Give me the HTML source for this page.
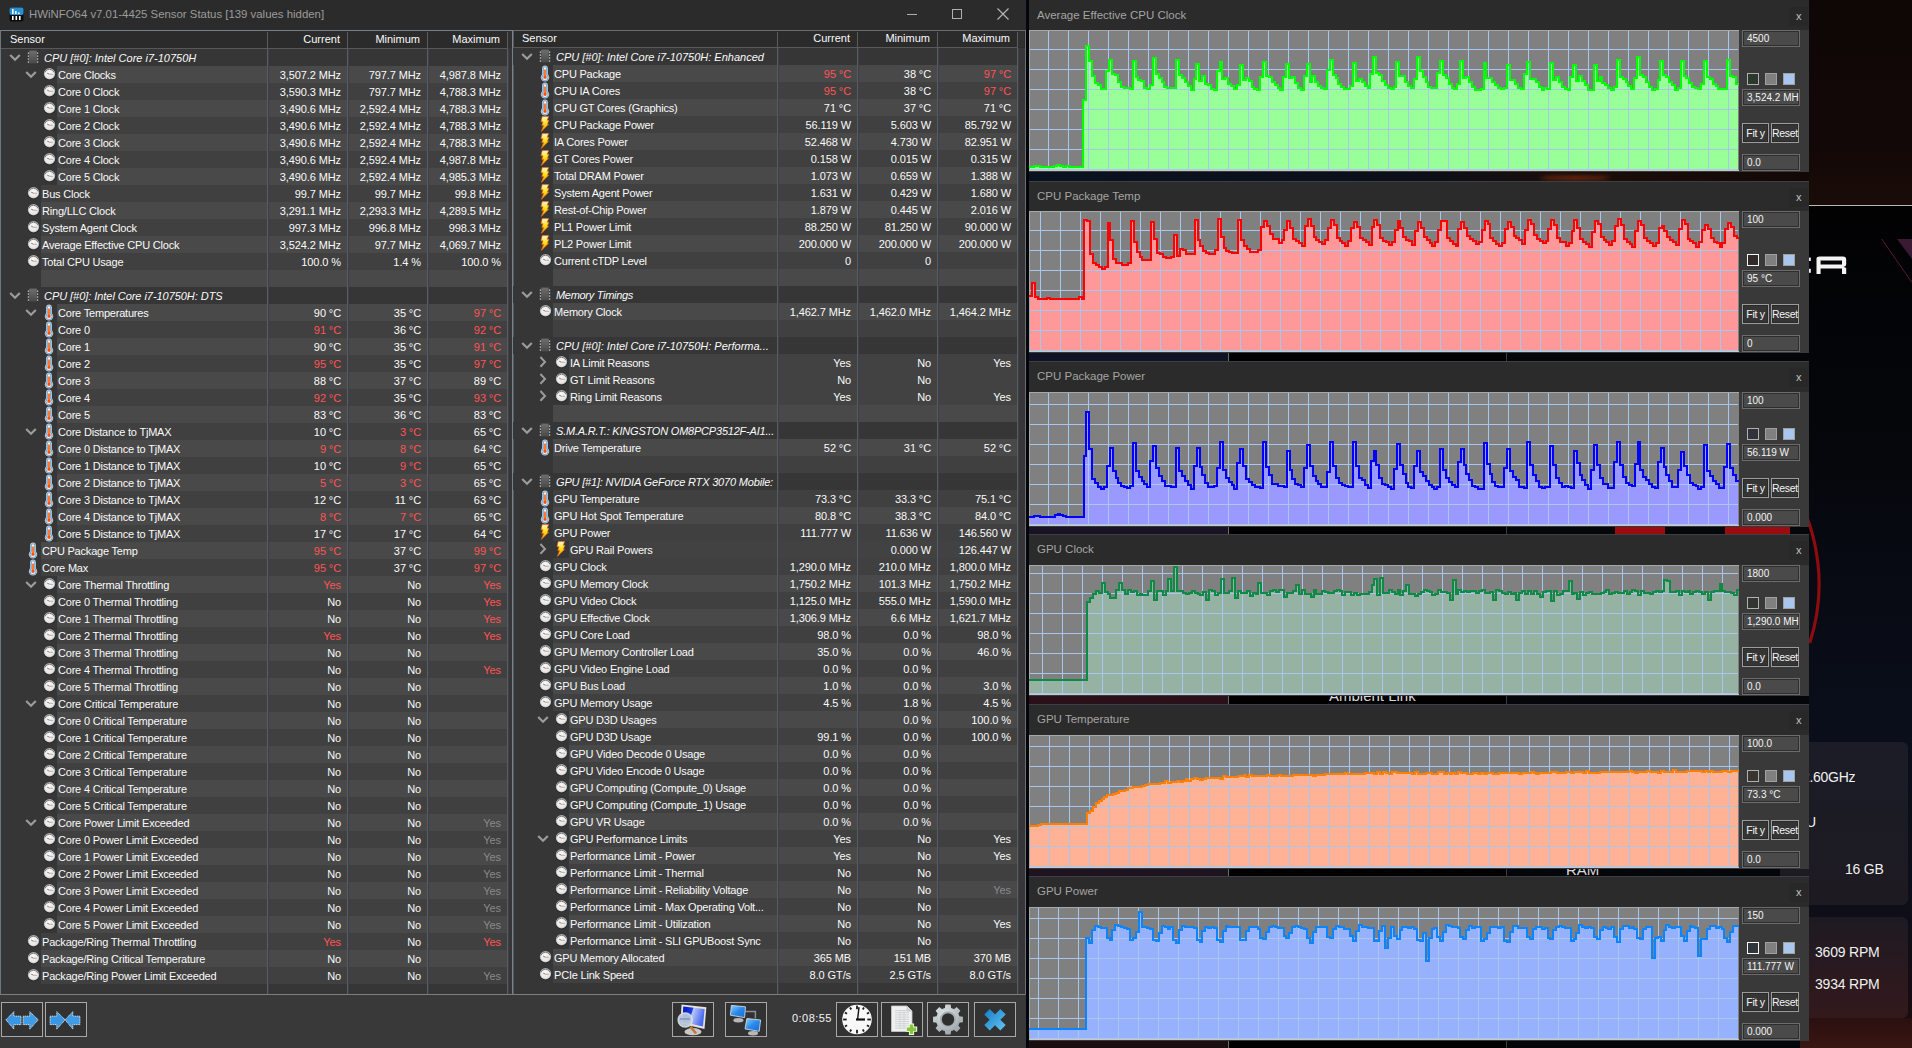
<!DOCTYPE html><html><head><meta charset="utf-8"><style>
*{margin:0;padding:0;box-sizing:border-box}
html,body{width:1912px;height:1048px;overflow:hidden}
body{position:relative;background:#07090f;font-family:"Liberation Sans", sans-serif;}
.ic{position:absolute;display:block}
.bg{position:absolute;height:17px}
.t{position:absolute;height:17px;line-height:17px;font-size:11px;color:#fafafa;white-space:nowrap;padding-top:1px;letter-spacing:-0.2px}
.gi{font-style:italic;color:#fafafa;letter-spacing:0px}
.v{position:absolute;width:113px;text-align:right;height:17px;line-height:17px;font-size:11px;color:#fafafa;white-space:nowrap;padding-top:1px;letter-spacing:-0.1px}
.red{color:#ff5454}
.gry{color:#8a8a8a}
.hd{position:absolute;top:31px;height:17px;line-height:17px;font-size:11px;color:#fafafa;white-space:nowrap}
.gt{position:absolute;font-size:11.5px;line-height:16px;color:#a4a4a4;white-space:nowrap}
.gx{position:absolute;font-size:11px;line-height:16px;color:#c0c0c0}
.box{position:absolute;left:1742px;width:58px;height:17px;border:1px solid #6c6c6c;background:#4a4a4a;box-shadow:inset 0 0 0 1px #2e2e2e}
.bt{position:absolute;left:1747px;height:17px;line-height:17px;font-size:10px;color:#f4f4f4;white-space:nowrap;width:52px;overflow:hidden}
.sq{position:absolute;width:12px;height:12px;border:1px solid #a0a0a0}
.btn{position:absolute;height:20px;border:1px solid #9c9c9c;box-shadow:inset 0 0 0 1px #2a2a2a;background:#353535;color:#f4f4f4;font-size:10.5px;line-height:18px;text-align:center;white-space:nowrap;letter-spacing:-0.3px}
.tbb{position:absolute;top:1002px;width:42px;height:35px;border:1px solid #a8a8a8;background:#323232}
</style></head><body>
<svg width="0" height="0" style="position:absolute"><defs><radialGradient id="gclk" cx="0.45" cy="0.35" r="0.75"><stop offset="0" stop-color="#fafafa"/><stop offset="0.75" stop-color="#e4e4e4"/><stop offset="1" stop-color="#c4c4c4"/></radialGradient><linearGradient id="gbolt" x1="0" y1="0" x2="0" y2="1"><stop offset="0" stop-color="#fff6d8"/><stop offset="0.45" stop-color="#ffe21a"/><stop offset="1" stop-color="#ff8a00"/></linearGradient><linearGradient id="gchip" x1="0" y1="0" x2="0" y2="1"><stop offset="0" stop-color="#6e6e6e"/><stop offset="1" stop-color="#4a4a4a"/></linearGradient></defs></svg>
<div style="position:absolute;left:1026px;top:0;width:886px;height:205px;background:linear-gradient(180deg,#0e0706 0%,#120807 70%,#1a0c08 100%)"></div>
<div style="position:absolute;left:1809px;top:205px;width:103px;height:1px;background:#b8b8b8"></div>
<div style="position:absolute;left:1026px;top:206px;width:886px;height:842px;background:linear-gradient(180deg,#020203 0%,#05070c 30%,#0a0e1a 60%,#0c0f1a 80%,#1a0c10 100%)"></div>
<div style="position:absolute;left:1029px;top:168px;width:780px;height:16px;background:linear-gradient(90deg,#0a1220 0%,#0c0f18 50%,#1a0e0a 70%,#120806 100%)"></div>
<div style="position:absolute;left:1540px;top:176px;width:70px;height:4px;background:#7a2a0e;filter:blur(2px);border-radius:50%"></div>
<div style="position:absolute;left:1029px;top:206px;width:199px;height:842px;background:linear-gradient(180deg,#0c1220 0%,#141428 30%,#2a1018 60%,#1e1420 80%,#1a0e10 100%)"></div>
<div style="position:absolute;left:1228px;top:206px;width:1px;height:842px;background:#6a6a6a"></div>
<div style="position:absolute;left:1229px;top:206px;width:277px;height:842px;background:#000"></div>
<div style="position:absolute;left:1506px;top:206px;width:1px;height:842px;background:#3a3a3a"></div>
<div style="position:absolute;left:1507px;top:206px;width:302px;height:842px;background:#04060a"></div>
<div style="position:absolute;left:1329px;top:687px;font-size:15px;color:#d8d8d8;white-space:nowrap">Ambient Link</div>
<div style="position:absolute;left:1566px;top:861px;font-size:15px;color:#d8d8d8;white-space:nowrap">RAM</div>
<div style="position:absolute;left:1615px;top:524px;width:50px;height:10px;background:#9a0c10"></div>
<div style="position:absolute;left:1725px;top:524px;width:65px;height:10px;background:#9a0c10"></div>
<svg style="position:absolute;left:1026px;top:0" width="886" height="1048" viewBox="1026 0 886 1048"><path d="M1769.9 456.2 A191 191 0 0 1 1809.7 643.0" fill="none" stroke="#8c0c10" stroke-width="3.2"/><path d="M1881.7 239 L1912 282.5" stroke="#5a1a2c" stroke-width="1"/><path d="M1897 239 L1912 239 L1912 259 Z" fill="#3a1a32"/><path d="M1816.5 274 V258.5 Q1816.5 256.5 1820 256.5 H1843 Q1846.2 256.5 1846.2 259.5 V264 Q1846.2 266.5 1843.5 266.8 L1846.2 268 V274 H1842 V268.5 H1820.6 V274 Z M1820.6 260.4 V264.6 H1842 V260.4 Z" fill="#f4f4f4" fill-rule="evenodd"/><rect x="1809" y="257.6" width="1.8" height="3.4" fill="#f4f4f4"/><rect x="1809" y="268.8" width="1.8" height="4" fill="#f4f4f4"/></svg>
<div style="position:absolute;left:1780px;top:742px;width:128px;height:163px;background:linear-gradient(180deg,#1a1c26,#1e1a22);border-radius:6px"></div>
<div style="position:absolute;left:1780px;top:917px;width:128px;height:101px;background:linear-gradient(180deg,#1e1a22,#33191c);border-radius:6px"></div>
<div style="position:absolute;left:1800px;top:1018px;width:112px;height:30px;background:linear-gradient(180deg,#2a1010,#3a1612)"></div>
<div style="position:absolute;left:1802px;top:769px;font-size:14px;color:#f0f0f0;letter-spacing:-0.3px">2.60GHz</div>
<div style="position:absolute;left:1806px;top:814px;font-size:14px;color:#f0f0f0">U</div>
<div style="position:absolute;left:1845px;top:861px;font-size:14px;color:#f0f0f0;letter-spacing:-0.2px">16 GB</div>
<div style="position:absolute;left:1815px;top:944px;font-size:14px;color:#f0f0f0;letter-spacing:-0.2px">3609 RPM</div>
<div style="position:absolute;left:1815px;top:976px;font-size:14px;color:#f0f0f0;letter-spacing:-0.2px">3934 RPM</div>
<div style="position:absolute;left:0;top:0;width:1026px;height:1048px;background:#393939"></div>
<div style="position:absolute;left:0;top:0;width:1026px;height:30px;background:#2b2b2b"></div>
<div style="position:absolute;left:1026px;top:0;width:3px;height:1048px;background:#03070d"></div>
<svg style="position:absolute;left:9px;top:7px" width="15" height="15" viewBox="0 0 15 15"><rect x="0.5" y="0.5" width="14" height="14" rx="2" fill="#0c0c0c"/><rect x="0.5" y="0.5" width="14" height="7.5" rx="2" fill="#2a8fd0"/><rect x="3" y="2" width="1.6" height="5" fill="#fff"/><rect x="6" y="4" width="1.6" height="3" fill="#fff"/><rect x="9" y="5.5" width="1.6" height="1.5" fill="#fff"/><rect x="3" y="9" width="1.6" height="4" fill="#fff"/><rect x="6.5" y="9" width="1.6" height="4" fill="#fff"/><rect x="10" y="9" width="1.6" height="4" fill="#fff"/></svg>
<div style="position:absolute;left:29px;top:6px;font-size:11.4px;line-height:16px;color:#9c9c9c;white-space:nowrap">HWiNFO64 v7.01-4425 Sensor Status [139 values hidden]</div>
<div style="position:absolute;left:907px;top:14px;width:10px;height:1px;background:#b0b0b0"></div>
<div style="position:absolute;left:952px;top:9px;width:10px;height:10px;border:1px solid #b0b0b0"></div>
<svg style="position:absolute;left:997px;top:8px" width="12" height="12" viewBox="0 0 12 12"><path d="M0.5 0.5 L11.5 11.5 M11.5 0.5 L0.5 11.5" stroke="#b8b8b8" stroke-width="1.1"/></svg>
<div style="position:absolute;left:0;top:30px;width:1026px;height:965px;background:#363636"></div>
<div style="position:absolute;left:1px;top:31px;width:1024px;height:17px;background:#2b2b2b"></div>
<div style="position:absolute;left:0;top:30px;width:1026px;height:1px;background:#7a7e86"></div>
<div style="position:absolute;left:0;top:30px;width:1px;height:965px;background:#70747c"></div>
<div style="position:absolute;left:0;top:994px;width:1026px;height:1px;background:#7e7e7e"></div>
<div style="position:absolute;left:512px;top:30px;width:1px;height:965px;background:#7c8088"></div><div style="position:absolute;left:513px;top:31px;width:1px;height:963px;background:#55585e"></div>
<div style="position:absolute;left:1025px;top:30px;width:1px;height:965px;background:#6e6e6e"></div>
<div style="position:absolute;left:1px;top:48px;width:507px;height:1px;background:#585858"></div>
<div style="position:absolute;left:508px;top:31px;width:4px;height:17px;background:#303030"></div>
<div class="hd" style="left:10px;top:31px">Sensor</div>
<div class="hd" style="left:227px;top:31px;width:113px;text-align:right">Current</div>
<div class="hd" style="left:307px;top:31px;width:113px;text-align:right">Minimum</div>
<div class="hd" style="left:387px;top:31px;width:113px;text-align:right">Maximum</div>
<div style="position:absolute;left:513px;top:47px;width:505px;height:1px;background:#585858"></div>
<div style="position:absolute;left:1018px;top:31px;width:6px;height:16px;background:#303030"></div>
<div class="hd" style="left:522px;top:30px">Sensor</div>
<div class="hd" style="left:737px;top:30px;width:113px;text-align:right">Current</div>
<div class="hd" style="left:817px;top:30px;width:113px;text-align:right">Minimum</div>
<div class="hd" style="left:897px;top:30px;width:113px;text-align:right">Maximum</div>
<div class="bg" style="left:1px;top:49px;width:506px;background:#363636"></div>
<svg class="ic" style="left:9px;top:53px" width="12" height="9" viewBox="0 0 12 9"><path d="M1.2 1.9 L6 6.8 L10.8 1.9" fill="none" stroke="#9c9c9c" stroke-width="2.2"/></svg>
<svg class="ic" style="left:27px;top:50px" width="12" height="15" viewBox="0 0 12 15"><rect x="2.3" y="0.6" width="7.4" height="12.8" fill="url(#gchip)"/><rect x="0.8" y="2.50" width="1.3" height="1.3" fill="#d0d0d0"/><rect x="9.9" y="2.50" width="1.3" height="1.3" fill="#d0d0d0"/><rect x="0.8" y="5.45" width="1.3" height="1.3" fill="#d0d0d0"/><rect x="9.9" y="5.45" width="1.3" height="1.3" fill="#d0d0d0"/><rect x="0.8" y="8.40" width="1.3" height="1.3" fill="#d0d0d0"/><rect x="9.9" y="8.40" width="1.3" height="1.3" fill="#d0d0d0"/><rect x="0.8" y="11.35" width="1.3" height="1.3" fill="#d0d0d0"/><rect x="9.9" y="11.35" width="1.3" height="1.3" fill="#d0d0d0"/></svg>
<div class="t gi" style="left:44px;top:49px;letter-spacing:0px">CPU [#0]: Intel Core i7-10750H</div>
<div class="bg" style="left:57px;top:66px;width:210px;background:#494949"></div>
<div class="bg" style="left:269px;top:66px;width:78px;background:#494949"></div>
<div class="bg" style="left:349px;top:66px;width:78px;background:#494949"></div>
<div class="bg" style="left:429px;top:66px;width:78px;background:#494949"></div>
<svg class="ic" style="left:25px;top:70px" width="12" height="9" viewBox="0 0 12 9"><path d="M1.2 1.9 L6 6.8 L10.8 1.9" fill="none" stroke="#9c9c9c" stroke-width="2.2"/></svg>
<svg class="ic" style="left:42.5px;top:67px" width="13" height="14" viewBox="0 0 13 14"><circle cx="6.5" cy="7.3" r="5.9" fill="#181818" opacity="0.9"/><circle cx="6.5" cy="6.8" r="5.7" fill="#b4b4b4"/><circle cx="6.5" cy="7.1" r="4.9" fill="url(#gclk)"/><path d="M1.9 5.4 A4.9 4.9 0 0 1 11.1 5.4" fill="none" stroke="#808080" stroke-width="1"/><path d="M6.5 7.2 L4.2 6.2" stroke="#8c6a4a" stroke-width="0.9"/><path d="M6.5 7.2 L9.8 7.4" stroke="#909090" stroke-width="0.7"/></svg>
<div class="t" style="left:58px;top:66px">Core Clocks</div>
<div class="v" style="left:228px;top:66px">3,507.2 MHz</div>
<div class="v" style="left:308px;top:66px">797.7 MHz</div>
<div class="v" style="left:388px;top:66px">4,987.8 MHz</div>
<div class="bg" style="left:57px;top:83px;width:210px;background:#404040"></div>
<div class="bg" style="left:269px;top:83px;width:78px;background:#404040"></div>
<div class="bg" style="left:349px;top:83px;width:78px;background:#404040"></div>
<div class="bg" style="left:429px;top:83px;width:78px;background:#404040"></div>
<svg class="ic" style="left:42.5px;top:84px" width="13" height="14" viewBox="0 0 13 14"><circle cx="6.5" cy="7.3" r="5.9" fill="#181818" opacity="0.9"/><circle cx="6.5" cy="6.8" r="5.7" fill="#b4b4b4"/><circle cx="6.5" cy="7.1" r="4.9" fill="url(#gclk)"/><path d="M1.9 5.4 A4.9 4.9 0 0 1 11.1 5.4" fill="none" stroke="#808080" stroke-width="1"/><path d="M6.5 7.2 L4.2 6.2" stroke="#8c6a4a" stroke-width="0.9"/><path d="M6.5 7.2 L9.8 7.4" stroke="#909090" stroke-width="0.7"/></svg>
<div class="t" style="left:58px;top:83px">Core 0 Clock</div>
<div class="v" style="left:228px;top:83px">3,590.3 MHz</div>
<div class="v" style="left:308px;top:83px">797.7 MHz</div>
<div class="v" style="left:388px;top:83px">4,788.3 MHz</div>
<div class="bg" style="left:57px;top:100px;width:210px;background:#494949"></div>
<div class="bg" style="left:269px;top:100px;width:78px;background:#494949"></div>
<div class="bg" style="left:349px;top:100px;width:78px;background:#494949"></div>
<div class="bg" style="left:429px;top:100px;width:78px;background:#494949"></div>
<svg class="ic" style="left:42.5px;top:101px" width="13" height="14" viewBox="0 0 13 14"><circle cx="6.5" cy="7.3" r="5.9" fill="#181818" opacity="0.9"/><circle cx="6.5" cy="6.8" r="5.7" fill="#b4b4b4"/><circle cx="6.5" cy="7.1" r="4.9" fill="url(#gclk)"/><path d="M1.9 5.4 A4.9 4.9 0 0 1 11.1 5.4" fill="none" stroke="#808080" stroke-width="1"/><path d="M6.5 7.2 L4.2 6.2" stroke="#8c6a4a" stroke-width="0.9"/><path d="M6.5 7.2 L9.8 7.4" stroke="#909090" stroke-width="0.7"/></svg>
<div class="t" style="left:58px;top:100px">Core 1 Clock</div>
<div class="v" style="left:228px;top:100px">3,490.6 MHz</div>
<div class="v" style="left:308px;top:100px">2,592.4 MHz</div>
<div class="v" style="left:388px;top:100px">4,788.3 MHz</div>
<div class="bg" style="left:57px;top:117px;width:210px;background:#404040"></div>
<div class="bg" style="left:269px;top:117px;width:78px;background:#404040"></div>
<div class="bg" style="left:349px;top:117px;width:78px;background:#404040"></div>
<div class="bg" style="left:429px;top:117px;width:78px;background:#404040"></div>
<svg class="ic" style="left:42.5px;top:118px" width="13" height="14" viewBox="0 0 13 14"><circle cx="6.5" cy="7.3" r="5.9" fill="#181818" opacity="0.9"/><circle cx="6.5" cy="6.8" r="5.7" fill="#b4b4b4"/><circle cx="6.5" cy="7.1" r="4.9" fill="url(#gclk)"/><path d="M1.9 5.4 A4.9 4.9 0 0 1 11.1 5.4" fill="none" stroke="#808080" stroke-width="1"/><path d="M6.5 7.2 L4.2 6.2" stroke="#8c6a4a" stroke-width="0.9"/><path d="M6.5 7.2 L9.8 7.4" stroke="#909090" stroke-width="0.7"/></svg>
<div class="t" style="left:58px;top:117px">Core 2 Clock</div>
<div class="v" style="left:228px;top:117px">3,490.6 MHz</div>
<div class="v" style="left:308px;top:117px">2,592.4 MHz</div>
<div class="v" style="left:388px;top:117px">4,788.3 MHz</div>
<div class="bg" style="left:57px;top:134px;width:210px;background:#494949"></div>
<div class="bg" style="left:269px;top:134px;width:78px;background:#494949"></div>
<div class="bg" style="left:349px;top:134px;width:78px;background:#494949"></div>
<div class="bg" style="left:429px;top:134px;width:78px;background:#494949"></div>
<svg class="ic" style="left:42.5px;top:135px" width="13" height="14" viewBox="0 0 13 14"><circle cx="6.5" cy="7.3" r="5.9" fill="#181818" opacity="0.9"/><circle cx="6.5" cy="6.8" r="5.7" fill="#b4b4b4"/><circle cx="6.5" cy="7.1" r="4.9" fill="url(#gclk)"/><path d="M1.9 5.4 A4.9 4.9 0 0 1 11.1 5.4" fill="none" stroke="#808080" stroke-width="1"/><path d="M6.5 7.2 L4.2 6.2" stroke="#8c6a4a" stroke-width="0.9"/><path d="M6.5 7.2 L9.8 7.4" stroke="#909090" stroke-width="0.7"/></svg>
<div class="t" style="left:58px;top:134px">Core 3 Clock</div>
<div class="v" style="left:228px;top:134px">3,490.6 MHz</div>
<div class="v" style="left:308px;top:134px">2,592.4 MHz</div>
<div class="v" style="left:388px;top:134px">4,788.3 MHz</div>
<div class="bg" style="left:57px;top:151px;width:210px;background:#404040"></div>
<div class="bg" style="left:269px;top:151px;width:78px;background:#404040"></div>
<div class="bg" style="left:349px;top:151px;width:78px;background:#404040"></div>
<div class="bg" style="left:429px;top:151px;width:78px;background:#404040"></div>
<svg class="ic" style="left:42.5px;top:152px" width="13" height="14" viewBox="0 0 13 14"><circle cx="6.5" cy="7.3" r="5.9" fill="#181818" opacity="0.9"/><circle cx="6.5" cy="6.8" r="5.7" fill="#b4b4b4"/><circle cx="6.5" cy="7.1" r="4.9" fill="url(#gclk)"/><path d="M1.9 5.4 A4.9 4.9 0 0 1 11.1 5.4" fill="none" stroke="#808080" stroke-width="1"/><path d="M6.5 7.2 L4.2 6.2" stroke="#8c6a4a" stroke-width="0.9"/><path d="M6.5 7.2 L9.8 7.4" stroke="#909090" stroke-width="0.7"/></svg>
<div class="t" style="left:58px;top:151px">Core 4 Clock</div>
<div class="v" style="left:228px;top:151px">3,490.6 MHz</div>
<div class="v" style="left:308px;top:151px">2,592.4 MHz</div>
<div class="v" style="left:388px;top:151px">4,987.8 MHz</div>
<div class="bg" style="left:57px;top:168px;width:210px;background:#494949"></div>
<div class="bg" style="left:269px;top:168px;width:78px;background:#494949"></div>
<div class="bg" style="left:349px;top:168px;width:78px;background:#494949"></div>
<div class="bg" style="left:429px;top:168px;width:78px;background:#494949"></div>
<svg class="ic" style="left:42.5px;top:169px" width="13" height="14" viewBox="0 0 13 14"><circle cx="6.5" cy="7.3" r="5.9" fill="#181818" opacity="0.9"/><circle cx="6.5" cy="6.8" r="5.7" fill="#b4b4b4"/><circle cx="6.5" cy="7.1" r="4.9" fill="url(#gclk)"/><path d="M1.9 5.4 A4.9 4.9 0 0 1 11.1 5.4" fill="none" stroke="#808080" stroke-width="1"/><path d="M6.5 7.2 L4.2 6.2" stroke="#8c6a4a" stroke-width="0.9"/><path d="M6.5 7.2 L9.8 7.4" stroke="#909090" stroke-width="0.7"/></svg>
<div class="t" style="left:58px;top:168px">Core 5 Clock</div>
<div class="v" style="left:228px;top:168px">3,490.6 MHz</div>
<div class="v" style="left:308px;top:168px">2,592.4 MHz</div>
<div class="v" style="left:388px;top:168px">4,985.3 MHz</div>
<div class="bg" style="left:41px;top:185px;width:226px;background:#404040"></div>
<div class="bg" style="left:269px;top:185px;width:78px;background:#404040"></div>
<div class="bg" style="left:349px;top:185px;width:78px;background:#404040"></div>
<div class="bg" style="left:429px;top:185px;width:78px;background:#404040"></div>
<svg class="ic" style="left:26.5px;top:186px" width="13" height="14" viewBox="0 0 13 14"><circle cx="6.5" cy="7.3" r="5.9" fill="#181818" opacity="0.9"/><circle cx="6.5" cy="6.8" r="5.7" fill="#b4b4b4"/><circle cx="6.5" cy="7.1" r="4.9" fill="url(#gclk)"/><path d="M1.9 5.4 A4.9 4.9 0 0 1 11.1 5.4" fill="none" stroke="#808080" stroke-width="1"/><path d="M6.5 7.2 L4.2 6.2" stroke="#8c6a4a" stroke-width="0.9"/><path d="M6.5 7.2 L9.8 7.4" stroke="#909090" stroke-width="0.7"/></svg>
<div class="t" style="left:42px;top:185px">Bus Clock</div>
<div class="v" style="left:228px;top:185px">99.7 MHz</div>
<div class="v" style="left:308px;top:185px">99.7 MHz</div>
<div class="v" style="left:388px;top:185px">99.8 MHz</div>
<div class="bg" style="left:41px;top:202px;width:226px;background:#494949"></div>
<div class="bg" style="left:269px;top:202px;width:78px;background:#494949"></div>
<div class="bg" style="left:349px;top:202px;width:78px;background:#494949"></div>
<div class="bg" style="left:429px;top:202px;width:78px;background:#494949"></div>
<svg class="ic" style="left:26.5px;top:203px" width="13" height="14" viewBox="0 0 13 14"><circle cx="6.5" cy="7.3" r="5.9" fill="#181818" opacity="0.9"/><circle cx="6.5" cy="6.8" r="5.7" fill="#b4b4b4"/><circle cx="6.5" cy="7.1" r="4.9" fill="url(#gclk)"/><path d="M1.9 5.4 A4.9 4.9 0 0 1 11.1 5.4" fill="none" stroke="#808080" stroke-width="1"/><path d="M6.5 7.2 L4.2 6.2" stroke="#8c6a4a" stroke-width="0.9"/><path d="M6.5 7.2 L9.8 7.4" stroke="#909090" stroke-width="0.7"/></svg>
<div class="t" style="left:42px;top:202px">Ring/LLC Clock</div>
<div class="v" style="left:228px;top:202px">3,291.1 MHz</div>
<div class="v" style="left:308px;top:202px">2,293.3 MHz</div>
<div class="v" style="left:388px;top:202px">4,289.5 MHz</div>
<div class="bg" style="left:41px;top:219px;width:226px;background:#404040"></div>
<div class="bg" style="left:269px;top:219px;width:78px;background:#404040"></div>
<div class="bg" style="left:349px;top:219px;width:78px;background:#404040"></div>
<div class="bg" style="left:429px;top:219px;width:78px;background:#404040"></div>
<svg class="ic" style="left:26.5px;top:220px" width="13" height="14" viewBox="0 0 13 14"><circle cx="6.5" cy="7.3" r="5.9" fill="#181818" opacity="0.9"/><circle cx="6.5" cy="6.8" r="5.7" fill="#b4b4b4"/><circle cx="6.5" cy="7.1" r="4.9" fill="url(#gclk)"/><path d="M1.9 5.4 A4.9 4.9 0 0 1 11.1 5.4" fill="none" stroke="#808080" stroke-width="1"/><path d="M6.5 7.2 L4.2 6.2" stroke="#8c6a4a" stroke-width="0.9"/><path d="M6.5 7.2 L9.8 7.4" stroke="#909090" stroke-width="0.7"/></svg>
<div class="t" style="left:42px;top:219px">System Agent Clock</div>
<div class="v" style="left:228px;top:219px">997.3 MHz</div>
<div class="v" style="left:308px;top:219px">996.8 MHz</div>
<div class="v" style="left:388px;top:219px">998.3 MHz</div>
<div class="bg" style="left:41px;top:236px;width:226px;background:#494949"></div>
<div class="bg" style="left:269px;top:236px;width:78px;background:#494949"></div>
<div class="bg" style="left:349px;top:236px;width:78px;background:#494949"></div>
<div class="bg" style="left:429px;top:236px;width:78px;background:#494949"></div>
<svg class="ic" style="left:26.5px;top:237px" width="13" height="14" viewBox="0 0 13 14"><circle cx="6.5" cy="7.3" r="5.9" fill="#181818" opacity="0.9"/><circle cx="6.5" cy="6.8" r="5.7" fill="#b4b4b4"/><circle cx="6.5" cy="7.1" r="4.9" fill="url(#gclk)"/><path d="M1.9 5.4 A4.9 4.9 0 0 1 11.1 5.4" fill="none" stroke="#808080" stroke-width="1"/><path d="M6.5 7.2 L4.2 6.2" stroke="#8c6a4a" stroke-width="0.9"/><path d="M6.5 7.2 L9.8 7.4" stroke="#909090" stroke-width="0.7"/></svg>
<div class="t" style="left:42px;top:236px">Average Effective CPU Clock</div>
<div class="v" style="left:228px;top:236px">3,524.2 MHz</div>
<div class="v" style="left:308px;top:236px">97.7 MHz</div>
<div class="v" style="left:388px;top:236px">4,069.7 MHz</div>
<div class="bg" style="left:41px;top:253px;width:226px;background:#404040"></div>
<div class="bg" style="left:269px;top:253px;width:78px;background:#404040"></div>
<div class="bg" style="left:349px;top:253px;width:78px;background:#404040"></div>
<div class="bg" style="left:429px;top:253px;width:78px;background:#404040"></div>
<svg class="ic" style="left:26.5px;top:254px" width="13" height="14" viewBox="0 0 13 14"><circle cx="6.5" cy="7.3" r="5.9" fill="#181818" opacity="0.9"/><circle cx="6.5" cy="6.8" r="5.7" fill="#b4b4b4"/><circle cx="6.5" cy="7.1" r="4.9" fill="url(#gclk)"/><path d="M1.9 5.4 A4.9 4.9 0 0 1 11.1 5.4" fill="none" stroke="#808080" stroke-width="1"/><path d="M6.5 7.2 L4.2 6.2" stroke="#8c6a4a" stroke-width="0.9"/><path d="M6.5 7.2 L9.8 7.4" stroke="#909090" stroke-width="0.7"/></svg>
<div class="t" style="left:42px;top:253px">Total CPU Usage</div>
<div class="v" style="left:228px;top:253px">100.0 %</div>
<div class="v" style="left:308px;top:253px">1.4 %</div>
<div class="v" style="left:388px;top:253px">100.0 %</div>
<div class="bg" style="left:41px;top:270px;width:226px;background:#494949"></div>
<div class="bg" style="left:269px;top:270px;width:78px;background:#494949"></div>
<div class="bg" style="left:349px;top:270px;width:78px;background:#494949"></div>
<div class="bg" style="left:429px;top:270px;width:78px;background:#494949"></div>
<div class="bg" style="left:1px;top:287px;width:506px;background:#363636"></div>
<svg class="ic" style="left:9px;top:291px" width="12" height="9" viewBox="0 0 12 9"><path d="M1.2 1.9 L6 6.8 L10.8 1.9" fill="none" stroke="#9c9c9c" stroke-width="2.2"/></svg>
<svg class="ic" style="left:27px;top:288px" width="12" height="15" viewBox="0 0 12 15"><rect x="2.3" y="0.6" width="7.4" height="12.8" fill="url(#gchip)"/><rect x="0.8" y="2.50" width="1.3" height="1.3" fill="#d0d0d0"/><rect x="9.9" y="2.50" width="1.3" height="1.3" fill="#d0d0d0"/><rect x="0.8" y="5.45" width="1.3" height="1.3" fill="#d0d0d0"/><rect x="9.9" y="5.45" width="1.3" height="1.3" fill="#d0d0d0"/><rect x="0.8" y="8.40" width="1.3" height="1.3" fill="#d0d0d0"/><rect x="9.9" y="8.40" width="1.3" height="1.3" fill="#d0d0d0"/><rect x="0.8" y="11.35" width="1.3" height="1.3" fill="#d0d0d0"/><rect x="9.9" y="11.35" width="1.3" height="1.3" fill="#d0d0d0"/></svg>
<div class="t gi" style="left:44px;top:287px;letter-spacing:-0.05px">CPU [#0]: Intel Core i7-10750H: DTS</div>
<div class="bg" style="left:57px;top:304px;width:210px;background:#494949"></div>
<div class="bg" style="left:269px;top:304px;width:78px;background:#494949"></div>
<div class="bg" style="left:349px;top:304px;width:78px;background:#494949"></div>
<div class="bg" style="left:429px;top:304px;width:78px;background:#494949"></div>
<svg class="ic" style="left:25px;top:308px" width="12" height="9" viewBox="0 0 12 9"><path d="M1.2 1.9 L6 6.8 L10.8 1.9" fill="none" stroke="#9c9c9c" stroke-width="2.2"/></svg>
<svg class="ic" style="left:44px;top:304px" width="10" height="17" viewBox="0 0 10 17"><rect x="2.1" y="0.6" width="5.8" height="11.5" rx="2.9" fill="#c4c8cc"/><circle cx="5" cy="12.4" r="4.2" fill="#c4c8cc"/><rect x="3" y="1.5" width="4" height="10.5" rx="2" fill="#5aa0e0"/><circle cx="5" cy="12.4" r="3.3" fill="#5aa0e0"/><rect x="3.8" y="2.2" width="2.4" height="10" rx="1.2" fill="#eef6fc"/><circle cx="5" cy="12.4" r="2.5" fill="#eef6fc"/><rect x="4.2" y="4.5" width="1.6" height="8" fill="#ff5a00"/><rect x="3.4" y="10.8" width="3.2" height="3" rx="0.8" fill="#ff4e00"/></svg>
<div class="t" style="left:58px;top:304px">Core Temperatures</div>
<div class="v" style="left:228px;top:304px">90 °C</div>
<div class="v" style="left:308px;top:304px">35 °C</div>
<div class="v red" style="left:388px;top:304px">97 °C</div>
<div class="bg" style="left:57px;top:321px;width:210px;background:#404040"></div>
<div class="bg" style="left:269px;top:321px;width:78px;background:#404040"></div>
<div class="bg" style="left:349px;top:321px;width:78px;background:#404040"></div>
<div class="bg" style="left:429px;top:321px;width:78px;background:#404040"></div>
<svg class="ic" style="left:44px;top:321px" width="10" height="17" viewBox="0 0 10 17"><rect x="2.1" y="0.6" width="5.8" height="11.5" rx="2.9" fill="#c4c8cc"/><circle cx="5" cy="12.4" r="4.2" fill="#c4c8cc"/><rect x="3" y="1.5" width="4" height="10.5" rx="2" fill="#5aa0e0"/><circle cx="5" cy="12.4" r="3.3" fill="#5aa0e0"/><rect x="3.8" y="2.2" width="2.4" height="10" rx="1.2" fill="#eef6fc"/><circle cx="5" cy="12.4" r="2.5" fill="#eef6fc"/><rect x="4.2" y="4.5" width="1.6" height="8" fill="#ff5a00"/><rect x="3.4" y="10.8" width="3.2" height="3" rx="0.8" fill="#ff4e00"/></svg>
<div class="t" style="left:58px;top:321px">Core 0</div>
<div class="v red" style="left:228px;top:321px">91 °C</div>
<div class="v" style="left:308px;top:321px">36 °C</div>
<div class="v red" style="left:388px;top:321px">92 °C</div>
<div class="bg" style="left:57px;top:338px;width:210px;background:#494949"></div>
<div class="bg" style="left:269px;top:338px;width:78px;background:#494949"></div>
<div class="bg" style="left:349px;top:338px;width:78px;background:#494949"></div>
<div class="bg" style="left:429px;top:338px;width:78px;background:#494949"></div>
<svg class="ic" style="left:44px;top:338px" width="10" height="17" viewBox="0 0 10 17"><rect x="2.1" y="0.6" width="5.8" height="11.5" rx="2.9" fill="#c4c8cc"/><circle cx="5" cy="12.4" r="4.2" fill="#c4c8cc"/><rect x="3" y="1.5" width="4" height="10.5" rx="2" fill="#5aa0e0"/><circle cx="5" cy="12.4" r="3.3" fill="#5aa0e0"/><rect x="3.8" y="2.2" width="2.4" height="10" rx="1.2" fill="#eef6fc"/><circle cx="5" cy="12.4" r="2.5" fill="#eef6fc"/><rect x="4.2" y="4.5" width="1.6" height="8" fill="#ff5a00"/><rect x="3.4" y="10.8" width="3.2" height="3" rx="0.8" fill="#ff4e00"/></svg>
<div class="t" style="left:58px;top:338px">Core 1</div>
<div class="v" style="left:228px;top:338px">90 °C</div>
<div class="v" style="left:308px;top:338px">35 °C</div>
<div class="v red" style="left:388px;top:338px">91 °C</div>
<div class="bg" style="left:57px;top:355px;width:210px;background:#404040"></div>
<div class="bg" style="left:269px;top:355px;width:78px;background:#404040"></div>
<div class="bg" style="left:349px;top:355px;width:78px;background:#404040"></div>
<div class="bg" style="left:429px;top:355px;width:78px;background:#404040"></div>
<svg class="ic" style="left:44px;top:355px" width="10" height="17" viewBox="0 0 10 17"><rect x="2.1" y="0.6" width="5.8" height="11.5" rx="2.9" fill="#c4c8cc"/><circle cx="5" cy="12.4" r="4.2" fill="#c4c8cc"/><rect x="3" y="1.5" width="4" height="10.5" rx="2" fill="#5aa0e0"/><circle cx="5" cy="12.4" r="3.3" fill="#5aa0e0"/><rect x="3.8" y="2.2" width="2.4" height="10" rx="1.2" fill="#eef6fc"/><circle cx="5" cy="12.4" r="2.5" fill="#eef6fc"/><rect x="4.2" y="4.5" width="1.6" height="8" fill="#ff5a00"/><rect x="3.4" y="10.8" width="3.2" height="3" rx="0.8" fill="#ff4e00"/></svg>
<div class="t" style="left:58px;top:355px">Core 2</div>
<div class="v red" style="left:228px;top:355px">95 °C</div>
<div class="v" style="left:308px;top:355px">35 °C</div>
<div class="v red" style="left:388px;top:355px">97 °C</div>
<div class="bg" style="left:57px;top:372px;width:210px;background:#494949"></div>
<div class="bg" style="left:269px;top:372px;width:78px;background:#494949"></div>
<div class="bg" style="left:349px;top:372px;width:78px;background:#494949"></div>
<div class="bg" style="left:429px;top:372px;width:78px;background:#494949"></div>
<svg class="ic" style="left:44px;top:372px" width="10" height="17" viewBox="0 0 10 17"><rect x="2.1" y="0.6" width="5.8" height="11.5" rx="2.9" fill="#c4c8cc"/><circle cx="5" cy="12.4" r="4.2" fill="#c4c8cc"/><rect x="3" y="1.5" width="4" height="10.5" rx="2" fill="#5aa0e0"/><circle cx="5" cy="12.4" r="3.3" fill="#5aa0e0"/><rect x="3.8" y="2.2" width="2.4" height="10" rx="1.2" fill="#eef6fc"/><circle cx="5" cy="12.4" r="2.5" fill="#eef6fc"/><rect x="4.2" y="4.5" width="1.6" height="8" fill="#ff5a00"/><rect x="3.4" y="10.8" width="3.2" height="3" rx="0.8" fill="#ff4e00"/></svg>
<div class="t" style="left:58px;top:372px">Core 3</div>
<div class="v" style="left:228px;top:372px">88 °C</div>
<div class="v" style="left:308px;top:372px">37 °C</div>
<div class="v" style="left:388px;top:372px">89 °C</div>
<div class="bg" style="left:57px;top:389px;width:210px;background:#404040"></div>
<div class="bg" style="left:269px;top:389px;width:78px;background:#404040"></div>
<div class="bg" style="left:349px;top:389px;width:78px;background:#404040"></div>
<div class="bg" style="left:429px;top:389px;width:78px;background:#404040"></div>
<svg class="ic" style="left:44px;top:389px" width="10" height="17" viewBox="0 0 10 17"><rect x="2.1" y="0.6" width="5.8" height="11.5" rx="2.9" fill="#c4c8cc"/><circle cx="5" cy="12.4" r="4.2" fill="#c4c8cc"/><rect x="3" y="1.5" width="4" height="10.5" rx="2" fill="#5aa0e0"/><circle cx="5" cy="12.4" r="3.3" fill="#5aa0e0"/><rect x="3.8" y="2.2" width="2.4" height="10" rx="1.2" fill="#eef6fc"/><circle cx="5" cy="12.4" r="2.5" fill="#eef6fc"/><rect x="4.2" y="4.5" width="1.6" height="8" fill="#ff5a00"/><rect x="3.4" y="10.8" width="3.2" height="3" rx="0.8" fill="#ff4e00"/></svg>
<div class="t" style="left:58px;top:389px">Core 4</div>
<div class="v red" style="left:228px;top:389px">92 °C</div>
<div class="v" style="left:308px;top:389px">35 °C</div>
<div class="v red" style="left:388px;top:389px">93 °C</div>
<div class="bg" style="left:57px;top:406px;width:210px;background:#494949"></div>
<div class="bg" style="left:269px;top:406px;width:78px;background:#494949"></div>
<div class="bg" style="left:349px;top:406px;width:78px;background:#494949"></div>
<div class="bg" style="left:429px;top:406px;width:78px;background:#494949"></div>
<svg class="ic" style="left:44px;top:406px" width="10" height="17" viewBox="0 0 10 17"><rect x="2.1" y="0.6" width="5.8" height="11.5" rx="2.9" fill="#c4c8cc"/><circle cx="5" cy="12.4" r="4.2" fill="#c4c8cc"/><rect x="3" y="1.5" width="4" height="10.5" rx="2" fill="#5aa0e0"/><circle cx="5" cy="12.4" r="3.3" fill="#5aa0e0"/><rect x="3.8" y="2.2" width="2.4" height="10" rx="1.2" fill="#eef6fc"/><circle cx="5" cy="12.4" r="2.5" fill="#eef6fc"/><rect x="4.2" y="4.5" width="1.6" height="8" fill="#ff5a00"/><rect x="3.4" y="10.8" width="3.2" height="3" rx="0.8" fill="#ff4e00"/></svg>
<div class="t" style="left:58px;top:406px">Core 5</div>
<div class="v" style="left:228px;top:406px">83 °C</div>
<div class="v" style="left:308px;top:406px">36 °C</div>
<div class="v" style="left:388px;top:406px">83 °C</div>
<div class="bg" style="left:57px;top:423px;width:210px;background:#404040"></div>
<div class="bg" style="left:269px;top:423px;width:78px;background:#404040"></div>
<div class="bg" style="left:349px;top:423px;width:78px;background:#404040"></div>
<div class="bg" style="left:429px;top:423px;width:78px;background:#404040"></div>
<svg class="ic" style="left:25px;top:427px" width="12" height="9" viewBox="0 0 12 9"><path d="M1.2 1.9 L6 6.8 L10.8 1.9" fill="none" stroke="#9c9c9c" stroke-width="2.2"/></svg>
<svg class="ic" style="left:44px;top:423px" width="10" height="17" viewBox="0 0 10 17"><rect x="2.1" y="0.6" width="5.8" height="11.5" rx="2.9" fill="#c4c8cc"/><circle cx="5" cy="12.4" r="4.2" fill="#c4c8cc"/><rect x="3" y="1.5" width="4" height="10.5" rx="2" fill="#5aa0e0"/><circle cx="5" cy="12.4" r="3.3" fill="#5aa0e0"/><rect x="3.8" y="2.2" width="2.4" height="10" rx="1.2" fill="#eef6fc"/><circle cx="5" cy="12.4" r="2.5" fill="#eef6fc"/><rect x="4.2" y="4.5" width="1.6" height="8" fill="#ff5a00"/><rect x="3.4" y="10.8" width="3.2" height="3" rx="0.8" fill="#ff4e00"/></svg>
<div class="t" style="left:58px;top:423px">Core Distance to TjMAX</div>
<div class="v" style="left:228px;top:423px">10 °C</div>
<div class="v red" style="left:308px;top:423px">3 °C</div>
<div class="v" style="left:388px;top:423px">65 °C</div>
<div class="bg" style="left:57px;top:440px;width:210px;background:#494949"></div>
<div class="bg" style="left:269px;top:440px;width:78px;background:#494949"></div>
<div class="bg" style="left:349px;top:440px;width:78px;background:#494949"></div>
<div class="bg" style="left:429px;top:440px;width:78px;background:#494949"></div>
<svg class="ic" style="left:44px;top:440px" width="10" height="17" viewBox="0 0 10 17"><rect x="2.1" y="0.6" width="5.8" height="11.5" rx="2.9" fill="#c4c8cc"/><circle cx="5" cy="12.4" r="4.2" fill="#c4c8cc"/><rect x="3" y="1.5" width="4" height="10.5" rx="2" fill="#5aa0e0"/><circle cx="5" cy="12.4" r="3.3" fill="#5aa0e0"/><rect x="3.8" y="2.2" width="2.4" height="10" rx="1.2" fill="#eef6fc"/><circle cx="5" cy="12.4" r="2.5" fill="#eef6fc"/><rect x="4.2" y="4.5" width="1.6" height="8" fill="#ff5a00"/><rect x="3.4" y="10.8" width="3.2" height="3" rx="0.8" fill="#ff4e00"/></svg>
<div class="t" style="left:58px;top:440px">Core 0 Distance to TjMAX</div>
<div class="v red" style="left:228px;top:440px">9 °C</div>
<div class="v red" style="left:308px;top:440px">8 °C</div>
<div class="v" style="left:388px;top:440px">64 °C</div>
<div class="bg" style="left:57px;top:457px;width:210px;background:#404040"></div>
<div class="bg" style="left:269px;top:457px;width:78px;background:#404040"></div>
<div class="bg" style="left:349px;top:457px;width:78px;background:#404040"></div>
<div class="bg" style="left:429px;top:457px;width:78px;background:#404040"></div>
<svg class="ic" style="left:44px;top:457px" width="10" height="17" viewBox="0 0 10 17"><rect x="2.1" y="0.6" width="5.8" height="11.5" rx="2.9" fill="#c4c8cc"/><circle cx="5" cy="12.4" r="4.2" fill="#c4c8cc"/><rect x="3" y="1.5" width="4" height="10.5" rx="2" fill="#5aa0e0"/><circle cx="5" cy="12.4" r="3.3" fill="#5aa0e0"/><rect x="3.8" y="2.2" width="2.4" height="10" rx="1.2" fill="#eef6fc"/><circle cx="5" cy="12.4" r="2.5" fill="#eef6fc"/><rect x="4.2" y="4.5" width="1.6" height="8" fill="#ff5a00"/><rect x="3.4" y="10.8" width="3.2" height="3" rx="0.8" fill="#ff4e00"/></svg>
<div class="t" style="left:58px;top:457px">Core 1 Distance to TjMAX</div>
<div class="v" style="left:228px;top:457px">10 °C</div>
<div class="v red" style="left:308px;top:457px">9 °C</div>
<div class="v" style="left:388px;top:457px">65 °C</div>
<div class="bg" style="left:57px;top:474px;width:210px;background:#494949"></div>
<div class="bg" style="left:269px;top:474px;width:78px;background:#494949"></div>
<div class="bg" style="left:349px;top:474px;width:78px;background:#494949"></div>
<div class="bg" style="left:429px;top:474px;width:78px;background:#494949"></div>
<svg class="ic" style="left:44px;top:474px" width="10" height="17" viewBox="0 0 10 17"><rect x="2.1" y="0.6" width="5.8" height="11.5" rx="2.9" fill="#c4c8cc"/><circle cx="5" cy="12.4" r="4.2" fill="#c4c8cc"/><rect x="3" y="1.5" width="4" height="10.5" rx="2" fill="#5aa0e0"/><circle cx="5" cy="12.4" r="3.3" fill="#5aa0e0"/><rect x="3.8" y="2.2" width="2.4" height="10" rx="1.2" fill="#eef6fc"/><circle cx="5" cy="12.4" r="2.5" fill="#eef6fc"/><rect x="4.2" y="4.5" width="1.6" height="8" fill="#ff5a00"/><rect x="3.4" y="10.8" width="3.2" height="3" rx="0.8" fill="#ff4e00"/></svg>
<div class="t" style="left:58px;top:474px">Core 2 Distance to TjMAX</div>
<div class="v red" style="left:228px;top:474px">5 °C</div>
<div class="v red" style="left:308px;top:474px">3 °C</div>
<div class="v" style="left:388px;top:474px">65 °C</div>
<div class="bg" style="left:57px;top:491px;width:210px;background:#404040"></div>
<div class="bg" style="left:269px;top:491px;width:78px;background:#404040"></div>
<div class="bg" style="left:349px;top:491px;width:78px;background:#404040"></div>
<div class="bg" style="left:429px;top:491px;width:78px;background:#404040"></div>
<svg class="ic" style="left:44px;top:491px" width="10" height="17" viewBox="0 0 10 17"><rect x="2.1" y="0.6" width="5.8" height="11.5" rx="2.9" fill="#c4c8cc"/><circle cx="5" cy="12.4" r="4.2" fill="#c4c8cc"/><rect x="3" y="1.5" width="4" height="10.5" rx="2" fill="#5aa0e0"/><circle cx="5" cy="12.4" r="3.3" fill="#5aa0e0"/><rect x="3.8" y="2.2" width="2.4" height="10" rx="1.2" fill="#eef6fc"/><circle cx="5" cy="12.4" r="2.5" fill="#eef6fc"/><rect x="4.2" y="4.5" width="1.6" height="8" fill="#ff5a00"/><rect x="3.4" y="10.8" width="3.2" height="3" rx="0.8" fill="#ff4e00"/></svg>
<div class="t" style="left:58px;top:491px">Core 3 Distance to TjMAX</div>
<div class="v" style="left:228px;top:491px">12 °C</div>
<div class="v" style="left:308px;top:491px">11 °C</div>
<div class="v" style="left:388px;top:491px">63 °C</div>
<div class="bg" style="left:57px;top:508px;width:210px;background:#494949"></div>
<div class="bg" style="left:269px;top:508px;width:78px;background:#494949"></div>
<div class="bg" style="left:349px;top:508px;width:78px;background:#494949"></div>
<div class="bg" style="left:429px;top:508px;width:78px;background:#494949"></div>
<svg class="ic" style="left:44px;top:508px" width="10" height="17" viewBox="0 0 10 17"><rect x="2.1" y="0.6" width="5.8" height="11.5" rx="2.9" fill="#c4c8cc"/><circle cx="5" cy="12.4" r="4.2" fill="#c4c8cc"/><rect x="3" y="1.5" width="4" height="10.5" rx="2" fill="#5aa0e0"/><circle cx="5" cy="12.4" r="3.3" fill="#5aa0e0"/><rect x="3.8" y="2.2" width="2.4" height="10" rx="1.2" fill="#eef6fc"/><circle cx="5" cy="12.4" r="2.5" fill="#eef6fc"/><rect x="4.2" y="4.5" width="1.6" height="8" fill="#ff5a00"/><rect x="3.4" y="10.8" width="3.2" height="3" rx="0.8" fill="#ff4e00"/></svg>
<div class="t" style="left:58px;top:508px">Core 4 Distance to TjMAX</div>
<div class="v red" style="left:228px;top:508px">8 °C</div>
<div class="v red" style="left:308px;top:508px">7 °C</div>
<div class="v" style="left:388px;top:508px">65 °C</div>
<div class="bg" style="left:57px;top:525px;width:210px;background:#404040"></div>
<div class="bg" style="left:269px;top:525px;width:78px;background:#404040"></div>
<div class="bg" style="left:349px;top:525px;width:78px;background:#404040"></div>
<div class="bg" style="left:429px;top:525px;width:78px;background:#404040"></div>
<svg class="ic" style="left:44px;top:525px" width="10" height="17" viewBox="0 0 10 17"><rect x="2.1" y="0.6" width="5.8" height="11.5" rx="2.9" fill="#c4c8cc"/><circle cx="5" cy="12.4" r="4.2" fill="#c4c8cc"/><rect x="3" y="1.5" width="4" height="10.5" rx="2" fill="#5aa0e0"/><circle cx="5" cy="12.4" r="3.3" fill="#5aa0e0"/><rect x="3.8" y="2.2" width="2.4" height="10" rx="1.2" fill="#eef6fc"/><circle cx="5" cy="12.4" r="2.5" fill="#eef6fc"/><rect x="4.2" y="4.5" width="1.6" height="8" fill="#ff5a00"/><rect x="3.4" y="10.8" width="3.2" height="3" rx="0.8" fill="#ff4e00"/></svg>
<div class="t" style="left:58px;top:525px">Core 5 Distance to TjMAX</div>
<div class="v" style="left:228px;top:525px">17 °C</div>
<div class="v" style="left:308px;top:525px">17 °C</div>
<div class="v" style="left:388px;top:525px">64 °C</div>
<div class="bg" style="left:41px;top:542px;width:226px;background:#494949"></div>
<div class="bg" style="left:269px;top:542px;width:78px;background:#494949"></div>
<div class="bg" style="left:349px;top:542px;width:78px;background:#494949"></div>
<div class="bg" style="left:429px;top:542px;width:78px;background:#494949"></div>
<svg class="ic" style="left:28px;top:542px" width="10" height="17" viewBox="0 0 10 17"><rect x="2.1" y="0.6" width="5.8" height="11.5" rx="2.9" fill="#c4c8cc"/><circle cx="5" cy="12.4" r="4.2" fill="#c4c8cc"/><rect x="3" y="1.5" width="4" height="10.5" rx="2" fill="#5aa0e0"/><circle cx="5" cy="12.4" r="3.3" fill="#5aa0e0"/><rect x="3.8" y="2.2" width="2.4" height="10" rx="1.2" fill="#eef6fc"/><circle cx="5" cy="12.4" r="2.5" fill="#eef6fc"/><rect x="4.2" y="4.5" width="1.6" height="8" fill="#ff5a00"/><rect x="3.4" y="10.8" width="3.2" height="3" rx="0.8" fill="#ff4e00"/></svg>
<div class="t" style="left:42px;top:542px">CPU Package Temp</div>
<div class="v red" style="left:228px;top:542px">95 °C</div>
<div class="v" style="left:308px;top:542px">37 °C</div>
<div class="v red" style="left:388px;top:542px">99 °C</div>
<div class="bg" style="left:41px;top:559px;width:226px;background:#404040"></div>
<div class="bg" style="left:269px;top:559px;width:78px;background:#404040"></div>
<div class="bg" style="left:349px;top:559px;width:78px;background:#404040"></div>
<div class="bg" style="left:429px;top:559px;width:78px;background:#404040"></div>
<svg class="ic" style="left:28px;top:559px" width="10" height="17" viewBox="0 0 10 17"><rect x="2.1" y="0.6" width="5.8" height="11.5" rx="2.9" fill="#c4c8cc"/><circle cx="5" cy="12.4" r="4.2" fill="#c4c8cc"/><rect x="3" y="1.5" width="4" height="10.5" rx="2" fill="#5aa0e0"/><circle cx="5" cy="12.4" r="3.3" fill="#5aa0e0"/><rect x="3.8" y="2.2" width="2.4" height="10" rx="1.2" fill="#eef6fc"/><circle cx="5" cy="12.4" r="2.5" fill="#eef6fc"/><rect x="4.2" y="4.5" width="1.6" height="8" fill="#ff5a00"/><rect x="3.4" y="10.8" width="3.2" height="3" rx="0.8" fill="#ff4e00"/></svg>
<div class="t" style="left:42px;top:559px">Core Max</div>
<div class="v red" style="left:228px;top:559px">95 °C</div>
<div class="v" style="left:308px;top:559px">37 °C</div>
<div class="v red" style="left:388px;top:559px">97 °C</div>
<div class="bg" style="left:57px;top:576px;width:210px;background:#494949"></div>
<div class="bg" style="left:269px;top:576px;width:78px;background:#494949"></div>
<div class="bg" style="left:349px;top:576px;width:78px;background:#494949"></div>
<div class="bg" style="left:429px;top:576px;width:78px;background:#494949"></div>
<svg class="ic" style="left:25px;top:580px" width="12" height="9" viewBox="0 0 12 9"><path d="M1.2 1.9 L6 6.8 L10.8 1.9" fill="none" stroke="#9c9c9c" stroke-width="2.2"/></svg>
<svg class="ic" style="left:42.5px;top:577px" width="13" height="14" viewBox="0 0 13 14"><circle cx="6.5" cy="7.3" r="5.9" fill="#181818" opacity="0.9"/><circle cx="6.5" cy="6.8" r="5.7" fill="#b4b4b4"/><circle cx="6.5" cy="7.1" r="4.9" fill="url(#gclk)"/><path d="M1.9 5.4 A4.9 4.9 0 0 1 11.1 5.4" fill="none" stroke="#808080" stroke-width="1"/><path d="M6.5 7.2 L4.2 6.2" stroke="#8c6a4a" stroke-width="0.9"/><path d="M6.5 7.2 L9.8 7.4" stroke="#909090" stroke-width="0.7"/></svg>
<div class="t" style="left:58px;top:576px">Core Thermal Throttling</div>
<div class="v red" style="left:228px;top:576px">Yes</div>
<div class="v" style="left:308px;top:576px">No</div>
<div class="v red" style="left:388px;top:576px">Yes</div>
<div class="bg" style="left:57px;top:593px;width:210px;background:#404040"></div>
<div class="bg" style="left:269px;top:593px;width:78px;background:#404040"></div>
<div class="bg" style="left:349px;top:593px;width:78px;background:#404040"></div>
<div class="bg" style="left:429px;top:593px;width:78px;background:#404040"></div>
<svg class="ic" style="left:42.5px;top:594px" width="13" height="14" viewBox="0 0 13 14"><circle cx="6.5" cy="7.3" r="5.9" fill="#181818" opacity="0.9"/><circle cx="6.5" cy="6.8" r="5.7" fill="#b4b4b4"/><circle cx="6.5" cy="7.1" r="4.9" fill="url(#gclk)"/><path d="M1.9 5.4 A4.9 4.9 0 0 1 11.1 5.4" fill="none" stroke="#808080" stroke-width="1"/><path d="M6.5 7.2 L4.2 6.2" stroke="#8c6a4a" stroke-width="0.9"/><path d="M6.5 7.2 L9.8 7.4" stroke="#909090" stroke-width="0.7"/></svg>
<div class="t" style="left:58px;top:593px">Core 0 Thermal Throttling</div>
<div class="v" style="left:228px;top:593px">No</div>
<div class="v" style="left:308px;top:593px">No</div>
<div class="v red" style="left:388px;top:593px">Yes</div>
<div class="bg" style="left:57px;top:610px;width:210px;background:#494949"></div>
<div class="bg" style="left:269px;top:610px;width:78px;background:#494949"></div>
<div class="bg" style="left:349px;top:610px;width:78px;background:#494949"></div>
<div class="bg" style="left:429px;top:610px;width:78px;background:#494949"></div>
<svg class="ic" style="left:42.5px;top:611px" width="13" height="14" viewBox="0 0 13 14"><circle cx="6.5" cy="7.3" r="5.9" fill="#181818" opacity="0.9"/><circle cx="6.5" cy="6.8" r="5.7" fill="#b4b4b4"/><circle cx="6.5" cy="7.1" r="4.9" fill="url(#gclk)"/><path d="M1.9 5.4 A4.9 4.9 0 0 1 11.1 5.4" fill="none" stroke="#808080" stroke-width="1"/><path d="M6.5 7.2 L4.2 6.2" stroke="#8c6a4a" stroke-width="0.9"/><path d="M6.5 7.2 L9.8 7.4" stroke="#909090" stroke-width="0.7"/></svg>
<div class="t" style="left:58px;top:610px">Core 1 Thermal Throttling</div>
<div class="v" style="left:228px;top:610px">No</div>
<div class="v" style="left:308px;top:610px">No</div>
<div class="v red" style="left:388px;top:610px">Yes</div>
<div class="bg" style="left:57px;top:627px;width:210px;background:#404040"></div>
<div class="bg" style="left:269px;top:627px;width:78px;background:#404040"></div>
<div class="bg" style="left:349px;top:627px;width:78px;background:#404040"></div>
<div class="bg" style="left:429px;top:627px;width:78px;background:#404040"></div>
<svg class="ic" style="left:42.5px;top:628px" width="13" height="14" viewBox="0 0 13 14"><circle cx="6.5" cy="7.3" r="5.9" fill="#181818" opacity="0.9"/><circle cx="6.5" cy="6.8" r="5.7" fill="#b4b4b4"/><circle cx="6.5" cy="7.1" r="4.9" fill="url(#gclk)"/><path d="M1.9 5.4 A4.9 4.9 0 0 1 11.1 5.4" fill="none" stroke="#808080" stroke-width="1"/><path d="M6.5 7.2 L4.2 6.2" stroke="#8c6a4a" stroke-width="0.9"/><path d="M6.5 7.2 L9.8 7.4" stroke="#909090" stroke-width="0.7"/></svg>
<div class="t" style="left:58px;top:627px">Core 2 Thermal Throttling</div>
<div class="v red" style="left:228px;top:627px">Yes</div>
<div class="v" style="left:308px;top:627px">No</div>
<div class="v red" style="left:388px;top:627px">Yes</div>
<div class="bg" style="left:57px;top:644px;width:210px;background:#494949"></div>
<div class="bg" style="left:269px;top:644px;width:78px;background:#494949"></div>
<div class="bg" style="left:349px;top:644px;width:78px;background:#494949"></div>
<div class="bg" style="left:429px;top:644px;width:78px;background:#494949"></div>
<svg class="ic" style="left:42.5px;top:645px" width="13" height="14" viewBox="0 0 13 14"><circle cx="6.5" cy="7.3" r="5.9" fill="#181818" opacity="0.9"/><circle cx="6.5" cy="6.8" r="5.7" fill="#b4b4b4"/><circle cx="6.5" cy="7.1" r="4.9" fill="url(#gclk)"/><path d="M1.9 5.4 A4.9 4.9 0 0 1 11.1 5.4" fill="none" stroke="#808080" stroke-width="1"/><path d="M6.5 7.2 L4.2 6.2" stroke="#8c6a4a" stroke-width="0.9"/><path d="M6.5 7.2 L9.8 7.4" stroke="#909090" stroke-width="0.7"/></svg>
<div class="t" style="left:58px;top:644px">Core 3 Thermal Throttling</div>
<div class="v" style="left:228px;top:644px">No</div>
<div class="v" style="left:308px;top:644px">No</div>
<div class="bg" style="left:57px;top:661px;width:210px;background:#404040"></div>
<div class="bg" style="left:269px;top:661px;width:78px;background:#404040"></div>
<div class="bg" style="left:349px;top:661px;width:78px;background:#404040"></div>
<div class="bg" style="left:429px;top:661px;width:78px;background:#404040"></div>
<svg class="ic" style="left:42.5px;top:662px" width="13" height="14" viewBox="0 0 13 14"><circle cx="6.5" cy="7.3" r="5.9" fill="#181818" opacity="0.9"/><circle cx="6.5" cy="6.8" r="5.7" fill="#b4b4b4"/><circle cx="6.5" cy="7.1" r="4.9" fill="url(#gclk)"/><path d="M1.9 5.4 A4.9 4.9 0 0 1 11.1 5.4" fill="none" stroke="#808080" stroke-width="1"/><path d="M6.5 7.2 L4.2 6.2" stroke="#8c6a4a" stroke-width="0.9"/><path d="M6.5 7.2 L9.8 7.4" stroke="#909090" stroke-width="0.7"/></svg>
<div class="t" style="left:58px;top:661px">Core 4 Thermal Throttling</div>
<div class="v" style="left:228px;top:661px">No</div>
<div class="v" style="left:308px;top:661px">No</div>
<div class="v red" style="left:388px;top:661px">Yes</div>
<div class="bg" style="left:57px;top:678px;width:210px;background:#494949"></div>
<div class="bg" style="left:269px;top:678px;width:78px;background:#494949"></div>
<div class="bg" style="left:349px;top:678px;width:78px;background:#494949"></div>
<div class="bg" style="left:429px;top:678px;width:78px;background:#494949"></div>
<svg class="ic" style="left:42.5px;top:679px" width="13" height="14" viewBox="0 0 13 14"><circle cx="6.5" cy="7.3" r="5.9" fill="#181818" opacity="0.9"/><circle cx="6.5" cy="6.8" r="5.7" fill="#b4b4b4"/><circle cx="6.5" cy="7.1" r="4.9" fill="url(#gclk)"/><path d="M1.9 5.4 A4.9 4.9 0 0 1 11.1 5.4" fill="none" stroke="#808080" stroke-width="1"/><path d="M6.5 7.2 L4.2 6.2" stroke="#8c6a4a" stroke-width="0.9"/><path d="M6.5 7.2 L9.8 7.4" stroke="#909090" stroke-width="0.7"/></svg>
<div class="t" style="left:58px;top:678px">Core 5 Thermal Throttling</div>
<div class="v" style="left:228px;top:678px">No</div>
<div class="v" style="left:308px;top:678px">No</div>
<div class="bg" style="left:57px;top:695px;width:210px;background:#404040"></div>
<div class="bg" style="left:269px;top:695px;width:78px;background:#404040"></div>
<div class="bg" style="left:349px;top:695px;width:78px;background:#404040"></div>
<div class="bg" style="left:429px;top:695px;width:78px;background:#404040"></div>
<svg class="ic" style="left:25px;top:699px" width="12" height="9" viewBox="0 0 12 9"><path d="M1.2 1.9 L6 6.8 L10.8 1.9" fill="none" stroke="#9c9c9c" stroke-width="2.2"/></svg>
<svg class="ic" style="left:42.5px;top:696px" width="13" height="14" viewBox="0 0 13 14"><circle cx="6.5" cy="7.3" r="5.9" fill="#181818" opacity="0.9"/><circle cx="6.5" cy="6.8" r="5.7" fill="#b4b4b4"/><circle cx="6.5" cy="7.1" r="4.9" fill="url(#gclk)"/><path d="M1.9 5.4 A4.9 4.9 0 0 1 11.1 5.4" fill="none" stroke="#808080" stroke-width="1"/><path d="M6.5 7.2 L4.2 6.2" stroke="#8c6a4a" stroke-width="0.9"/><path d="M6.5 7.2 L9.8 7.4" stroke="#909090" stroke-width="0.7"/></svg>
<div class="t" style="left:58px;top:695px">Core Critical Temperature</div>
<div class="v" style="left:228px;top:695px">No</div>
<div class="v" style="left:308px;top:695px">No</div>
<div class="bg" style="left:57px;top:712px;width:210px;background:#494949"></div>
<div class="bg" style="left:269px;top:712px;width:78px;background:#494949"></div>
<div class="bg" style="left:349px;top:712px;width:78px;background:#494949"></div>
<div class="bg" style="left:429px;top:712px;width:78px;background:#494949"></div>
<svg class="ic" style="left:42.5px;top:713px" width="13" height="14" viewBox="0 0 13 14"><circle cx="6.5" cy="7.3" r="5.9" fill="#181818" opacity="0.9"/><circle cx="6.5" cy="6.8" r="5.7" fill="#b4b4b4"/><circle cx="6.5" cy="7.1" r="4.9" fill="url(#gclk)"/><path d="M1.9 5.4 A4.9 4.9 0 0 1 11.1 5.4" fill="none" stroke="#808080" stroke-width="1"/><path d="M6.5 7.2 L4.2 6.2" stroke="#8c6a4a" stroke-width="0.9"/><path d="M6.5 7.2 L9.8 7.4" stroke="#909090" stroke-width="0.7"/></svg>
<div class="t" style="left:58px;top:712px">Core 0 Critical Temperature</div>
<div class="v" style="left:228px;top:712px">No</div>
<div class="v" style="left:308px;top:712px">No</div>
<div class="bg" style="left:57px;top:729px;width:210px;background:#404040"></div>
<div class="bg" style="left:269px;top:729px;width:78px;background:#404040"></div>
<div class="bg" style="left:349px;top:729px;width:78px;background:#404040"></div>
<div class="bg" style="left:429px;top:729px;width:78px;background:#404040"></div>
<svg class="ic" style="left:42.5px;top:730px" width="13" height="14" viewBox="0 0 13 14"><circle cx="6.5" cy="7.3" r="5.9" fill="#181818" opacity="0.9"/><circle cx="6.5" cy="6.8" r="5.7" fill="#b4b4b4"/><circle cx="6.5" cy="7.1" r="4.9" fill="url(#gclk)"/><path d="M1.9 5.4 A4.9 4.9 0 0 1 11.1 5.4" fill="none" stroke="#808080" stroke-width="1"/><path d="M6.5 7.2 L4.2 6.2" stroke="#8c6a4a" stroke-width="0.9"/><path d="M6.5 7.2 L9.8 7.4" stroke="#909090" stroke-width="0.7"/></svg>
<div class="t" style="left:58px;top:729px">Core 1 Critical Temperature</div>
<div class="v" style="left:228px;top:729px">No</div>
<div class="v" style="left:308px;top:729px">No</div>
<div class="bg" style="left:57px;top:746px;width:210px;background:#494949"></div>
<div class="bg" style="left:269px;top:746px;width:78px;background:#494949"></div>
<div class="bg" style="left:349px;top:746px;width:78px;background:#494949"></div>
<div class="bg" style="left:429px;top:746px;width:78px;background:#494949"></div>
<svg class="ic" style="left:42.5px;top:747px" width="13" height="14" viewBox="0 0 13 14"><circle cx="6.5" cy="7.3" r="5.9" fill="#181818" opacity="0.9"/><circle cx="6.5" cy="6.8" r="5.7" fill="#b4b4b4"/><circle cx="6.5" cy="7.1" r="4.9" fill="url(#gclk)"/><path d="M1.9 5.4 A4.9 4.9 0 0 1 11.1 5.4" fill="none" stroke="#808080" stroke-width="1"/><path d="M6.5 7.2 L4.2 6.2" stroke="#8c6a4a" stroke-width="0.9"/><path d="M6.5 7.2 L9.8 7.4" stroke="#909090" stroke-width="0.7"/></svg>
<div class="t" style="left:58px;top:746px">Core 2 Critical Temperature</div>
<div class="v" style="left:228px;top:746px">No</div>
<div class="v" style="left:308px;top:746px">No</div>
<div class="bg" style="left:57px;top:763px;width:210px;background:#404040"></div>
<div class="bg" style="left:269px;top:763px;width:78px;background:#404040"></div>
<div class="bg" style="left:349px;top:763px;width:78px;background:#404040"></div>
<div class="bg" style="left:429px;top:763px;width:78px;background:#404040"></div>
<svg class="ic" style="left:42.5px;top:764px" width="13" height="14" viewBox="0 0 13 14"><circle cx="6.5" cy="7.3" r="5.9" fill="#181818" opacity="0.9"/><circle cx="6.5" cy="6.8" r="5.7" fill="#b4b4b4"/><circle cx="6.5" cy="7.1" r="4.9" fill="url(#gclk)"/><path d="M1.9 5.4 A4.9 4.9 0 0 1 11.1 5.4" fill="none" stroke="#808080" stroke-width="1"/><path d="M6.5 7.2 L4.2 6.2" stroke="#8c6a4a" stroke-width="0.9"/><path d="M6.5 7.2 L9.8 7.4" stroke="#909090" stroke-width="0.7"/></svg>
<div class="t" style="left:58px;top:763px">Core 3 Critical Temperature</div>
<div class="v" style="left:228px;top:763px">No</div>
<div class="v" style="left:308px;top:763px">No</div>
<div class="bg" style="left:57px;top:780px;width:210px;background:#494949"></div>
<div class="bg" style="left:269px;top:780px;width:78px;background:#494949"></div>
<div class="bg" style="left:349px;top:780px;width:78px;background:#494949"></div>
<div class="bg" style="left:429px;top:780px;width:78px;background:#494949"></div>
<svg class="ic" style="left:42.5px;top:781px" width="13" height="14" viewBox="0 0 13 14"><circle cx="6.5" cy="7.3" r="5.9" fill="#181818" opacity="0.9"/><circle cx="6.5" cy="6.8" r="5.7" fill="#b4b4b4"/><circle cx="6.5" cy="7.1" r="4.9" fill="url(#gclk)"/><path d="M1.9 5.4 A4.9 4.9 0 0 1 11.1 5.4" fill="none" stroke="#808080" stroke-width="1"/><path d="M6.5 7.2 L4.2 6.2" stroke="#8c6a4a" stroke-width="0.9"/><path d="M6.5 7.2 L9.8 7.4" stroke="#909090" stroke-width="0.7"/></svg>
<div class="t" style="left:58px;top:780px">Core 4 Critical Temperature</div>
<div class="v" style="left:228px;top:780px">No</div>
<div class="v" style="left:308px;top:780px">No</div>
<div class="bg" style="left:57px;top:797px;width:210px;background:#404040"></div>
<div class="bg" style="left:269px;top:797px;width:78px;background:#404040"></div>
<div class="bg" style="left:349px;top:797px;width:78px;background:#404040"></div>
<div class="bg" style="left:429px;top:797px;width:78px;background:#404040"></div>
<svg class="ic" style="left:42.5px;top:798px" width="13" height="14" viewBox="0 0 13 14"><circle cx="6.5" cy="7.3" r="5.9" fill="#181818" opacity="0.9"/><circle cx="6.5" cy="6.8" r="5.7" fill="#b4b4b4"/><circle cx="6.5" cy="7.1" r="4.9" fill="url(#gclk)"/><path d="M1.9 5.4 A4.9 4.9 0 0 1 11.1 5.4" fill="none" stroke="#808080" stroke-width="1"/><path d="M6.5 7.2 L4.2 6.2" stroke="#8c6a4a" stroke-width="0.9"/><path d="M6.5 7.2 L9.8 7.4" stroke="#909090" stroke-width="0.7"/></svg>
<div class="t" style="left:58px;top:797px">Core 5 Critical Temperature</div>
<div class="v" style="left:228px;top:797px">No</div>
<div class="v" style="left:308px;top:797px">No</div>
<div class="bg" style="left:57px;top:814px;width:210px;background:#494949"></div>
<div class="bg" style="left:269px;top:814px;width:78px;background:#494949"></div>
<div class="bg" style="left:349px;top:814px;width:78px;background:#494949"></div>
<div class="bg" style="left:429px;top:814px;width:78px;background:#494949"></div>
<svg class="ic" style="left:25px;top:818px" width="12" height="9" viewBox="0 0 12 9"><path d="M1.2 1.9 L6 6.8 L10.8 1.9" fill="none" stroke="#9c9c9c" stroke-width="2.2"/></svg>
<svg class="ic" style="left:42.5px;top:815px" width="13" height="14" viewBox="0 0 13 14"><circle cx="6.5" cy="7.3" r="5.9" fill="#181818" opacity="0.9"/><circle cx="6.5" cy="6.8" r="5.7" fill="#b4b4b4"/><circle cx="6.5" cy="7.1" r="4.9" fill="url(#gclk)"/><path d="M1.9 5.4 A4.9 4.9 0 0 1 11.1 5.4" fill="none" stroke="#808080" stroke-width="1"/><path d="M6.5 7.2 L4.2 6.2" stroke="#8c6a4a" stroke-width="0.9"/><path d="M6.5 7.2 L9.8 7.4" stroke="#909090" stroke-width="0.7"/></svg>
<div class="t" style="left:58px;top:814px">Core Power Limit Exceeded</div>
<div class="v" style="left:228px;top:814px">No</div>
<div class="v" style="left:308px;top:814px">No</div>
<div class="v gry" style="left:388px;top:814px">Yes</div>
<div class="bg" style="left:57px;top:831px;width:210px;background:#404040"></div>
<div class="bg" style="left:269px;top:831px;width:78px;background:#404040"></div>
<div class="bg" style="left:349px;top:831px;width:78px;background:#404040"></div>
<div class="bg" style="left:429px;top:831px;width:78px;background:#404040"></div>
<svg class="ic" style="left:42.5px;top:832px" width="13" height="14" viewBox="0 0 13 14"><circle cx="6.5" cy="7.3" r="5.9" fill="#181818" opacity="0.9"/><circle cx="6.5" cy="6.8" r="5.7" fill="#b4b4b4"/><circle cx="6.5" cy="7.1" r="4.9" fill="url(#gclk)"/><path d="M1.9 5.4 A4.9 4.9 0 0 1 11.1 5.4" fill="none" stroke="#808080" stroke-width="1"/><path d="M6.5 7.2 L4.2 6.2" stroke="#8c6a4a" stroke-width="0.9"/><path d="M6.5 7.2 L9.8 7.4" stroke="#909090" stroke-width="0.7"/></svg>
<div class="t" style="left:58px;top:831px">Core 0 Power Limit Exceeded</div>
<div class="v" style="left:228px;top:831px">No</div>
<div class="v" style="left:308px;top:831px">No</div>
<div class="v gry" style="left:388px;top:831px">Yes</div>
<div class="bg" style="left:57px;top:848px;width:210px;background:#494949"></div>
<div class="bg" style="left:269px;top:848px;width:78px;background:#494949"></div>
<div class="bg" style="left:349px;top:848px;width:78px;background:#494949"></div>
<div class="bg" style="left:429px;top:848px;width:78px;background:#494949"></div>
<svg class="ic" style="left:42.5px;top:849px" width="13" height="14" viewBox="0 0 13 14"><circle cx="6.5" cy="7.3" r="5.9" fill="#181818" opacity="0.9"/><circle cx="6.5" cy="6.8" r="5.7" fill="#b4b4b4"/><circle cx="6.5" cy="7.1" r="4.9" fill="url(#gclk)"/><path d="M1.9 5.4 A4.9 4.9 0 0 1 11.1 5.4" fill="none" stroke="#808080" stroke-width="1"/><path d="M6.5 7.2 L4.2 6.2" stroke="#8c6a4a" stroke-width="0.9"/><path d="M6.5 7.2 L9.8 7.4" stroke="#909090" stroke-width="0.7"/></svg>
<div class="t" style="left:58px;top:848px">Core 1 Power Limit Exceeded</div>
<div class="v" style="left:228px;top:848px">No</div>
<div class="v" style="left:308px;top:848px">No</div>
<div class="v gry" style="left:388px;top:848px">Yes</div>
<div class="bg" style="left:57px;top:865px;width:210px;background:#404040"></div>
<div class="bg" style="left:269px;top:865px;width:78px;background:#404040"></div>
<div class="bg" style="left:349px;top:865px;width:78px;background:#404040"></div>
<div class="bg" style="left:429px;top:865px;width:78px;background:#404040"></div>
<svg class="ic" style="left:42.5px;top:866px" width="13" height="14" viewBox="0 0 13 14"><circle cx="6.5" cy="7.3" r="5.9" fill="#181818" opacity="0.9"/><circle cx="6.5" cy="6.8" r="5.7" fill="#b4b4b4"/><circle cx="6.5" cy="7.1" r="4.9" fill="url(#gclk)"/><path d="M1.9 5.4 A4.9 4.9 0 0 1 11.1 5.4" fill="none" stroke="#808080" stroke-width="1"/><path d="M6.5 7.2 L4.2 6.2" stroke="#8c6a4a" stroke-width="0.9"/><path d="M6.5 7.2 L9.8 7.4" stroke="#909090" stroke-width="0.7"/></svg>
<div class="t" style="left:58px;top:865px">Core 2 Power Limit Exceeded</div>
<div class="v" style="left:228px;top:865px">No</div>
<div class="v" style="left:308px;top:865px">No</div>
<div class="v gry" style="left:388px;top:865px">Yes</div>
<div class="bg" style="left:57px;top:882px;width:210px;background:#494949"></div>
<div class="bg" style="left:269px;top:882px;width:78px;background:#494949"></div>
<div class="bg" style="left:349px;top:882px;width:78px;background:#494949"></div>
<div class="bg" style="left:429px;top:882px;width:78px;background:#494949"></div>
<svg class="ic" style="left:42.5px;top:883px" width="13" height="14" viewBox="0 0 13 14"><circle cx="6.5" cy="7.3" r="5.9" fill="#181818" opacity="0.9"/><circle cx="6.5" cy="6.8" r="5.7" fill="#b4b4b4"/><circle cx="6.5" cy="7.1" r="4.9" fill="url(#gclk)"/><path d="M1.9 5.4 A4.9 4.9 0 0 1 11.1 5.4" fill="none" stroke="#808080" stroke-width="1"/><path d="M6.5 7.2 L4.2 6.2" stroke="#8c6a4a" stroke-width="0.9"/><path d="M6.5 7.2 L9.8 7.4" stroke="#909090" stroke-width="0.7"/></svg>
<div class="t" style="left:58px;top:882px">Core 3 Power Limit Exceeded</div>
<div class="v" style="left:228px;top:882px">No</div>
<div class="v" style="left:308px;top:882px">No</div>
<div class="v gry" style="left:388px;top:882px">Yes</div>
<div class="bg" style="left:57px;top:899px;width:210px;background:#404040"></div>
<div class="bg" style="left:269px;top:899px;width:78px;background:#404040"></div>
<div class="bg" style="left:349px;top:899px;width:78px;background:#404040"></div>
<div class="bg" style="left:429px;top:899px;width:78px;background:#404040"></div>
<svg class="ic" style="left:42.5px;top:900px" width="13" height="14" viewBox="0 0 13 14"><circle cx="6.5" cy="7.3" r="5.9" fill="#181818" opacity="0.9"/><circle cx="6.5" cy="6.8" r="5.7" fill="#b4b4b4"/><circle cx="6.5" cy="7.1" r="4.9" fill="url(#gclk)"/><path d="M1.9 5.4 A4.9 4.9 0 0 1 11.1 5.4" fill="none" stroke="#808080" stroke-width="1"/><path d="M6.5 7.2 L4.2 6.2" stroke="#8c6a4a" stroke-width="0.9"/><path d="M6.5 7.2 L9.8 7.4" stroke="#909090" stroke-width="0.7"/></svg>
<div class="t" style="left:58px;top:899px">Core 4 Power Limit Exceeded</div>
<div class="v" style="left:228px;top:899px">No</div>
<div class="v" style="left:308px;top:899px">No</div>
<div class="v gry" style="left:388px;top:899px">Yes</div>
<div class="bg" style="left:57px;top:916px;width:210px;background:#494949"></div>
<div class="bg" style="left:269px;top:916px;width:78px;background:#494949"></div>
<div class="bg" style="left:349px;top:916px;width:78px;background:#494949"></div>
<div class="bg" style="left:429px;top:916px;width:78px;background:#494949"></div>
<svg class="ic" style="left:42.5px;top:917px" width="13" height="14" viewBox="0 0 13 14"><circle cx="6.5" cy="7.3" r="5.9" fill="#181818" opacity="0.9"/><circle cx="6.5" cy="6.8" r="5.7" fill="#b4b4b4"/><circle cx="6.5" cy="7.1" r="4.9" fill="url(#gclk)"/><path d="M1.9 5.4 A4.9 4.9 0 0 1 11.1 5.4" fill="none" stroke="#808080" stroke-width="1"/><path d="M6.5 7.2 L4.2 6.2" stroke="#8c6a4a" stroke-width="0.9"/><path d="M6.5 7.2 L9.8 7.4" stroke="#909090" stroke-width="0.7"/></svg>
<div class="t" style="left:58px;top:916px">Core 5 Power Limit Exceeded</div>
<div class="v" style="left:228px;top:916px">No</div>
<div class="v" style="left:308px;top:916px">No</div>
<div class="v gry" style="left:388px;top:916px">Yes</div>
<div class="bg" style="left:41px;top:933px;width:226px;background:#404040"></div>
<div class="bg" style="left:269px;top:933px;width:78px;background:#404040"></div>
<div class="bg" style="left:349px;top:933px;width:78px;background:#404040"></div>
<div class="bg" style="left:429px;top:933px;width:78px;background:#404040"></div>
<svg class="ic" style="left:26.5px;top:934px" width="13" height="14" viewBox="0 0 13 14"><circle cx="6.5" cy="7.3" r="5.9" fill="#181818" opacity="0.9"/><circle cx="6.5" cy="6.8" r="5.7" fill="#b4b4b4"/><circle cx="6.5" cy="7.1" r="4.9" fill="url(#gclk)"/><path d="M1.9 5.4 A4.9 4.9 0 0 1 11.1 5.4" fill="none" stroke="#808080" stroke-width="1"/><path d="M6.5 7.2 L4.2 6.2" stroke="#8c6a4a" stroke-width="0.9"/><path d="M6.5 7.2 L9.8 7.4" stroke="#909090" stroke-width="0.7"/></svg>
<div class="t" style="left:42px;top:933px">Package/Ring Thermal Throttling</div>
<div class="v red" style="left:228px;top:933px">Yes</div>
<div class="v" style="left:308px;top:933px">No</div>
<div class="v red" style="left:388px;top:933px">Yes</div>
<div class="bg" style="left:41px;top:950px;width:226px;background:#494949"></div>
<div class="bg" style="left:269px;top:950px;width:78px;background:#494949"></div>
<div class="bg" style="left:349px;top:950px;width:78px;background:#494949"></div>
<div class="bg" style="left:429px;top:950px;width:78px;background:#494949"></div>
<svg class="ic" style="left:26.5px;top:951px" width="13" height="14" viewBox="0 0 13 14"><circle cx="6.5" cy="7.3" r="5.9" fill="#181818" opacity="0.9"/><circle cx="6.5" cy="6.8" r="5.7" fill="#b4b4b4"/><circle cx="6.5" cy="7.1" r="4.9" fill="url(#gclk)"/><path d="M1.9 5.4 A4.9 4.9 0 0 1 11.1 5.4" fill="none" stroke="#808080" stroke-width="1"/><path d="M6.5 7.2 L4.2 6.2" stroke="#8c6a4a" stroke-width="0.9"/><path d="M6.5 7.2 L9.8 7.4" stroke="#909090" stroke-width="0.7"/></svg>
<div class="t" style="left:42px;top:950px">Package/Ring Critical Temperature</div>
<div class="v" style="left:228px;top:950px">No</div>
<div class="v" style="left:308px;top:950px">No</div>
<div class="bg" style="left:41px;top:967px;width:226px;background:#404040"></div>
<div class="bg" style="left:269px;top:967px;width:78px;background:#404040"></div>
<div class="bg" style="left:349px;top:967px;width:78px;background:#404040"></div>
<div class="bg" style="left:429px;top:967px;width:78px;background:#404040"></div>
<svg class="ic" style="left:26.5px;top:968px" width="13" height="14" viewBox="0 0 13 14"><circle cx="6.5" cy="7.3" r="5.9" fill="#181818" opacity="0.9"/><circle cx="6.5" cy="6.8" r="5.7" fill="#b4b4b4"/><circle cx="6.5" cy="7.1" r="4.9" fill="url(#gclk)"/><path d="M1.9 5.4 A4.9 4.9 0 0 1 11.1 5.4" fill="none" stroke="#808080" stroke-width="1"/><path d="M6.5 7.2 L4.2 6.2" stroke="#8c6a4a" stroke-width="0.9"/><path d="M6.5 7.2 L9.8 7.4" stroke="#909090" stroke-width="0.7"/></svg>
<div class="t" style="left:42px;top:967px">Package/Ring Power Limit Exceeded</div>
<div class="v" style="left:228px;top:967px">No</div>
<div class="v" style="left:308px;top:967px">No</div>
<div class="v gry" style="left:388px;top:967px">Yes</div>
<div class="bg" style="left:513px;top:48px;width:504px;background:#363636"></div>
<svg class="ic" style="left:521px;top:52px" width="12" height="9" viewBox="0 0 12 9"><path d="M1.2 1.9 L6 6.8 L10.8 1.9" fill="none" stroke="#9c9c9c" stroke-width="2.2"/></svg>
<svg class="ic" style="left:539px;top:49px" width="12" height="15" viewBox="0 0 12 15"><rect x="2.3" y="0.6" width="7.4" height="12.8" fill="url(#gchip)"/><rect x="0.8" y="2.50" width="1.3" height="1.3" fill="#d0d0d0"/><rect x="9.9" y="2.50" width="1.3" height="1.3" fill="#d0d0d0"/><rect x="0.8" y="5.45" width="1.3" height="1.3" fill="#d0d0d0"/><rect x="9.9" y="5.45" width="1.3" height="1.3" fill="#d0d0d0"/><rect x="0.8" y="8.40" width="1.3" height="1.3" fill="#d0d0d0"/><rect x="9.9" y="8.40" width="1.3" height="1.3" fill="#d0d0d0"/><rect x="0.8" y="11.35" width="1.3" height="1.3" fill="#d0d0d0"/><rect x="9.9" y="11.35" width="1.3" height="1.3" fill="#d0d0d0"/></svg>
<div class="t gi" style="left:556px;top:48px;letter-spacing:0px">CPU [#0]: Intel Core i7-10750H: Enhanced</div>
<div class="bg" style="left:553px;top:65px;width:224px;background:#494949"></div>
<div class="bg" style="left:779px;top:65px;width:78px;background:#494949"></div>
<div class="bg" style="left:859px;top:65px;width:78px;background:#494949"></div>
<div class="bg" style="left:939px;top:65px;width:78px;background:#494949"></div>
<svg class="ic" style="left:540px;top:65px" width="10" height="17" viewBox="0 0 10 17"><rect x="2.1" y="0.6" width="5.8" height="11.5" rx="2.9" fill="#c4c8cc"/><circle cx="5" cy="12.4" r="4.2" fill="#c4c8cc"/><rect x="3" y="1.5" width="4" height="10.5" rx="2" fill="#5aa0e0"/><circle cx="5" cy="12.4" r="3.3" fill="#5aa0e0"/><rect x="3.8" y="2.2" width="2.4" height="10" rx="1.2" fill="#eef6fc"/><circle cx="5" cy="12.4" r="2.5" fill="#eef6fc"/><rect x="4.2" y="4.5" width="1.6" height="8" fill="#ff5a00"/><rect x="3.4" y="10.8" width="3.2" height="3" rx="0.8" fill="#ff4e00"/></svg>
<div class="t" style="left:554px;top:65px">CPU Package</div>
<div class="v red" style="left:738px;top:65px">95 °C</div>
<div class="v" style="left:818px;top:65px">38 °C</div>
<div class="v red" style="left:898px;top:65px">97 °C</div>
<div class="bg" style="left:553px;top:82px;width:224px;background:#404040"></div>
<div class="bg" style="left:779px;top:82px;width:78px;background:#404040"></div>
<div class="bg" style="left:859px;top:82px;width:78px;background:#404040"></div>
<div class="bg" style="left:939px;top:82px;width:78px;background:#404040"></div>
<svg class="ic" style="left:540px;top:82px" width="10" height="17" viewBox="0 0 10 17"><rect x="2.1" y="0.6" width="5.8" height="11.5" rx="2.9" fill="#c4c8cc"/><circle cx="5" cy="12.4" r="4.2" fill="#c4c8cc"/><rect x="3" y="1.5" width="4" height="10.5" rx="2" fill="#5aa0e0"/><circle cx="5" cy="12.4" r="3.3" fill="#5aa0e0"/><rect x="3.8" y="2.2" width="2.4" height="10" rx="1.2" fill="#eef6fc"/><circle cx="5" cy="12.4" r="2.5" fill="#eef6fc"/><rect x="4.2" y="4.5" width="1.6" height="8" fill="#ff5a00"/><rect x="3.4" y="10.8" width="3.2" height="3" rx="0.8" fill="#ff4e00"/></svg>
<div class="t" style="left:554px;top:82px">CPU IA Cores</div>
<div class="v red" style="left:738px;top:82px">95 °C</div>
<div class="v" style="left:818px;top:82px">38 °C</div>
<div class="v red" style="left:898px;top:82px">97 °C</div>
<div class="bg" style="left:553px;top:99px;width:224px;background:#494949"></div>
<div class="bg" style="left:779px;top:99px;width:78px;background:#494949"></div>
<div class="bg" style="left:859px;top:99px;width:78px;background:#494949"></div>
<div class="bg" style="left:939px;top:99px;width:78px;background:#494949"></div>
<svg class="ic" style="left:540px;top:99px" width="10" height="17" viewBox="0 0 10 17"><rect x="2.1" y="0.6" width="5.8" height="11.5" rx="2.9" fill="#c4c8cc"/><circle cx="5" cy="12.4" r="4.2" fill="#c4c8cc"/><rect x="3" y="1.5" width="4" height="10.5" rx="2" fill="#5aa0e0"/><circle cx="5" cy="12.4" r="3.3" fill="#5aa0e0"/><rect x="3.8" y="2.2" width="2.4" height="10" rx="1.2" fill="#eef6fc"/><circle cx="5" cy="12.4" r="2.5" fill="#eef6fc"/><rect x="4.2" y="4.5" width="1.6" height="8" fill="#ff5a00"/><rect x="3.4" y="10.8" width="3.2" height="3" rx="0.8" fill="#ff4e00"/></svg>
<div class="t" style="left:554px;top:99px">CPU GT Cores (Graphics)</div>
<div class="v" style="left:738px;top:99px">71 °C</div>
<div class="v" style="left:818px;top:99px">37 °C</div>
<div class="v" style="left:898px;top:99px">71 °C</div>
<div class="bg" style="left:553px;top:116px;width:224px;background:#404040"></div>
<div class="bg" style="left:779px;top:116px;width:78px;background:#404040"></div>
<div class="bg" style="left:859px;top:116px;width:78px;background:#404040"></div>
<div class="bg" style="left:939px;top:116px;width:78px;background:#404040"></div>
<svg class="ic" style="left:540px;top:116px" width="10" height="16" viewBox="0 0 10 16"><path d="M2.2 0.6 L8.6 0.6 L7.2 4.2 L8.8 4.2 L7.4 8.2 L8.6 8.2 L1.4 15.4 L3.6 9.4 L1.8 9.4 L3.0 5.8 L1.0 5.8 Z" fill="url(#gbolt)" stroke="#e86a10" stroke-width="0.7" stroke-linejoin="round"/></svg>
<div class="t" style="left:554px;top:116px">CPU Package Power</div>
<div class="v" style="left:738px;top:116px">56.119 W</div>
<div class="v" style="left:818px;top:116px">5.603 W</div>
<div class="v" style="left:898px;top:116px">85.792 W</div>
<div class="bg" style="left:553px;top:133px;width:224px;background:#494949"></div>
<div class="bg" style="left:779px;top:133px;width:78px;background:#494949"></div>
<div class="bg" style="left:859px;top:133px;width:78px;background:#494949"></div>
<div class="bg" style="left:939px;top:133px;width:78px;background:#494949"></div>
<svg class="ic" style="left:540px;top:133px" width="10" height="16" viewBox="0 0 10 16"><path d="M2.2 0.6 L8.6 0.6 L7.2 4.2 L8.8 4.2 L7.4 8.2 L8.6 8.2 L1.4 15.4 L3.6 9.4 L1.8 9.4 L3.0 5.8 L1.0 5.8 Z" fill="url(#gbolt)" stroke="#e86a10" stroke-width="0.7" stroke-linejoin="round"/></svg>
<div class="t" style="left:554px;top:133px">IA Cores Power</div>
<div class="v" style="left:738px;top:133px">52.468 W</div>
<div class="v" style="left:818px;top:133px">4.730 W</div>
<div class="v" style="left:898px;top:133px">82.951 W</div>
<div class="bg" style="left:553px;top:150px;width:224px;background:#404040"></div>
<div class="bg" style="left:779px;top:150px;width:78px;background:#404040"></div>
<div class="bg" style="left:859px;top:150px;width:78px;background:#404040"></div>
<div class="bg" style="left:939px;top:150px;width:78px;background:#404040"></div>
<svg class="ic" style="left:540px;top:150px" width="10" height="16" viewBox="0 0 10 16"><path d="M2.2 0.6 L8.6 0.6 L7.2 4.2 L8.8 4.2 L7.4 8.2 L8.6 8.2 L1.4 15.4 L3.6 9.4 L1.8 9.4 L3.0 5.8 L1.0 5.8 Z" fill="url(#gbolt)" stroke="#e86a10" stroke-width="0.7" stroke-linejoin="round"/></svg>
<div class="t" style="left:554px;top:150px">GT Cores Power</div>
<div class="v" style="left:738px;top:150px">0.158 W</div>
<div class="v" style="left:818px;top:150px">0.015 W</div>
<div class="v" style="left:898px;top:150px">0.315 W</div>
<div class="bg" style="left:553px;top:167px;width:224px;background:#494949"></div>
<div class="bg" style="left:779px;top:167px;width:78px;background:#494949"></div>
<div class="bg" style="left:859px;top:167px;width:78px;background:#494949"></div>
<div class="bg" style="left:939px;top:167px;width:78px;background:#494949"></div>
<svg class="ic" style="left:540px;top:167px" width="10" height="16" viewBox="0 0 10 16"><path d="M2.2 0.6 L8.6 0.6 L7.2 4.2 L8.8 4.2 L7.4 8.2 L8.6 8.2 L1.4 15.4 L3.6 9.4 L1.8 9.4 L3.0 5.8 L1.0 5.8 Z" fill="url(#gbolt)" stroke="#e86a10" stroke-width="0.7" stroke-linejoin="round"/></svg>
<div class="t" style="left:554px;top:167px">Total DRAM Power</div>
<div class="v" style="left:738px;top:167px">1.073 W</div>
<div class="v" style="left:818px;top:167px">0.659 W</div>
<div class="v" style="left:898px;top:167px">1.388 W</div>
<div class="bg" style="left:553px;top:184px;width:224px;background:#404040"></div>
<div class="bg" style="left:779px;top:184px;width:78px;background:#404040"></div>
<div class="bg" style="left:859px;top:184px;width:78px;background:#404040"></div>
<div class="bg" style="left:939px;top:184px;width:78px;background:#404040"></div>
<svg class="ic" style="left:540px;top:184px" width="10" height="16" viewBox="0 0 10 16"><path d="M2.2 0.6 L8.6 0.6 L7.2 4.2 L8.8 4.2 L7.4 8.2 L8.6 8.2 L1.4 15.4 L3.6 9.4 L1.8 9.4 L3.0 5.8 L1.0 5.8 Z" fill="url(#gbolt)" stroke="#e86a10" stroke-width="0.7" stroke-linejoin="round"/></svg>
<div class="t" style="left:554px;top:184px">System Agent Power</div>
<div class="v" style="left:738px;top:184px">1.631 W</div>
<div class="v" style="left:818px;top:184px">0.429 W</div>
<div class="v" style="left:898px;top:184px">1.680 W</div>
<div class="bg" style="left:553px;top:201px;width:224px;background:#494949"></div>
<div class="bg" style="left:779px;top:201px;width:78px;background:#494949"></div>
<div class="bg" style="left:859px;top:201px;width:78px;background:#494949"></div>
<div class="bg" style="left:939px;top:201px;width:78px;background:#494949"></div>
<svg class="ic" style="left:540px;top:201px" width="10" height="16" viewBox="0 0 10 16"><path d="M2.2 0.6 L8.6 0.6 L7.2 4.2 L8.8 4.2 L7.4 8.2 L8.6 8.2 L1.4 15.4 L3.6 9.4 L1.8 9.4 L3.0 5.8 L1.0 5.8 Z" fill="url(#gbolt)" stroke="#e86a10" stroke-width="0.7" stroke-linejoin="round"/></svg>
<div class="t" style="left:554px;top:201px">Rest-of-Chip Power</div>
<div class="v" style="left:738px;top:201px">1.879 W</div>
<div class="v" style="left:818px;top:201px">0.445 W</div>
<div class="v" style="left:898px;top:201px">2.016 W</div>
<div class="bg" style="left:553px;top:218px;width:224px;background:#404040"></div>
<div class="bg" style="left:779px;top:218px;width:78px;background:#404040"></div>
<div class="bg" style="left:859px;top:218px;width:78px;background:#404040"></div>
<div class="bg" style="left:939px;top:218px;width:78px;background:#404040"></div>
<svg class="ic" style="left:540px;top:218px" width="10" height="16" viewBox="0 0 10 16"><path d="M2.2 0.6 L8.6 0.6 L7.2 4.2 L8.8 4.2 L7.4 8.2 L8.6 8.2 L1.4 15.4 L3.6 9.4 L1.8 9.4 L3.0 5.8 L1.0 5.8 Z" fill="url(#gbolt)" stroke="#e86a10" stroke-width="0.7" stroke-linejoin="round"/></svg>
<div class="t" style="left:554px;top:218px">PL1 Power Limit</div>
<div class="v" style="left:738px;top:218px">88.250 W</div>
<div class="v" style="left:818px;top:218px">81.250 W</div>
<div class="v" style="left:898px;top:218px">90.000 W</div>
<div class="bg" style="left:553px;top:235px;width:224px;background:#494949"></div>
<div class="bg" style="left:779px;top:235px;width:78px;background:#494949"></div>
<div class="bg" style="left:859px;top:235px;width:78px;background:#494949"></div>
<div class="bg" style="left:939px;top:235px;width:78px;background:#494949"></div>
<svg class="ic" style="left:540px;top:235px" width="10" height="16" viewBox="0 0 10 16"><path d="M2.2 0.6 L8.6 0.6 L7.2 4.2 L8.8 4.2 L7.4 8.2 L8.6 8.2 L1.4 15.4 L3.6 9.4 L1.8 9.4 L3.0 5.8 L1.0 5.8 Z" fill="url(#gbolt)" stroke="#e86a10" stroke-width="0.7" stroke-linejoin="round"/></svg>
<div class="t" style="left:554px;top:235px">PL2 Power Limit</div>
<div class="v" style="left:738px;top:235px">200.000 W</div>
<div class="v" style="left:818px;top:235px">200.000 W</div>
<div class="v" style="left:898px;top:235px">200.000 W</div>
<div class="bg" style="left:553px;top:252px;width:224px;background:#404040"></div>
<div class="bg" style="left:779px;top:252px;width:78px;background:#404040"></div>
<div class="bg" style="left:859px;top:252px;width:78px;background:#404040"></div>
<div class="bg" style="left:939px;top:252px;width:78px;background:#404040"></div>
<svg class="ic" style="left:538.5px;top:253px" width="13" height="14" viewBox="0 0 13 14"><circle cx="6.5" cy="7.3" r="5.9" fill="#181818" opacity="0.9"/><circle cx="6.5" cy="6.8" r="5.7" fill="#b4b4b4"/><circle cx="6.5" cy="7.1" r="4.9" fill="url(#gclk)"/><path d="M1.9 5.4 A4.9 4.9 0 0 1 11.1 5.4" fill="none" stroke="#808080" stroke-width="1"/><path d="M6.5 7.2 L4.2 6.2" stroke="#8c6a4a" stroke-width="0.9"/><path d="M6.5 7.2 L9.8 7.4" stroke="#909090" stroke-width="0.7"/></svg>
<div class="t" style="left:554px;top:252px">Current cTDP Level</div>
<div class="v" style="left:738px;top:252px">0</div>
<div class="v" style="left:818px;top:252px">0</div>
<div class="bg" style="left:553px;top:269px;width:224px;background:#494949"></div>
<div class="bg" style="left:779px;top:269px;width:78px;background:#494949"></div>
<div class="bg" style="left:859px;top:269px;width:78px;background:#494949"></div>
<div class="bg" style="left:939px;top:269px;width:78px;background:#494949"></div>
<div class="bg" style="left:513px;top:286px;width:504px;background:#363636"></div>
<svg class="ic" style="left:521px;top:290px" width="12" height="9" viewBox="0 0 12 9"><path d="M1.2 1.9 L6 6.8 L10.8 1.9" fill="none" stroke="#9c9c9c" stroke-width="2.2"/></svg>
<svg class="ic" style="left:539px;top:287px" width="12" height="15" viewBox="0 0 12 15"><rect x="2.3" y="0.6" width="7.4" height="12.8" fill="url(#gchip)"/><rect x="0.8" y="2.50" width="1.3" height="1.3" fill="#d0d0d0"/><rect x="9.9" y="2.50" width="1.3" height="1.3" fill="#d0d0d0"/><rect x="0.8" y="5.45" width="1.3" height="1.3" fill="#d0d0d0"/><rect x="9.9" y="5.45" width="1.3" height="1.3" fill="#d0d0d0"/><rect x="0.8" y="8.40" width="1.3" height="1.3" fill="#d0d0d0"/><rect x="9.9" y="8.40" width="1.3" height="1.3" fill="#d0d0d0"/><rect x="0.8" y="11.35" width="1.3" height="1.3" fill="#d0d0d0"/><rect x="9.9" y="11.35" width="1.3" height="1.3" fill="#d0d0d0"/></svg>
<div class="t gi" style="left:556px;top:286px;letter-spacing:-0.3px">Memory Timings</div>
<div class="bg" style="left:553px;top:303px;width:224px;background:#494949"></div>
<div class="bg" style="left:779px;top:303px;width:78px;background:#494949"></div>
<div class="bg" style="left:859px;top:303px;width:78px;background:#494949"></div>
<div class="bg" style="left:939px;top:303px;width:78px;background:#494949"></div>
<svg class="ic" style="left:538.5px;top:304px" width="13" height="14" viewBox="0 0 13 14"><circle cx="6.5" cy="7.3" r="5.9" fill="#181818" opacity="0.9"/><circle cx="6.5" cy="6.8" r="5.7" fill="#b4b4b4"/><circle cx="6.5" cy="7.1" r="4.9" fill="url(#gclk)"/><path d="M1.9 5.4 A4.9 4.9 0 0 1 11.1 5.4" fill="none" stroke="#808080" stroke-width="1"/><path d="M6.5 7.2 L4.2 6.2" stroke="#8c6a4a" stroke-width="0.9"/><path d="M6.5 7.2 L9.8 7.4" stroke="#909090" stroke-width="0.7"/></svg>
<div class="t" style="left:554px;top:303px">Memory Clock</div>
<div class="v" style="left:738px;top:303px">1,462.7 MHz</div>
<div class="v" style="left:818px;top:303px">1,462.0 MHz</div>
<div class="v" style="left:898px;top:303px">1,464.2 MHz</div>
<div class="bg" style="left:553px;top:320px;width:224px;background:#404040"></div>
<div class="bg" style="left:779px;top:320px;width:78px;background:#404040"></div>
<div class="bg" style="left:859px;top:320px;width:78px;background:#404040"></div>
<div class="bg" style="left:939px;top:320px;width:78px;background:#404040"></div>
<div class="bg" style="left:513px;top:337px;width:504px;background:#363636"></div>
<svg class="ic" style="left:521px;top:341px" width="12" height="9" viewBox="0 0 12 9"><path d="M1.2 1.9 L6 6.8 L10.8 1.9" fill="none" stroke="#9c9c9c" stroke-width="2.2"/></svg>
<svg class="ic" style="left:539px;top:338px" width="12" height="15" viewBox="0 0 12 15"><rect x="2.3" y="0.6" width="7.4" height="12.8" fill="url(#gchip)"/><rect x="0.8" y="2.50" width="1.3" height="1.3" fill="#d0d0d0"/><rect x="9.9" y="2.50" width="1.3" height="1.3" fill="#d0d0d0"/><rect x="0.8" y="5.45" width="1.3" height="1.3" fill="#d0d0d0"/><rect x="9.9" y="5.45" width="1.3" height="1.3" fill="#d0d0d0"/><rect x="0.8" y="8.40" width="1.3" height="1.3" fill="#d0d0d0"/><rect x="9.9" y="8.40" width="1.3" height="1.3" fill="#d0d0d0"/><rect x="0.8" y="11.35" width="1.3" height="1.3" fill="#d0d0d0"/><rect x="9.9" y="11.35" width="1.3" height="1.3" fill="#d0d0d0"/></svg>
<div class="t gi" style="left:556px;top:337px;letter-spacing:0px">CPU [#0]: Intel Core i7-10750H: Performa...</div>
<div class="bg" style="left:569px;top:354px;width:208px;background:#424242"></div>
<div class="bg" style="left:779px;top:354px;width:78px;background:#424242"></div>
<div class="bg" style="left:859px;top:354px;width:78px;background:#424242"></div>
<div class="bg" style="left:939px;top:354px;width:78px;background:#424242"></div>
<svg class="ic" style="left:539px;top:356px" width="9" height="13" viewBox="0 0 9 13"><path d="M1.4 1.0 L6.0 5.9 L1.4 10.8" fill="none" stroke="#9c9c9c" stroke-width="2"/></svg>
<svg class="ic" style="left:554.5px;top:355px" width="13" height="14" viewBox="0 0 13 14"><circle cx="6.5" cy="7.3" r="5.9" fill="#181818" opacity="0.9"/><circle cx="6.5" cy="6.8" r="5.7" fill="#b4b4b4"/><circle cx="6.5" cy="7.1" r="4.9" fill="url(#gclk)"/><path d="M1.9 5.4 A4.9 4.9 0 0 1 11.1 5.4" fill="none" stroke="#808080" stroke-width="1"/><path d="M6.5 7.2 L4.2 6.2" stroke="#8c6a4a" stroke-width="0.9"/><path d="M6.5 7.2 L9.8 7.4" stroke="#909090" stroke-width="0.7"/></svg>
<div class="t" style="left:570px;top:354px">IA Limit Reasons</div>
<div class="v" style="left:738px;top:354px">Yes</div>
<div class="v" style="left:818px;top:354px">No</div>
<div class="v" style="left:898px;top:354px">Yes</div>
<div class="bg" style="left:569px;top:371px;width:208px;background:#424242"></div>
<div class="bg" style="left:779px;top:371px;width:78px;background:#424242"></div>
<div class="bg" style="left:859px;top:371px;width:78px;background:#424242"></div>
<div class="bg" style="left:939px;top:371px;width:78px;background:#424242"></div>
<svg class="ic" style="left:539px;top:373px" width="9" height="13" viewBox="0 0 9 13"><path d="M1.4 1.0 L6.0 5.9 L1.4 10.8" fill="none" stroke="#9c9c9c" stroke-width="2"/></svg>
<svg class="ic" style="left:554.5px;top:372px" width="13" height="14" viewBox="0 0 13 14"><circle cx="6.5" cy="7.3" r="5.9" fill="#181818" opacity="0.9"/><circle cx="6.5" cy="6.8" r="5.7" fill="#b4b4b4"/><circle cx="6.5" cy="7.1" r="4.9" fill="url(#gclk)"/><path d="M1.9 5.4 A4.9 4.9 0 0 1 11.1 5.4" fill="none" stroke="#808080" stroke-width="1"/><path d="M6.5 7.2 L4.2 6.2" stroke="#8c6a4a" stroke-width="0.9"/><path d="M6.5 7.2 L9.8 7.4" stroke="#909090" stroke-width="0.7"/></svg>
<div class="t" style="left:570px;top:371px">GT Limit Reasons</div>
<div class="v" style="left:738px;top:371px">No</div>
<div class="v" style="left:818px;top:371px">No</div>
<div class="bg" style="left:569px;top:388px;width:208px;background:#424242"></div>
<div class="bg" style="left:779px;top:388px;width:78px;background:#424242"></div>
<div class="bg" style="left:859px;top:388px;width:78px;background:#424242"></div>
<div class="bg" style="left:939px;top:388px;width:78px;background:#424242"></div>
<svg class="ic" style="left:539px;top:390px" width="9" height="13" viewBox="0 0 9 13"><path d="M1.4 1.0 L6.0 5.9 L1.4 10.8" fill="none" stroke="#9c9c9c" stroke-width="2"/></svg>
<svg class="ic" style="left:554.5px;top:389px" width="13" height="14" viewBox="0 0 13 14"><circle cx="6.5" cy="7.3" r="5.9" fill="#181818" opacity="0.9"/><circle cx="6.5" cy="6.8" r="5.7" fill="#b4b4b4"/><circle cx="6.5" cy="7.1" r="4.9" fill="url(#gclk)"/><path d="M1.9 5.4 A4.9 4.9 0 0 1 11.1 5.4" fill="none" stroke="#808080" stroke-width="1"/><path d="M6.5 7.2 L4.2 6.2" stroke="#8c6a4a" stroke-width="0.9"/><path d="M6.5 7.2 L9.8 7.4" stroke="#909090" stroke-width="0.7"/></svg>
<div class="t" style="left:570px;top:388px">Ring Limit Reasons</div>
<div class="v" style="left:738px;top:388px">Yes</div>
<div class="v" style="left:818px;top:388px">No</div>
<div class="v" style="left:898px;top:388px">Yes</div>
<div class="bg" style="left:553px;top:405px;width:224px;background:#494949"></div>
<div class="bg" style="left:779px;top:405px;width:78px;background:#494949"></div>
<div class="bg" style="left:859px;top:405px;width:78px;background:#494949"></div>
<div class="bg" style="left:939px;top:405px;width:78px;background:#494949"></div>
<div class="bg" style="left:513px;top:422px;width:504px;background:#363636"></div>
<svg class="ic" style="left:521px;top:426px" width="12" height="9" viewBox="0 0 12 9"><path d="M1.2 1.9 L6 6.8 L10.8 1.9" fill="none" stroke="#9c9c9c" stroke-width="2.2"/></svg>
<svg class="ic" style="left:539px;top:423px" width="12" height="15" viewBox="0 0 12 15"><rect x="2.3" y="0.6" width="7.4" height="12.8" fill="url(#gchip)"/><rect x="0.8" y="2.50" width="1.3" height="1.3" fill="#d0d0d0"/><rect x="9.9" y="2.50" width="1.3" height="1.3" fill="#d0d0d0"/><rect x="0.8" y="5.45" width="1.3" height="1.3" fill="#d0d0d0"/><rect x="9.9" y="5.45" width="1.3" height="1.3" fill="#d0d0d0"/><rect x="0.8" y="8.40" width="1.3" height="1.3" fill="#d0d0d0"/><rect x="9.9" y="8.40" width="1.3" height="1.3" fill="#d0d0d0"/><rect x="0.8" y="11.35" width="1.3" height="1.3" fill="#d0d0d0"/><rect x="9.9" y="11.35" width="1.3" height="1.3" fill="#d0d0d0"/></svg>
<div class="t gi" style="left:556px;top:422px;letter-spacing:-0.21px">S.M.A.R.T.: KINGSTON OM8PCP3512F-AI1...</div>
<div class="bg" style="left:553px;top:439px;width:224px;background:#494949"></div>
<div class="bg" style="left:779px;top:439px;width:78px;background:#494949"></div>
<div class="bg" style="left:859px;top:439px;width:78px;background:#494949"></div>
<div class="bg" style="left:939px;top:439px;width:78px;background:#494949"></div>
<svg class="ic" style="left:540px;top:439px" width="10" height="17" viewBox="0 0 10 17"><rect x="2.1" y="0.6" width="5.8" height="11.5" rx="2.9" fill="#c4c8cc"/><circle cx="5" cy="12.4" r="4.2" fill="#c4c8cc"/><rect x="3" y="1.5" width="4" height="10.5" rx="2" fill="#5aa0e0"/><circle cx="5" cy="12.4" r="3.3" fill="#5aa0e0"/><rect x="3.8" y="2.2" width="2.4" height="10" rx="1.2" fill="#eef6fc"/><circle cx="5" cy="12.4" r="2.5" fill="#eef6fc"/><rect x="4.2" y="4.5" width="1.6" height="8" fill="#ff5a00"/><rect x="3.4" y="10.8" width="3.2" height="3" rx="0.8" fill="#ff4e00"/></svg>
<div class="t" style="left:554px;top:439px">Drive Temperature</div>
<div class="v" style="left:738px;top:439px">52 °C</div>
<div class="v" style="left:818px;top:439px">31 °C</div>
<div class="v" style="left:898px;top:439px">52 °C</div>
<div class="bg" style="left:553px;top:456px;width:224px;background:#404040"></div>
<div class="bg" style="left:779px;top:456px;width:78px;background:#404040"></div>
<div class="bg" style="left:859px;top:456px;width:78px;background:#404040"></div>
<div class="bg" style="left:939px;top:456px;width:78px;background:#404040"></div>
<div class="bg" style="left:513px;top:473px;width:504px;background:#363636"></div>
<svg class="ic" style="left:521px;top:477px" width="12" height="9" viewBox="0 0 12 9"><path d="M1.2 1.9 L6 6.8 L10.8 1.9" fill="none" stroke="#9c9c9c" stroke-width="2.2"/></svg>
<svg class="ic" style="left:539px;top:474px" width="12" height="15" viewBox="0 0 12 15"><rect x="2.3" y="0.6" width="7.4" height="12.8" fill="url(#gchip)"/><rect x="0.8" y="2.50" width="1.3" height="1.3" fill="#d0d0d0"/><rect x="9.9" y="2.50" width="1.3" height="1.3" fill="#d0d0d0"/><rect x="0.8" y="5.45" width="1.3" height="1.3" fill="#d0d0d0"/><rect x="9.9" y="5.45" width="1.3" height="1.3" fill="#d0d0d0"/><rect x="0.8" y="8.40" width="1.3" height="1.3" fill="#d0d0d0"/><rect x="9.9" y="8.40" width="1.3" height="1.3" fill="#d0d0d0"/><rect x="0.8" y="11.35" width="1.3" height="1.3" fill="#d0d0d0"/><rect x="9.9" y="11.35" width="1.3" height="1.3" fill="#d0d0d0"/></svg>
<div class="t gi" style="left:556px;top:473px;letter-spacing:-0.18px">GPU [#1]: NVIDIA GeForce RTX 3070 Mobile:</div>
<div class="bg" style="left:553px;top:490px;width:224px;background:#404040"></div>
<div class="bg" style="left:779px;top:490px;width:78px;background:#404040"></div>
<div class="bg" style="left:859px;top:490px;width:78px;background:#404040"></div>
<div class="bg" style="left:939px;top:490px;width:78px;background:#404040"></div>
<svg class="ic" style="left:540px;top:490px" width="10" height="17" viewBox="0 0 10 17"><rect x="2.1" y="0.6" width="5.8" height="11.5" rx="2.9" fill="#c4c8cc"/><circle cx="5" cy="12.4" r="4.2" fill="#c4c8cc"/><rect x="3" y="1.5" width="4" height="10.5" rx="2" fill="#5aa0e0"/><circle cx="5" cy="12.4" r="3.3" fill="#5aa0e0"/><rect x="3.8" y="2.2" width="2.4" height="10" rx="1.2" fill="#eef6fc"/><circle cx="5" cy="12.4" r="2.5" fill="#eef6fc"/><rect x="4.2" y="4.5" width="1.6" height="8" fill="#ff5a00"/><rect x="3.4" y="10.8" width="3.2" height="3" rx="0.8" fill="#ff4e00"/></svg>
<div class="t" style="left:554px;top:490px">GPU Temperature</div>
<div class="v" style="left:738px;top:490px">73.3 °C</div>
<div class="v" style="left:818px;top:490px">33.3 °C</div>
<div class="v" style="left:898px;top:490px">75.1 °C</div>
<div class="bg" style="left:553px;top:507px;width:224px;background:#494949"></div>
<div class="bg" style="left:779px;top:507px;width:78px;background:#494949"></div>
<div class="bg" style="left:859px;top:507px;width:78px;background:#494949"></div>
<div class="bg" style="left:939px;top:507px;width:78px;background:#494949"></div>
<svg class="ic" style="left:540px;top:507px" width="10" height="17" viewBox="0 0 10 17"><rect x="2.1" y="0.6" width="5.8" height="11.5" rx="2.9" fill="#c4c8cc"/><circle cx="5" cy="12.4" r="4.2" fill="#c4c8cc"/><rect x="3" y="1.5" width="4" height="10.5" rx="2" fill="#5aa0e0"/><circle cx="5" cy="12.4" r="3.3" fill="#5aa0e0"/><rect x="3.8" y="2.2" width="2.4" height="10" rx="1.2" fill="#eef6fc"/><circle cx="5" cy="12.4" r="2.5" fill="#eef6fc"/><rect x="4.2" y="4.5" width="1.6" height="8" fill="#ff5a00"/><rect x="3.4" y="10.8" width="3.2" height="3" rx="0.8" fill="#ff4e00"/></svg>
<div class="t" style="left:554px;top:507px">GPU Hot Spot Temperature</div>
<div class="v" style="left:738px;top:507px">80.8 °C</div>
<div class="v" style="left:818px;top:507px">38.3 °C</div>
<div class="v" style="left:898px;top:507px">84.0 °C</div>
<div class="bg" style="left:553px;top:524px;width:224px;background:#404040"></div>
<div class="bg" style="left:779px;top:524px;width:78px;background:#404040"></div>
<div class="bg" style="left:859px;top:524px;width:78px;background:#404040"></div>
<div class="bg" style="left:939px;top:524px;width:78px;background:#404040"></div>
<svg class="ic" style="left:540px;top:524px" width="10" height="16" viewBox="0 0 10 16"><path d="M2.2 0.6 L8.6 0.6 L7.2 4.2 L8.8 4.2 L7.4 8.2 L8.6 8.2 L1.4 15.4 L3.6 9.4 L1.8 9.4 L3.0 5.8 L1.0 5.8 Z" fill="url(#gbolt)" stroke="#e86a10" stroke-width="0.7" stroke-linejoin="round"/></svg>
<div class="t" style="left:554px;top:524px">GPU Power</div>
<div class="v" style="left:738px;top:524px">111.777 W</div>
<div class="v" style="left:818px;top:524px">11.636 W</div>
<div class="v" style="left:898px;top:524px">146.560 W</div>
<div class="bg" style="left:569px;top:541px;width:208px;background:#424242"></div>
<div class="bg" style="left:779px;top:541px;width:78px;background:#424242"></div>
<div class="bg" style="left:859px;top:541px;width:78px;background:#424242"></div>
<div class="bg" style="left:939px;top:541px;width:78px;background:#424242"></div>
<svg class="ic" style="left:539px;top:543px" width="9" height="13" viewBox="0 0 9 13"><path d="M1.4 1.0 L6.0 5.9 L1.4 10.8" fill="none" stroke="#9c9c9c" stroke-width="2"/></svg>
<svg class="ic" style="left:556px;top:541px" width="10" height="16" viewBox="0 0 10 16"><path d="M2.2 0.6 L8.6 0.6 L7.2 4.2 L8.8 4.2 L7.4 8.2 L8.6 8.2 L1.4 15.4 L3.6 9.4 L1.8 9.4 L3.0 5.8 L1.0 5.8 Z" fill="url(#gbolt)" stroke="#e86a10" stroke-width="0.7" stroke-linejoin="round"/></svg>
<div class="t" style="left:570px;top:541px">GPU Rail Powers</div>
<div class="v" style="left:818px;top:541px">0.000 W</div>
<div class="v" style="left:898px;top:541px">126.447 W</div>
<div class="bg" style="left:553px;top:558px;width:224px;background:#404040"></div>
<div class="bg" style="left:779px;top:558px;width:78px;background:#404040"></div>
<div class="bg" style="left:859px;top:558px;width:78px;background:#404040"></div>
<div class="bg" style="left:939px;top:558px;width:78px;background:#404040"></div>
<svg class="ic" style="left:538.5px;top:559px" width="13" height="14" viewBox="0 0 13 14"><circle cx="6.5" cy="7.3" r="5.9" fill="#181818" opacity="0.9"/><circle cx="6.5" cy="6.8" r="5.7" fill="#b4b4b4"/><circle cx="6.5" cy="7.1" r="4.9" fill="url(#gclk)"/><path d="M1.9 5.4 A4.9 4.9 0 0 1 11.1 5.4" fill="none" stroke="#808080" stroke-width="1"/><path d="M6.5 7.2 L4.2 6.2" stroke="#8c6a4a" stroke-width="0.9"/><path d="M6.5 7.2 L9.8 7.4" stroke="#909090" stroke-width="0.7"/></svg>
<div class="t" style="left:554px;top:558px">GPU Clock</div>
<div class="v" style="left:738px;top:558px">1,290.0 MHz</div>
<div class="v" style="left:818px;top:558px">210.0 MHz</div>
<div class="v" style="left:898px;top:558px">1,800.0 MHz</div>
<div class="bg" style="left:553px;top:575px;width:224px;background:#494949"></div>
<div class="bg" style="left:779px;top:575px;width:78px;background:#494949"></div>
<div class="bg" style="left:859px;top:575px;width:78px;background:#494949"></div>
<div class="bg" style="left:939px;top:575px;width:78px;background:#494949"></div>
<svg class="ic" style="left:538.5px;top:576px" width="13" height="14" viewBox="0 0 13 14"><circle cx="6.5" cy="7.3" r="5.9" fill="#181818" opacity="0.9"/><circle cx="6.5" cy="6.8" r="5.7" fill="#b4b4b4"/><circle cx="6.5" cy="7.1" r="4.9" fill="url(#gclk)"/><path d="M1.9 5.4 A4.9 4.9 0 0 1 11.1 5.4" fill="none" stroke="#808080" stroke-width="1"/><path d="M6.5 7.2 L4.2 6.2" stroke="#8c6a4a" stroke-width="0.9"/><path d="M6.5 7.2 L9.8 7.4" stroke="#909090" stroke-width="0.7"/></svg>
<div class="t" style="left:554px;top:575px">GPU Memory Clock</div>
<div class="v" style="left:738px;top:575px">1,750.2 MHz</div>
<div class="v" style="left:818px;top:575px">101.3 MHz</div>
<div class="v" style="left:898px;top:575px">1,750.2 MHz</div>
<div class="bg" style="left:553px;top:592px;width:224px;background:#404040"></div>
<div class="bg" style="left:779px;top:592px;width:78px;background:#404040"></div>
<div class="bg" style="left:859px;top:592px;width:78px;background:#404040"></div>
<div class="bg" style="left:939px;top:592px;width:78px;background:#404040"></div>
<svg class="ic" style="left:538.5px;top:593px" width="13" height="14" viewBox="0 0 13 14"><circle cx="6.5" cy="7.3" r="5.9" fill="#181818" opacity="0.9"/><circle cx="6.5" cy="6.8" r="5.7" fill="#b4b4b4"/><circle cx="6.5" cy="7.1" r="4.9" fill="url(#gclk)"/><path d="M1.9 5.4 A4.9 4.9 0 0 1 11.1 5.4" fill="none" stroke="#808080" stroke-width="1"/><path d="M6.5 7.2 L4.2 6.2" stroke="#8c6a4a" stroke-width="0.9"/><path d="M6.5 7.2 L9.8 7.4" stroke="#909090" stroke-width="0.7"/></svg>
<div class="t" style="left:554px;top:592px">GPU Video Clock</div>
<div class="v" style="left:738px;top:592px">1,125.0 MHz</div>
<div class="v" style="left:818px;top:592px">555.0 MHz</div>
<div class="v" style="left:898px;top:592px">1,590.0 MHz</div>
<div class="bg" style="left:553px;top:609px;width:224px;background:#494949"></div>
<div class="bg" style="left:779px;top:609px;width:78px;background:#494949"></div>
<div class="bg" style="left:859px;top:609px;width:78px;background:#494949"></div>
<div class="bg" style="left:939px;top:609px;width:78px;background:#494949"></div>
<svg class="ic" style="left:538.5px;top:610px" width="13" height="14" viewBox="0 0 13 14"><circle cx="6.5" cy="7.3" r="5.9" fill="#181818" opacity="0.9"/><circle cx="6.5" cy="6.8" r="5.7" fill="#b4b4b4"/><circle cx="6.5" cy="7.1" r="4.9" fill="url(#gclk)"/><path d="M1.9 5.4 A4.9 4.9 0 0 1 11.1 5.4" fill="none" stroke="#808080" stroke-width="1"/><path d="M6.5 7.2 L4.2 6.2" stroke="#8c6a4a" stroke-width="0.9"/><path d="M6.5 7.2 L9.8 7.4" stroke="#909090" stroke-width="0.7"/></svg>
<div class="t" style="left:554px;top:609px">GPU Effective Clock</div>
<div class="v" style="left:738px;top:609px">1,306.9 MHz</div>
<div class="v" style="left:818px;top:609px">6.6 MHz</div>
<div class="v" style="left:898px;top:609px">1,621.7 MHz</div>
<div class="bg" style="left:553px;top:626px;width:224px;background:#404040"></div>
<div class="bg" style="left:779px;top:626px;width:78px;background:#404040"></div>
<div class="bg" style="left:859px;top:626px;width:78px;background:#404040"></div>
<div class="bg" style="left:939px;top:626px;width:78px;background:#404040"></div>
<svg class="ic" style="left:538.5px;top:627px" width="13" height="14" viewBox="0 0 13 14"><circle cx="6.5" cy="7.3" r="5.9" fill="#181818" opacity="0.9"/><circle cx="6.5" cy="6.8" r="5.7" fill="#b4b4b4"/><circle cx="6.5" cy="7.1" r="4.9" fill="url(#gclk)"/><path d="M1.9 5.4 A4.9 4.9 0 0 1 11.1 5.4" fill="none" stroke="#808080" stroke-width="1"/><path d="M6.5 7.2 L4.2 6.2" stroke="#8c6a4a" stroke-width="0.9"/><path d="M6.5 7.2 L9.8 7.4" stroke="#909090" stroke-width="0.7"/></svg>
<div class="t" style="left:554px;top:626px">GPU Core Load</div>
<div class="v" style="left:738px;top:626px">98.0 %</div>
<div class="v" style="left:818px;top:626px">0.0 %</div>
<div class="v" style="left:898px;top:626px">98.0 %</div>
<div class="bg" style="left:553px;top:643px;width:224px;background:#494949"></div>
<div class="bg" style="left:779px;top:643px;width:78px;background:#494949"></div>
<div class="bg" style="left:859px;top:643px;width:78px;background:#494949"></div>
<div class="bg" style="left:939px;top:643px;width:78px;background:#494949"></div>
<svg class="ic" style="left:538.5px;top:644px" width="13" height="14" viewBox="0 0 13 14"><circle cx="6.5" cy="7.3" r="5.9" fill="#181818" opacity="0.9"/><circle cx="6.5" cy="6.8" r="5.7" fill="#b4b4b4"/><circle cx="6.5" cy="7.1" r="4.9" fill="url(#gclk)"/><path d="M1.9 5.4 A4.9 4.9 0 0 1 11.1 5.4" fill="none" stroke="#808080" stroke-width="1"/><path d="M6.5 7.2 L4.2 6.2" stroke="#8c6a4a" stroke-width="0.9"/><path d="M6.5 7.2 L9.8 7.4" stroke="#909090" stroke-width="0.7"/></svg>
<div class="t" style="left:554px;top:643px">GPU Memory Controller Load</div>
<div class="v" style="left:738px;top:643px">35.0 %</div>
<div class="v" style="left:818px;top:643px">0.0 %</div>
<div class="v" style="left:898px;top:643px">46.0 %</div>
<div class="bg" style="left:553px;top:660px;width:224px;background:#404040"></div>
<div class="bg" style="left:779px;top:660px;width:78px;background:#404040"></div>
<div class="bg" style="left:859px;top:660px;width:78px;background:#404040"></div>
<div class="bg" style="left:939px;top:660px;width:78px;background:#404040"></div>
<svg class="ic" style="left:538.5px;top:661px" width="13" height="14" viewBox="0 0 13 14"><circle cx="6.5" cy="7.3" r="5.9" fill="#181818" opacity="0.9"/><circle cx="6.5" cy="6.8" r="5.7" fill="#b4b4b4"/><circle cx="6.5" cy="7.1" r="4.9" fill="url(#gclk)"/><path d="M1.9 5.4 A4.9 4.9 0 0 1 11.1 5.4" fill="none" stroke="#808080" stroke-width="1"/><path d="M6.5 7.2 L4.2 6.2" stroke="#8c6a4a" stroke-width="0.9"/><path d="M6.5 7.2 L9.8 7.4" stroke="#909090" stroke-width="0.7"/></svg>
<div class="t" style="left:554px;top:660px">GPU Video Engine Load</div>
<div class="v" style="left:738px;top:660px">0.0 %</div>
<div class="v" style="left:818px;top:660px">0.0 %</div>
<div class="bg" style="left:553px;top:677px;width:224px;background:#494949"></div>
<div class="bg" style="left:779px;top:677px;width:78px;background:#494949"></div>
<div class="bg" style="left:859px;top:677px;width:78px;background:#494949"></div>
<div class="bg" style="left:939px;top:677px;width:78px;background:#494949"></div>
<svg class="ic" style="left:538.5px;top:678px" width="13" height="14" viewBox="0 0 13 14"><circle cx="6.5" cy="7.3" r="5.9" fill="#181818" opacity="0.9"/><circle cx="6.5" cy="6.8" r="5.7" fill="#b4b4b4"/><circle cx="6.5" cy="7.1" r="4.9" fill="url(#gclk)"/><path d="M1.9 5.4 A4.9 4.9 0 0 1 11.1 5.4" fill="none" stroke="#808080" stroke-width="1"/><path d="M6.5 7.2 L4.2 6.2" stroke="#8c6a4a" stroke-width="0.9"/><path d="M6.5 7.2 L9.8 7.4" stroke="#909090" stroke-width="0.7"/></svg>
<div class="t" style="left:554px;top:677px">GPU Bus Load</div>
<div class="v" style="left:738px;top:677px">1.0 %</div>
<div class="v" style="left:818px;top:677px">0.0 %</div>
<div class="v" style="left:898px;top:677px">3.0 %</div>
<div class="bg" style="left:553px;top:694px;width:224px;background:#404040"></div>
<div class="bg" style="left:779px;top:694px;width:78px;background:#404040"></div>
<div class="bg" style="left:859px;top:694px;width:78px;background:#404040"></div>
<div class="bg" style="left:939px;top:694px;width:78px;background:#404040"></div>
<svg class="ic" style="left:538.5px;top:695px" width="13" height="14" viewBox="0 0 13 14"><circle cx="6.5" cy="7.3" r="5.9" fill="#181818" opacity="0.9"/><circle cx="6.5" cy="6.8" r="5.7" fill="#b4b4b4"/><circle cx="6.5" cy="7.1" r="4.9" fill="url(#gclk)"/><path d="M1.9 5.4 A4.9 4.9 0 0 1 11.1 5.4" fill="none" stroke="#808080" stroke-width="1"/><path d="M6.5 7.2 L4.2 6.2" stroke="#8c6a4a" stroke-width="0.9"/><path d="M6.5 7.2 L9.8 7.4" stroke="#909090" stroke-width="0.7"/></svg>
<div class="t" style="left:554px;top:694px">GPU Memory Usage</div>
<div class="v" style="left:738px;top:694px">4.5 %</div>
<div class="v" style="left:818px;top:694px">1.8 %</div>
<div class="v" style="left:898px;top:694px">4.5 %</div>
<div class="bg" style="left:569px;top:711px;width:208px;background:#494949"></div>
<div class="bg" style="left:779px;top:711px;width:78px;background:#494949"></div>
<div class="bg" style="left:859px;top:711px;width:78px;background:#494949"></div>
<div class="bg" style="left:939px;top:711px;width:78px;background:#494949"></div>
<svg class="ic" style="left:537px;top:715px" width="12" height="9" viewBox="0 0 12 9"><path d="M1.2 1.9 L6 6.8 L10.8 1.9" fill="none" stroke="#9c9c9c" stroke-width="2.2"/></svg>
<svg class="ic" style="left:554.5px;top:712px" width="13" height="14" viewBox="0 0 13 14"><circle cx="6.5" cy="7.3" r="5.9" fill="#181818" opacity="0.9"/><circle cx="6.5" cy="6.8" r="5.7" fill="#b4b4b4"/><circle cx="6.5" cy="7.1" r="4.9" fill="url(#gclk)"/><path d="M1.9 5.4 A4.9 4.9 0 0 1 11.1 5.4" fill="none" stroke="#808080" stroke-width="1"/><path d="M6.5 7.2 L4.2 6.2" stroke="#8c6a4a" stroke-width="0.9"/><path d="M6.5 7.2 L9.8 7.4" stroke="#909090" stroke-width="0.7"/></svg>
<div class="t" style="left:570px;top:711px">GPU D3D Usages</div>
<div class="v" style="left:818px;top:711px">0.0 %</div>
<div class="v" style="left:898px;top:711px">100.0 %</div>
<div class="bg" style="left:569px;top:728px;width:208px;background:#404040"></div>
<div class="bg" style="left:779px;top:728px;width:78px;background:#404040"></div>
<div class="bg" style="left:859px;top:728px;width:78px;background:#404040"></div>
<div class="bg" style="left:939px;top:728px;width:78px;background:#404040"></div>
<svg class="ic" style="left:554.5px;top:729px" width="13" height="14" viewBox="0 0 13 14"><circle cx="6.5" cy="7.3" r="5.9" fill="#181818" opacity="0.9"/><circle cx="6.5" cy="6.8" r="5.7" fill="#b4b4b4"/><circle cx="6.5" cy="7.1" r="4.9" fill="url(#gclk)"/><path d="M1.9 5.4 A4.9 4.9 0 0 1 11.1 5.4" fill="none" stroke="#808080" stroke-width="1"/><path d="M6.5 7.2 L4.2 6.2" stroke="#8c6a4a" stroke-width="0.9"/><path d="M6.5 7.2 L9.8 7.4" stroke="#909090" stroke-width="0.7"/></svg>
<div class="t" style="left:570px;top:728px">GPU D3D Usage</div>
<div class="v" style="left:738px;top:728px">99.1 %</div>
<div class="v" style="left:818px;top:728px">0.0 %</div>
<div class="v" style="left:898px;top:728px">100.0 %</div>
<div class="bg" style="left:569px;top:745px;width:208px;background:#494949"></div>
<div class="bg" style="left:779px;top:745px;width:78px;background:#494949"></div>
<div class="bg" style="left:859px;top:745px;width:78px;background:#494949"></div>
<div class="bg" style="left:939px;top:745px;width:78px;background:#494949"></div>
<svg class="ic" style="left:554.5px;top:746px" width="13" height="14" viewBox="0 0 13 14"><circle cx="6.5" cy="7.3" r="5.9" fill="#181818" opacity="0.9"/><circle cx="6.5" cy="6.8" r="5.7" fill="#b4b4b4"/><circle cx="6.5" cy="7.1" r="4.9" fill="url(#gclk)"/><path d="M1.9 5.4 A4.9 4.9 0 0 1 11.1 5.4" fill="none" stroke="#808080" stroke-width="1"/><path d="M6.5 7.2 L4.2 6.2" stroke="#8c6a4a" stroke-width="0.9"/><path d="M6.5 7.2 L9.8 7.4" stroke="#909090" stroke-width="0.7"/></svg>
<div class="t" style="left:570px;top:745px">GPU Video Decode 0 Usage</div>
<div class="v" style="left:738px;top:745px">0.0 %</div>
<div class="v" style="left:818px;top:745px">0.0 %</div>
<div class="bg" style="left:569px;top:762px;width:208px;background:#404040"></div>
<div class="bg" style="left:779px;top:762px;width:78px;background:#404040"></div>
<div class="bg" style="left:859px;top:762px;width:78px;background:#404040"></div>
<div class="bg" style="left:939px;top:762px;width:78px;background:#404040"></div>
<svg class="ic" style="left:554.5px;top:763px" width="13" height="14" viewBox="0 0 13 14"><circle cx="6.5" cy="7.3" r="5.9" fill="#181818" opacity="0.9"/><circle cx="6.5" cy="6.8" r="5.7" fill="#b4b4b4"/><circle cx="6.5" cy="7.1" r="4.9" fill="url(#gclk)"/><path d="M1.9 5.4 A4.9 4.9 0 0 1 11.1 5.4" fill="none" stroke="#808080" stroke-width="1"/><path d="M6.5 7.2 L4.2 6.2" stroke="#8c6a4a" stroke-width="0.9"/><path d="M6.5 7.2 L9.8 7.4" stroke="#909090" stroke-width="0.7"/></svg>
<div class="t" style="left:570px;top:762px">GPU Video Encode 0 Usage</div>
<div class="v" style="left:738px;top:762px">0.0 %</div>
<div class="v" style="left:818px;top:762px">0.0 %</div>
<div class="bg" style="left:569px;top:779px;width:208px;background:#494949"></div>
<div class="bg" style="left:779px;top:779px;width:78px;background:#494949"></div>
<div class="bg" style="left:859px;top:779px;width:78px;background:#494949"></div>
<div class="bg" style="left:939px;top:779px;width:78px;background:#494949"></div>
<svg class="ic" style="left:554.5px;top:780px" width="13" height="14" viewBox="0 0 13 14"><circle cx="6.5" cy="7.3" r="5.9" fill="#181818" opacity="0.9"/><circle cx="6.5" cy="6.8" r="5.7" fill="#b4b4b4"/><circle cx="6.5" cy="7.1" r="4.9" fill="url(#gclk)"/><path d="M1.9 5.4 A4.9 4.9 0 0 1 11.1 5.4" fill="none" stroke="#808080" stroke-width="1"/><path d="M6.5 7.2 L4.2 6.2" stroke="#8c6a4a" stroke-width="0.9"/><path d="M6.5 7.2 L9.8 7.4" stroke="#909090" stroke-width="0.7"/></svg>
<div class="t" style="left:570px;top:779px">GPU Computing (Compute_0) Usage</div>
<div class="v" style="left:738px;top:779px">0.0 %</div>
<div class="v" style="left:818px;top:779px">0.0 %</div>
<div class="bg" style="left:569px;top:796px;width:208px;background:#404040"></div>
<div class="bg" style="left:779px;top:796px;width:78px;background:#404040"></div>
<div class="bg" style="left:859px;top:796px;width:78px;background:#404040"></div>
<div class="bg" style="left:939px;top:796px;width:78px;background:#404040"></div>
<svg class="ic" style="left:554.5px;top:797px" width="13" height="14" viewBox="0 0 13 14"><circle cx="6.5" cy="7.3" r="5.9" fill="#181818" opacity="0.9"/><circle cx="6.5" cy="6.8" r="5.7" fill="#b4b4b4"/><circle cx="6.5" cy="7.1" r="4.9" fill="url(#gclk)"/><path d="M1.9 5.4 A4.9 4.9 0 0 1 11.1 5.4" fill="none" stroke="#808080" stroke-width="1"/><path d="M6.5 7.2 L4.2 6.2" stroke="#8c6a4a" stroke-width="0.9"/><path d="M6.5 7.2 L9.8 7.4" stroke="#909090" stroke-width="0.7"/></svg>
<div class="t" style="left:570px;top:796px">GPU Computing (Compute_1) Usage</div>
<div class="v" style="left:738px;top:796px">0.0 %</div>
<div class="v" style="left:818px;top:796px">0.0 %</div>
<div class="bg" style="left:569px;top:813px;width:208px;background:#494949"></div>
<div class="bg" style="left:779px;top:813px;width:78px;background:#494949"></div>
<div class="bg" style="left:859px;top:813px;width:78px;background:#494949"></div>
<div class="bg" style="left:939px;top:813px;width:78px;background:#494949"></div>
<svg class="ic" style="left:554.5px;top:814px" width="13" height="14" viewBox="0 0 13 14"><circle cx="6.5" cy="7.3" r="5.9" fill="#181818" opacity="0.9"/><circle cx="6.5" cy="6.8" r="5.7" fill="#b4b4b4"/><circle cx="6.5" cy="7.1" r="4.9" fill="url(#gclk)"/><path d="M1.9 5.4 A4.9 4.9 0 0 1 11.1 5.4" fill="none" stroke="#808080" stroke-width="1"/><path d="M6.5 7.2 L4.2 6.2" stroke="#8c6a4a" stroke-width="0.9"/><path d="M6.5 7.2 L9.8 7.4" stroke="#909090" stroke-width="0.7"/></svg>
<div class="t" style="left:570px;top:813px">GPU VR Usage</div>
<div class="v" style="left:738px;top:813px">0.0 %</div>
<div class="v" style="left:818px;top:813px">0.0 %</div>
<div class="bg" style="left:569px;top:830px;width:208px;background:#404040"></div>
<div class="bg" style="left:779px;top:830px;width:78px;background:#404040"></div>
<div class="bg" style="left:859px;top:830px;width:78px;background:#404040"></div>
<div class="bg" style="left:939px;top:830px;width:78px;background:#404040"></div>
<svg class="ic" style="left:537px;top:834px" width="12" height="9" viewBox="0 0 12 9"><path d="M1.2 1.9 L6 6.8 L10.8 1.9" fill="none" stroke="#9c9c9c" stroke-width="2.2"/></svg>
<svg class="ic" style="left:554.5px;top:831px" width="13" height="14" viewBox="0 0 13 14"><circle cx="6.5" cy="7.3" r="5.9" fill="#181818" opacity="0.9"/><circle cx="6.5" cy="6.8" r="5.7" fill="#b4b4b4"/><circle cx="6.5" cy="7.1" r="4.9" fill="url(#gclk)"/><path d="M1.9 5.4 A4.9 4.9 0 0 1 11.1 5.4" fill="none" stroke="#808080" stroke-width="1"/><path d="M6.5 7.2 L4.2 6.2" stroke="#8c6a4a" stroke-width="0.9"/><path d="M6.5 7.2 L9.8 7.4" stroke="#909090" stroke-width="0.7"/></svg>
<div class="t" style="left:570px;top:830px">GPU Performance Limits</div>
<div class="v" style="left:738px;top:830px">Yes</div>
<div class="v" style="left:818px;top:830px">No</div>
<div class="v" style="left:898px;top:830px">Yes</div>
<div class="bg" style="left:569px;top:847px;width:208px;background:#494949"></div>
<div class="bg" style="left:779px;top:847px;width:78px;background:#494949"></div>
<div class="bg" style="left:859px;top:847px;width:78px;background:#494949"></div>
<div class="bg" style="left:939px;top:847px;width:78px;background:#494949"></div>
<svg class="ic" style="left:554.5px;top:848px" width="13" height="14" viewBox="0 0 13 14"><circle cx="6.5" cy="7.3" r="5.9" fill="#181818" opacity="0.9"/><circle cx="6.5" cy="6.8" r="5.7" fill="#b4b4b4"/><circle cx="6.5" cy="7.1" r="4.9" fill="url(#gclk)"/><path d="M1.9 5.4 A4.9 4.9 0 0 1 11.1 5.4" fill="none" stroke="#808080" stroke-width="1"/><path d="M6.5 7.2 L4.2 6.2" stroke="#8c6a4a" stroke-width="0.9"/><path d="M6.5 7.2 L9.8 7.4" stroke="#909090" stroke-width="0.7"/></svg>
<div class="t" style="left:570px;top:847px">Performance Limit - Power</div>
<div class="v" style="left:738px;top:847px">Yes</div>
<div class="v" style="left:818px;top:847px">No</div>
<div class="v" style="left:898px;top:847px">Yes</div>
<div class="bg" style="left:569px;top:864px;width:208px;background:#404040"></div>
<div class="bg" style="left:779px;top:864px;width:78px;background:#404040"></div>
<div class="bg" style="left:859px;top:864px;width:78px;background:#404040"></div>
<div class="bg" style="left:939px;top:864px;width:78px;background:#404040"></div>
<svg class="ic" style="left:554.5px;top:865px" width="13" height="14" viewBox="0 0 13 14"><circle cx="6.5" cy="7.3" r="5.9" fill="#181818" opacity="0.9"/><circle cx="6.5" cy="6.8" r="5.7" fill="#b4b4b4"/><circle cx="6.5" cy="7.1" r="4.9" fill="url(#gclk)"/><path d="M1.9 5.4 A4.9 4.9 0 0 1 11.1 5.4" fill="none" stroke="#808080" stroke-width="1"/><path d="M6.5 7.2 L4.2 6.2" stroke="#8c6a4a" stroke-width="0.9"/><path d="M6.5 7.2 L9.8 7.4" stroke="#909090" stroke-width="0.7"/></svg>
<div class="t" style="left:570px;top:864px">Performance Limit - Thermal</div>
<div class="v" style="left:738px;top:864px">No</div>
<div class="v" style="left:818px;top:864px">No</div>
<div class="bg" style="left:569px;top:881px;width:208px;background:#494949"></div>
<div class="bg" style="left:779px;top:881px;width:78px;background:#494949"></div>
<div class="bg" style="left:859px;top:881px;width:78px;background:#494949"></div>
<div class="bg" style="left:939px;top:881px;width:78px;background:#494949"></div>
<svg class="ic" style="left:554.5px;top:882px" width="13" height="14" viewBox="0 0 13 14"><circle cx="6.5" cy="7.3" r="5.9" fill="#181818" opacity="0.9"/><circle cx="6.5" cy="6.8" r="5.7" fill="#b4b4b4"/><circle cx="6.5" cy="7.1" r="4.9" fill="url(#gclk)"/><path d="M1.9 5.4 A4.9 4.9 0 0 1 11.1 5.4" fill="none" stroke="#808080" stroke-width="1"/><path d="M6.5 7.2 L4.2 6.2" stroke="#8c6a4a" stroke-width="0.9"/><path d="M6.5 7.2 L9.8 7.4" stroke="#909090" stroke-width="0.7"/></svg>
<div class="t" style="left:570px;top:881px">Performance Limit - Reliability Voltage</div>
<div class="v" style="left:738px;top:881px">No</div>
<div class="v" style="left:818px;top:881px">No</div>
<div class="v gry" style="left:898px;top:881px">Yes</div>
<div class="bg" style="left:569px;top:898px;width:208px;background:#404040"></div>
<div class="bg" style="left:779px;top:898px;width:78px;background:#404040"></div>
<div class="bg" style="left:859px;top:898px;width:78px;background:#404040"></div>
<div class="bg" style="left:939px;top:898px;width:78px;background:#404040"></div>
<svg class="ic" style="left:554.5px;top:899px" width="13" height="14" viewBox="0 0 13 14"><circle cx="6.5" cy="7.3" r="5.9" fill="#181818" opacity="0.9"/><circle cx="6.5" cy="6.8" r="5.7" fill="#b4b4b4"/><circle cx="6.5" cy="7.1" r="4.9" fill="url(#gclk)"/><path d="M1.9 5.4 A4.9 4.9 0 0 1 11.1 5.4" fill="none" stroke="#808080" stroke-width="1"/><path d="M6.5 7.2 L4.2 6.2" stroke="#8c6a4a" stroke-width="0.9"/><path d="M6.5 7.2 L9.8 7.4" stroke="#909090" stroke-width="0.7"/></svg>
<div class="t" style="left:570px;top:898px">Performance Limit - Max Operating Volt...</div>
<div class="v" style="left:738px;top:898px">No</div>
<div class="v" style="left:818px;top:898px">No</div>
<div class="bg" style="left:569px;top:915px;width:208px;background:#494949"></div>
<div class="bg" style="left:779px;top:915px;width:78px;background:#494949"></div>
<div class="bg" style="left:859px;top:915px;width:78px;background:#494949"></div>
<div class="bg" style="left:939px;top:915px;width:78px;background:#494949"></div>
<svg class="ic" style="left:554.5px;top:916px" width="13" height="14" viewBox="0 0 13 14"><circle cx="6.5" cy="7.3" r="5.9" fill="#181818" opacity="0.9"/><circle cx="6.5" cy="6.8" r="5.7" fill="#b4b4b4"/><circle cx="6.5" cy="7.1" r="4.9" fill="url(#gclk)"/><path d="M1.9 5.4 A4.9 4.9 0 0 1 11.1 5.4" fill="none" stroke="#808080" stroke-width="1"/><path d="M6.5 7.2 L4.2 6.2" stroke="#8c6a4a" stroke-width="0.9"/><path d="M6.5 7.2 L9.8 7.4" stroke="#909090" stroke-width="0.7"/></svg>
<div class="t" style="left:570px;top:915px">Performance Limit - Utilization</div>
<div class="v" style="left:738px;top:915px">No</div>
<div class="v" style="left:818px;top:915px">No</div>
<div class="v" style="left:898px;top:915px">Yes</div>
<div class="bg" style="left:569px;top:932px;width:208px;background:#404040"></div>
<div class="bg" style="left:779px;top:932px;width:78px;background:#404040"></div>
<div class="bg" style="left:859px;top:932px;width:78px;background:#404040"></div>
<div class="bg" style="left:939px;top:932px;width:78px;background:#404040"></div>
<svg class="ic" style="left:554.5px;top:933px" width="13" height="14" viewBox="0 0 13 14"><circle cx="6.5" cy="7.3" r="5.9" fill="#181818" opacity="0.9"/><circle cx="6.5" cy="6.8" r="5.7" fill="#b4b4b4"/><circle cx="6.5" cy="7.1" r="4.9" fill="url(#gclk)"/><path d="M1.9 5.4 A4.9 4.9 0 0 1 11.1 5.4" fill="none" stroke="#808080" stroke-width="1"/><path d="M6.5 7.2 L4.2 6.2" stroke="#8c6a4a" stroke-width="0.9"/><path d="M6.5 7.2 L9.8 7.4" stroke="#909090" stroke-width="0.7"/></svg>
<div class="t" style="left:570px;top:932px">Performance Limit - SLI GPUBoost Sync</div>
<div class="v" style="left:738px;top:932px">No</div>
<div class="v" style="left:818px;top:932px">No</div>
<div class="bg" style="left:553px;top:949px;width:224px;background:#494949"></div>
<div class="bg" style="left:779px;top:949px;width:78px;background:#494949"></div>
<div class="bg" style="left:859px;top:949px;width:78px;background:#494949"></div>
<div class="bg" style="left:939px;top:949px;width:78px;background:#494949"></div>
<svg class="ic" style="left:538.5px;top:950px" width="13" height="14" viewBox="0 0 13 14"><circle cx="6.5" cy="7.3" r="5.9" fill="#181818" opacity="0.9"/><circle cx="6.5" cy="6.8" r="5.7" fill="#b4b4b4"/><circle cx="6.5" cy="7.1" r="4.9" fill="url(#gclk)"/><path d="M1.9 5.4 A4.9 4.9 0 0 1 11.1 5.4" fill="none" stroke="#808080" stroke-width="1"/><path d="M6.5 7.2 L4.2 6.2" stroke="#8c6a4a" stroke-width="0.9"/><path d="M6.5 7.2 L9.8 7.4" stroke="#909090" stroke-width="0.7"/></svg>
<div class="t" style="left:554px;top:949px">GPU Memory Allocated</div>
<div class="v" style="left:738px;top:949px">365 MB</div>
<div class="v" style="left:818px;top:949px">151 MB</div>
<div class="v" style="left:898px;top:949px">370 MB</div>
<div class="bg" style="left:553px;top:966px;width:224px;background:#404040"></div>
<div class="bg" style="left:779px;top:966px;width:78px;background:#404040"></div>
<div class="bg" style="left:859px;top:966px;width:78px;background:#404040"></div>
<div class="bg" style="left:939px;top:966px;width:78px;background:#404040"></div>
<svg class="ic" style="left:538.5px;top:967px" width="13" height="14" viewBox="0 0 13 14"><circle cx="6.5" cy="7.3" r="5.9" fill="#181818" opacity="0.9"/><circle cx="6.5" cy="6.8" r="5.7" fill="#b4b4b4"/><circle cx="6.5" cy="7.1" r="4.9" fill="url(#gclk)"/><path d="M1.9 5.4 A4.9 4.9 0 0 1 11.1 5.4" fill="none" stroke="#808080" stroke-width="1"/><path d="M6.5 7.2 L4.2 6.2" stroke="#8c6a4a" stroke-width="0.9"/><path d="M6.5 7.2 L9.8 7.4" stroke="#909090" stroke-width="0.7"/></svg>
<div class="t" style="left:554px;top:966px">PCIe Link Speed</div>
<div class="v" style="left:738px;top:966px">8.0 GT/s</div>
<div class="v" style="left:818px;top:966px">2.5 GT/s</div>
<div class="v" style="left:898px;top:966px">8.0 GT/s</div>
<div style="position:absolute;left:267px;top:32px;width:1px;height:962px;background:#5c5c5c"></div>
<div style="position:absolute;left:268px;top:49px;width:1px;height:945px;background:#36404e"></div>
<div style="position:absolute;left:347px;top:32px;width:1px;height:962px;background:#5c5c5c"></div>
<div style="position:absolute;left:348px;top:49px;width:1px;height:945px;background:#36404e"></div>
<div style="position:absolute;left:427px;top:32px;width:1px;height:962px;background:#5c5c5c"></div>
<div style="position:absolute;left:428px;top:49px;width:1px;height:945px;background:#36404e"></div>
<div style="position:absolute;left:507px;top:32px;width:1px;height:962px;background:#5c5c5c"></div>
<div style="position:absolute;left:508px;top:49px;width:1px;height:945px;background:#36404e"></div>
<div style="position:absolute;left:777px;top:32px;width:1px;height:962px;background:#5c5c5c"></div>
<div style="position:absolute;left:778px;top:48px;width:1px;height:946px;background:#36404e"></div>
<div style="position:absolute;left:857px;top:32px;width:1px;height:962px;background:#5c5c5c"></div>
<div style="position:absolute;left:858px;top:48px;width:1px;height:946px;background:#36404e"></div>
<div style="position:absolute;left:937px;top:32px;width:1px;height:962px;background:#5c5c5c"></div>
<div style="position:absolute;left:938px;top:48px;width:1px;height:946px;background:#36404e"></div>
<div style="position:absolute;left:1017px;top:32px;width:1px;height:962px;background:#5c5c5c"></div>
<div style="position:absolute;left:1018px;top:48px;width:1px;height:946px;background:#36404e"></div>
<div style="position:absolute;left:513px;top:30px;width:512px;height:1px;background:#6c6c6c"></div>
<div class="tbb" style="left:1px"><svg width="40" height="33" viewBox="0 0 40 33" style="position:absolute;left:0;top:0"><path d="M4 16.8 L11.8 8.7 L11.8 13.2 L19 13.2 L19 21.6 L11.8 21.6 L11.8 26.1 Z" fill="#3996e2" stroke="#e4eef6" stroke-width="0.9" stroke-dasharray="1.2 0.6"/><path d="M36.2 16.8 L27.8 8.7 L27.8 13.2 L21.1 13.2 L21.1 21.6 L27.8 21.6 L27.8 26.1 Z" fill="#3f9ce6" stroke="#e4eef6" stroke-width="0.9" stroke-dasharray="1.2 0.6"/></svg></div>
<div class="tbb" style="left:45px"><svg width="40" height="33" viewBox="0 0 40 33" style="position:absolute;left:0;top:0"><path d="M19.1 16.8 L10.8 8.7 L10.8 13.2 L4.1 13.2 L4.1 21.6 L10.8 21.6 L10.8 26.1 Z" fill="#3996e2" stroke="#e4eef6" stroke-width="0.9" stroke-dasharray="1.2 0.6"/><path d="M19.1 16.8 L26.8 8.7 L26.8 13.2 L33.9 13.2 L33.9 21.6 L26.8 21.6 L26.8 26.1 Z" fill="#3f9ce6" stroke="#e4eef6" stroke-width="0.9" stroke-dasharray="1.2 0.6"/></svg></div>
<div class="tbb" style="left:672px"><svg width="40" height="33" viewBox="0 0 40 33" style="position:absolute;left:0;top:0"><defs><linearGradient id="gscr" x1="0" y1="0" x2="1" y2="0.3"><stop offset="0" stop-color="#0010c8"/><stop offset="0.45" stop-color="#1a3ae0"/><stop offset="0.5" stop-color="#b8c8f8"/><stop offset="1" stop-color="#4a6af0"/></linearGradient></defs><ellipse cx="20" cy="28.7" rx="8.5" ry="3.6" fill="#c8c8c8"/><path d="M8.5 1.4 L33.4 4.2 L31.5 25.9 L7.5 20.5 Z" fill="#e8e4dc"/><path d="M10.3 3.4 L31.6 5.9 L30 23.6 L9.4 19 Z" fill="url(#gscr)"/><circle cx="12.2" cy="17" r="7" fill="#b8c8dc" stroke="#d8dde4" stroke-width="1.6" opacity="0.95"/><path d="M7 16 H17" stroke="#8aa0c8" stroke-width="2"/><path d="M17.4 23.5 L23 30.5" stroke="#c07a38" stroke-width="2.6"/></svg></div>
<div class="tbb" style="left:725px"><svg width="40" height="33" viewBox="0 0 40 33" style="position:absolute;left:0;top:0"><defs><linearGradient id="gscr2" x1="0" y1="0" x2="1" y2="1"><stop offset="0" stop-color="#8ad0ff"/><stop offset="0.5" stop-color="#2a8ae8"/><stop offset="1" stop-color="#1a6ad0"/></linearGradient></defs><path d="M19.5 8.5 H29.4 V15.5" stroke="#8a9098" stroke-width="1.4" fill="none"/><ellipse cx="12.4" cy="17.2" rx="5" ry="2.2" fill="#b8b8b8"/><path d="M5.4 2.4 L19.5 3.8 L18.6 14.6 L4.4 12.2 Z" fill="url(#gscr2)" stroke="#dfe6ee" stroke-width="0.8"/><ellipse cx="27" cy="30.2" rx="5" ry="2.2" fill="#b8b8b8"/><path d="M20.9 15.5 L34.6 17 L33.2 28.3 L19 25.9 Z" fill="url(#gscr2)" stroke="#dfe6ee" stroke-width="0.8"/></svg></div>
<div style="position:absolute;left:792px;top:1010px;font-size:11px;line-height:16px;color:#f4f4f4;letter-spacing:0.45px">0:08:55</div>
<div class="tbb" style="left:836px"><svg width="40" height="33" viewBox="0 0 40 33" style="position:absolute;left:0;top:0"><circle cx="20" cy="16.5" r="14.8" fill="#f8f8f8"/><rect x="19.1" y="2.6" width="1.8" height="3.6" fill="#1a1a1a" transform="rotate(0 20 16.5)"/><rect x="19.1" y="2.6" width="1.8" height="2.4" fill="#1a1a1a" transform="rotate(30 20 16.5)"/><rect x="19.1" y="2.6" width="1.8" height="2.4" fill="#1a1a1a" transform="rotate(60 20 16.5)"/><rect x="19.1" y="2.6" width="1.8" height="3.6" fill="#1a1a1a" transform="rotate(90 20 16.5)"/><rect x="19.1" y="2.6" width="1.8" height="2.4" fill="#1a1a1a" transform="rotate(120 20 16.5)"/><rect x="19.1" y="2.6" width="1.8" height="2.4" fill="#1a1a1a" transform="rotate(150 20 16.5)"/><rect x="19.1" y="2.6" width="1.8" height="3.6" fill="#1a1a1a" transform="rotate(180 20 16.5)"/><rect x="19.1" y="2.6" width="1.8" height="2.4" fill="#1a1a1a" transform="rotate(210 20 16.5)"/><rect x="19.1" y="2.6" width="1.8" height="2.4" fill="#1a1a1a" transform="rotate(240 20 16.5)"/><rect x="19.1" y="2.6" width="1.8" height="3.6" fill="#1a1a1a" transform="rotate(270 20 16.5)"/><rect x="19.1" y="2.6" width="1.8" height="2.4" fill="#1a1a1a" transform="rotate(300 20 16.5)"/><rect x="19.1" y="2.6" width="1.8" height="2.4" fill="#1a1a1a" transform="rotate(330 20 16.5)"/><path d="M20.6 16.5 L22 4.2" stroke="#111" stroke-width="1.4"/><path d="M19 16.5 H28" stroke="#111" stroke-width="2.2"/></svg></div>
<div class="tbb" style="left:881px"><svg width="40" height="33" viewBox="0 0 40 33" style="position:absolute;left:0;top:0"><path d="M9.5 3 L25 3 L30 8 L30 28.5 L9.5 28.5 Z" fill="#f0f0f0" stroke="#c8c8c8" stroke-width="0.8"/><path d="M25 3 L25 8 L30 8" fill="#d8d8d8" stroke="#c0c0c0" stroke-width="0.6"/><path d="M13 7.5 H27" stroke="#c4c8cc" stroke-width="0.7"/><path d="M13 9.7 H27" stroke="#c4c8cc" stroke-width="0.7"/><path d="M13 11.9 H27" stroke="#c4c8cc" stroke-width="0.7"/><path d="M13 14.1 H27" stroke="#c4c8cc" stroke-width="0.7"/><path d="M13 16.3 H27" stroke="#c4c8cc" stroke-width="0.7"/><path d="M13 18.5 H27" stroke="#c4c8cc" stroke-width="0.7"/><path d="M13 20.7 H27" stroke="#c4c8cc" stroke-width="0.7"/><path d="M13 22.9 H27" stroke="#c4c8cc" stroke-width="0.7"/><path d="M13 25.1 H27" stroke="#c4c8cc" stroke-width="0.7"/><path d="M18 7 V26 M22 7 V26" stroke="#c8ccd0" stroke-width="0.6"/><path d="M29.5 20.5 V32 M23.8 26.2 H35.2" stroke="#f0f8e8" stroke-width="5.2"/><path d="M29.5 21.5 V31 M24.8 26.2 H34.2" stroke="#86c43a" stroke-width="3.4"/></svg></div>
<div class="tbb" style="left:927px"><svg width="40" height="33" viewBox="0 0 40 33" style="position:absolute;left:0;top:0"><defs><radialGradient id="ggear" cx="0.4" cy="0.35" r="0.8"><stop offset="0" stop-color="#f0f4f4"/><stop offset="0.6" stop-color="#b8c0c4"/><stop offset="1" stop-color="#8a9498"/></radialGradient></defs><path d="M17.36 1.53 L22.64 1.53 L23.22 5.98 L16.78 5.98 Z M28.72 4.05 L32.45 7.78 L29.71 11.34 L25.16 6.79 Z M34.97 13.86 L34.97 19.14 L30.52 19.72 L30.52 13.28 Z M32.45 25.22 L28.72 28.95 L25.16 26.21 L29.71 21.66 Z M22.64 31.47 L17.36 31.47 L16.78 27.02 L23.22 27.02 Z M11.28 28.95 L7.55 25.22 L10.29 21.66 L14.84 26.21 Z M5.03 19.14 L5.03 13.86 L9.48 13.28 L9.48 19.72 Z M7.55 7.78 L11.28 4.05 L14.84 6.79 L10.29 11.34 Z " fill="url(#ggear)"/><circle cx="20" cy="16.5" r="12" fill="url(#ggear)"/><circle cx="20" cy="16.5" r="8.3" fill="#a8b0b4"/><circle cx="20" cy="16.5" r="6.2" fill="#2e2e2e"/></svg></div>
<div class="tbb" style="left:974px"><svg width="40" height="33" viewBox="0 0 40 33" style="position:absolute;left:0;top:0"><defs><linearGradient id="gx" x1="0" y1="0" x2="1" y2="1"><stop offset="0" stop-color="#1f86cc"/><stop offset="1" stop-color="#5cbcec"/></linearGradient></defs><path d="M12 8.8 L28 24.8 M28 8.8 L12 24.8" stroke="url(#gx)" stroke-width="7.6"/></svg></div>
<div style="position:absolute;left:1029px;top:0px;width:780px;height:172px;background:#393939"></div>
<div style="position:absolute;left:1029px;top:0px;width:780px;height:30px;background:#2b2b2b"></div>
<div class="gt" style="left:1037px;top:7px">Average Effective CPU Clock</div>
<div style="position:absolute;left:1789px;top:7px;width:19px;height:19px;background:#282828"></div>
<div class="gx" style="left:1796px;top:8px">x</div>
<svg style="position:absolute;left:1029px;top:30px" width="710" height="141" viewBox="1029 30 710 141"><rect x="1029" y="30" width="710" height="141" fill="#c8c8c8"/><rect x="1029" y="30" width="710" height="140" fill="#a8a8a8"/><rect x="1030" y="31" width="709" height="139" fill="#808080"/><path d="M1030 170 L1030 167 L1031 167 L1031 167 L1034 167 L1034 166 L1037 166 L1037 166 L1040 166 L1040 167 L1043 167 L1043 167 L1046 167 L1046 167 L1048 167 L1048 167 L1051 167 L1051 167 L1054 167 L1054 166 L1057 166 L1057 165 L1060 165 L1060 166 L1063 166 L1063 167 L1066 167 L1066 166 L1069 166 L1069 167 L1072 167 L1072 167 L1075 167 L1075 167 L1078 167 L1078 167 L1080 167 L1080 167 L1083 167 L1083 100 L1086 100 L1086 46 L1089 46 L1089 61 L1092 61 L1092 76 L1095 76 L1095 83 L1098 83 L1098 85 L1101 85 L1101 89 L1104 89 L1104 89 L1106 89 L1106 71 L1109 71 L1109 60 L1112 60 L1112 74 L1115 74 L1115 75 L1118 75 L1118 82 L1121 82 L1121 87 L1124 87 L1124 88 L1127 88 L1127 88 L1130 88 L1130 89 L1133 89 L1133 61 L1136 61 L1136 77 L1138 77 L1138 80 L1141 80 L1141 81 L1144 81 L1144 88 L1147 88 L1147 89 L1150 89 L1150 85 L1153 85 L1153 58 L1156 58 L1156 74 L1159 74 L1159 78 L1162 78 L1162 82 L1164 82 L1164 87 L1167 87 L1167 88 L1170 88 L1170 88 L1173 88 L1173 88 L1176 88 L1176 60 L1179 60 L1179 75 L1182 75 L1182 78 L1185 78 L1185 82 L1188 82 L1188 86 L1191 86 L1191 90 L1194 90 L1194 79 L1196 79 L1196 64 L1199 64 L1199 81 L1202 81 L1202 76 L1205 76 L1205 84 L1208 84 L1208 85 L1211 85 L1211 89 L1214 89 L1214 90 L1217 90 L1217 71 L1220 71 L1220 62 L1222 62 L1222 79 L1225 79 L1225 78 L1228 78 L1228 84 L1231 84 L1231 86 L1234 86 L1234 89 L1237 89 L1237 85 L1240 85 L1240 65 L1243 65 L1243 80 L1246 80 L1246 78 L1249 78 L1249 81 L1252 81 L1252 87 L1254 87 L1254 89 L1257 89 L1257 90 L1260 90 L1260 77 L1263 77 L1263 62 L1266 62 L1266 76 L1269 76 L1269 77 L1272 77 L1272 82 L1275 82 L1275 85 L1278 85 L1278 88 L1280 88 L1280 90 L1283 90 L1283 77 L1286 77 L1286 64 L1289 64 L1289 78 L1292 78 L1292 77 L1295 77 L1295 83 L1298 83 L1298 88 L1301 88 L1301 90 L1304 90 L1304 76 L1307 76 L1307 64 L1310 64 L1310 82 L1312 82 L1312 76 L1315 76 L1315 82 L1318 82 L1318 86 L1321 86 L1321 88 L1324 88 L1324 89 L1327 89 L1327 70 L1330 70 L1330 60 L1333 60 L1333 75 L1336 75 L1336 78 L1338 78 L1338 84 L1341 84 L1341 87 L1344 87 L1344 89 L1347 89 L1347 89 L1350 89 L1350 86 L1353 86 L1353 63 L1356 63 L1356 81 L1359 81 L1359 79 L1362 79 L1362 82 L1365 82 L1365 86 L1368 86 L1368 88 L1370 88 L1370 74 L1373 74 L1373 57 L1376 57 L1376 73 L1379 73 L1379 75 L1382 75 L1382 81 L1385 81 L1385 85 L1388 85 L1388 88 L1391 88 L1391 89 L1394 89 L1394 87 L1396 87 L1396 62 L1399 62 L1399 76 L1402 76 L1402 76 L1405 76 L1405 82 L1408 82 L1408 86 L1411 86 L1411 88 L1414 88 L1414 79 L1417 79 L1417 57 L1420 57 L1420 71 L1423 71 L1423 77 L1426 77 L1426 82 L1428 82 L1428 87 L1431 87 L1431 88 L1434 88 L1434 88 L1437 88 L1437 73 L1440 73 L1440 61 L1443 61 L1443 75 L1446 75 L1446 78 L1449 78 L1449 84 L1452 84 L1452 88 L1454 88 L1454 89 L1457 89 L1457 84 L1460 84 L1460 61 L1463 61 L1463 78 L1466 78 L1466 77 L1469 77 L1469 82 L1472 82 L1472 87 L1475 87 L1475 90 L1478 90 L1478 90 L1481 90 L1481 89 L1484 89 L1484 63 L1486 63 L1486 78 L1489 78 L1489 78 L1492 78 L1492 82 L1495 82 L1495 85 L1498 85 L1498 88 L1501 88 L1501 89 L1504 89 L1504 88 L1507 88 L1507 65 L1510 65 L1510 80 L1512 80 L1512 80 L1515 80 L1515 84 L1518 84 L1518 88 L1521 88 L1521 89 L1524 89 L1524 74 L1527 74 L1527 62 L1530 62 L1530 79 L1533 79 L1533 79 L1536 79 L1536 82 L1539 82 L1539 87 L1542 87 L1542 90 L1544 90 L1544 88 L1547 88 L1547 89 L1550 89 L1550 63 L1553 63 L1553 80 L1556 80 L1556 77 L1559 77 L1559 82 L1562 82 L1562 87 L1565 87 L1565 89 L1568 89 L1568 90 L1570 90 L1570 77 L1573 77 L1573 65 L1576 65 L1576 81 L1579 81 L1579 76 L1582 76 L1582 81 L1585 81 L1585 85 L1588 85 L1588 90 L1591 90 L1591 90 L1594 90 L1594 65 L1597 65 L1597 81 L1600 81 L1600 77 L1602 77 L1602 83 L1605 83 L1605 85 L1608 85 L1608 88 L1611 88 L1611 90 L1614 90 L1614 87 L1617 87 L1617 60 L1620 60 L1620 77 L1623 77 L1623 79 L1626 79 L1626 82 L1628 82 L1628 86 L1631 86 L1631 89 L1634 89 L1634 78 L1637 78 L1637 57 L1640 57 L1640 75 L1643 75 L1643 77 L1646 77 L1646 82 L1649 82 L1649 87 L1652 87 L1652 90 L1655 90 L1655 89 L1658 89 L1658 80 L1660 80 L1660 61 L1663 61 L1663 75 L1666 75 L1666 77 L1669 77 L1669 82 L1672 82 L1672 85 L1675 85 L1675 90 L1678 90 L1678 88 L1681 88 L1681 61 L1684 61 L1684 76 L1686 76 L1686 78 L1689 78 L1689 83 L1692 83 L1692 87 L1695 87 L1695 88 L1698 88 L1698 89 L1701 89 L1701 84 L1704 84 L1704 61 L1707 61 L1707 77 L1710 77 L1710 79 L1713 79 L1713 84 L1716 84 L1716 86 L1718 86 L1718 89 L1721 89 L1721 89 L1724 89 L1724 89 L1727 89 L1727 60 L1730 60 L1730 76 L1733 76 L1733 77 L1736 77 L1736 84 L1738 84 L1738 170 Z" fill="#99ff99"/><path d="M1048.5 31V170M1068.5 31V170M1088.5 31V170M1108.5 31V170M1128.5 31V170M1148.5 31V170M1168.5 31V170M1188.5 31V170M1208.5 31V170M1228.5 31V170M1248.5 31V170M1268.5 31V170M1288.5 31V170M1308.5 31V170M1328.5 31V170M1348.5 31V170M1368.5 31V170M1388.5 31V170M1408.5 31V170M1428.5 31V170M1448.5 31V170M1468.5 31V170M1488.5 31V170M1508.5 31V170M1528.5 31V170M1548.5 31V170M1568.5 31V170M1588.5 31V170M1608.5 31V170M1628.5 31V170M1648.5 31V170M1668.5 31V170M1688.5 31V170M1708.5 31V170M1728.5 31V170M1030 169.5H1738M1030 149.5H1738M1030 129.5H1738M1030 109.5H1738M1030 89.5H1738M1030 69.5H1738M1030 49.5H1738" stroke="#a9c6ee" stroke-width="1" fill="none"/><path d="M1030 167 L1031 167 L1031 167 L1034 167 L1034 166 L1037 166 L1037 166 L1040 166 L1040 167 L1043 167 L1043 167 L1046 167 L1046 167 L1048 167 L1048 167 L1051 167 L1051 167 L1054 167 L1054 166 L1057 166 L1057 165 L1060 165 L1060 166 L1063 166 L1063 167 L1066 167 L1066 166 L1069 166 L1069 167 L1072 167 L1072 167 L1075 167 L1075 167 L1078 167 L1078 167 L1080 167 L1080 167 L1083 167 L1083 100 L1086 100 L1086 46 L1089 46 L1089 61 L1092 61 L1092 76 L1095 76 L1095 83 L1098 83 L1098 85 L1101 85 L1101 89 L1104 89 L1104 89 L1106 89 L1106 71 L1109 71 L1109 60 L1112 60 L1112 74 L1115 74 L1115 75 L1118 75 L1118 82 L1121 82 L1121 87 L1124 87 L1124 88 L1127 88 L1127 88 L1130 88 L1130 89 L1133 89 L1133 61 L1136 61 L1136 77 L1138 77 L1138 80 L1141 80 L1141 81 L1144 81 L1144 88 L1147 88 L1147 89 L1150 89 L1150 85 L1153 85 L1153 58 L1156 58 L1156 74 L1159 74 L1159 78 L1162 78 L1162 82 L1164 82 L1164 87 L1167 87 L1167 88 L1170 88 L1170 88 L1173 88 L1173 88 L1176 88 L1176 60 L1179 60 L1179 75 L1182 75 L1182 78 L1185 78 L1185 82 L1188 82 L1188 86 L1191 86 L1191 90 L1194 90 L1194 79 L1196 79 L1196 64 L1199 64 L1199 81 L1202 81 L1202 76 L1205 76 L1205 84 L1208 84 L1208 85 L1211 85 L1211 89 L1214 89 L1214 90 L1217 90 L1217 71 L1220 71 L1220 62 L1222 62 L1222 79 L1225 79 L1225 78 L1228 78 L1228 84 L1231 84 L1231 86 L1234 86 L1234 89 L1237 89 L1237 85 L1240 85 L1240 65 L1243 65 L1243 80 L1246 80 L1246 78 L1249 78 L1249 81 L1252 81 L1252 87 L1254 87 L1254 89 L1257 89 L1257 90 L1260 90 L1260 77 L1263 77 L1263 62 L1266 62 L1266 76 L1269 76 L1269 77 L1272 77 L1272 82 L1275 82 L1275 85 L1278 85 L1278 88 L1280 88 L1280 90 L1283 90 L1283 77 L1286 77 L1286 64 L1289 64 L1289 78 L1292 78 L1292 77 L1295 77 L1295 83 L1298 83 L1298 88 L1301 88 L1301 90 L1304 90 L1304 76 L1307 76 L1307 64 L1310 64 L1310 82 L1312 82 L1312 76 L1315 76 L1315 82 L1318 82 L1318 86 L1321 86 L1321 88 L1324 88 L1324 89 L1327 89 L1327 70 L1330 70 L1330 60 L1333 60 L1333 75 L1336 75 L1336 78 L1338 78 L1338 84 L1341 84 L1341 87 L1344 87 L1344 89 L1347 89 L1347 89 L1350 89 L1350 86 L1353 86 L1353 63 L1356 63 L1356 81 L1359 81 L1359 79 L1362 79 L1362 82 L1365 82 L1365 86 L1368 86 L1368 88 L1370 88 L1370 74 L1373 74 L1373 57 L1376 57 L1376 73 L1379 73 L1379 75 L1382 75 L1382 81 L1385 81 L1385 85 L1388 85 L1388 88 L1391 88 L1391 89 L1394 89 L1394 87 L1396 87 L1396 62 L1399 62 L1399 76 L1402 76 L1402 76 L1405 76 L1405 82 L1408 82 L1408 86 L1411 86 L1411 88 L1414 88 L1414 79 L1417 79 L1417 57 L1420 57 L1420 71 L1423 71 L1423 77 L1426 77 L1426 82 L1428 82 L1428 87 L1431 87 L1431 88 L1434 88 L1434 88 L1437 88 L1437 73 L1440 73 L1440 61 L1443 61 L1443 75 L1446 75 L1446 78 L1449 78 L1449 84 L1452 84 L1452 88 L1454 88 L1454 89 L1457 89 L1457 84 L1460 84 L1460 61 L1463 61 L1463 78 L1466 78 L1466 77 L1469 77 L1469 82 L1472 82 L1472 87 L1475 87 L1475 90 L1478 90 L1478 90 L1481 90 L1481 89 L1484 89 L1484 63 L1486 63 L1486 78 L1489 78 L1489 78 L1492 78 L1492 82 L1495 82 L1495 85 L1498 85 L1498 88 L1501 88 L1501 89 L1504 89 L1504 88 L1507 88 L1507 65 L1510 65 L1510 80 L1512 80 L1512 80 L1515 80 L1515 84 L1518 84 L1518 88 L1521 88 L1521 89 L1524 89 L1524 74 L1527 74 L1527 62 L1530 62 L1530 79 L1533 79 L1533 79 L1536 79 L1536 82 L1539 82 L1539 87 L1542 87 L1542 90 L1544 90 L1544 88 L1547 88 L1547 89 L1550 89 L1550 63 L1553 63 L1553 80 L1556 80 L1556 77 L1559 77 L1559 82 L1562 82 L1562 87 L1565 87 L1565 89 L1568 89 L1568 90 L1570 90 L1570 77 L1573 77 L1573 65 L1576 65 L1576 81 L1579 81 L1579 76 L1582 76 L1582 81 L1585 81 L1585 85 L1588 85 L1588 90 L1591 90 L1591 90 L1594 90 L1594 65 L1597 65 L1597 81 L1600 81 L1600 77 L1602 77 L1602 83 L1605 83 L1605 85 L1608 85 L1608 88 L1611 88 L1611 90 L1614 90 L1614 87 L1617 87 L1617 60 L1620 60 L1620 77 L1623 77 L1623 79 L1626 79 L1626 82 L1628 82 L1628 86 L1631 86 L1631 89 L1634 89 L1634 78 L1637 78 L1637 57 L1640 57 L1640 75 L1643 75 L1643 77 L1646 77 L1646 82 L1649 82 L1649 87 L1652 87 L1652 90 L1655 90 L1655 89 L1658 89 L1658 80 L1660 80 L1660 61 L1663 61 L1663 75 L1666 75 L1666 77 L1669 77 L1669 82 L1672 82 L1672 85 L1675 85 L1675 90 L1678 90 L1678 88 L1681 88 L1681 61 L1684 61 L1684 76 L1686 76 L1686 78 L1689 78 L1689 83 L1692 83 L1692 87 L1695 87 L1695 88 L1698 88 L1698 89 L1701 89 L1701 84 L1704 84 L1704 61 L1707 61 L1707 77 L1710 77 L1710 79 L1713 79 L1713 84 L1716 84 L1716 86 L1718 86 L1718 89 L1721 89 L1721 89 L1724 89 L1724 89 L1727 89 L1727 60 L1730 60 L1730 76 L1733 76 L1733 77 L1736 77 L1736 84 L1738 84" stroke="#00ff00" stroke-width="2" fill="none" stroke-linejoin="miter" stroke-linecap="square"/></svg>
<div class="box" style="top:30px"></div><div class="bt" style="top:30px">4500</div>
<div class="box" style="top:89px"></div><div class="bt" style="top:89px">3,524.2 MH:</div>
<div class="box" style="top:154px"></div><div class="bt" style="top:154px">0.0</div>
<div class="sq" style="left:1747px;top:73px;background:#2c382c;border-color:#b0b0b0"></div>
<div class="sq" style="left:1765px;top:73px;background:#808080"></div>
<div class="sq" style="left:1783px;top:73px;background:#a9c6ee"></div>
<div class="btn" style="left:1742px;top:123px;width:27px">Fit y</div>
<div class="btn" style="left:1771px;top:123px;width:28px">Reset</div>
<div style="position:absolute;left:1029px;top:181px;width:780px;height:172px;background:#393939"></div>
<div style="position:absolute;left:1029px;top:181px;width:780px;height:30px;background:#2b2b2b"></div>
<div style="position:absolute;left:1029px;top:181px;width:780px;height:1px;background:#3c4046"></div>
<div class="gt" style="left:1037px;top:188px">CPU Package Temp</div>
<div style="position:absolute;left:1789px;top:188px;width:19px;height:19px;background:#282828"></div>
<div class="gx" style="left:1796px;top:189px">x</div>
<svg style="position:absolute;left:1029px;top:211px" width="710" height="141" viewBox="1029 211 710 141"><rect x="1029" y="211" width="710" height="141" fill="#c8c8c8"/><rect x="1029" y="211" width="710" height="140" fill="#a8a8a8"/><rect x="1030" y="212" width="709" height="139" fill="#808080"/><path d="M1030 351 L1030 296 L1032 296 L1032 283 L1035 283 L1035 297 L1038 297 L1038 299 L1041 299 L1041 299 L1044 299 L1044 299 L1047 299 L1047 298 L1050 298 L1050 299 L1052 299 L1052 299 L1055 299 L1055 299 L1058 299 L1058 299 L1061 299 L1061 299 L1064 299 L1064 299 L1067 299 L1067 299 L1070 299 L1070 299 L1073 299 L1073 299 L1076 299 L1076 299 L1079 299 L1079 297 L1082 297 L1082 299 L1084 299 L1084 220 L1087 220 L1087 221 L1090 221 L1090 254 L1093 254 L1093 263 L1096 263 L1096 265 L1099 265 L1099 267 L1102 267 L1102 269 L1105 269 L1105 267 L1108 267 L1108 223 L1110 223 L1110 240 L1113 240 L1113 259 L1116 259 L1116 263 L1119 263 L1119 263 L1122 263 L1122 265 L1125 265 L1125 265 L1128 265 L1128 263 L1131 263 L1131 221 L1134 221 L1134 242 L1137 242 L1137 252 L1140 252 L1140 257 L1142 257 L1142 260 L1145 260 L1145 260 L1148 260 L1148 260 L1151 260 L1151 222 L1154 222 L1154 239 L1157 239 L1157 253 L1160 253 L1160 254 L1163 254 L1163 257 L1166 257 L1166 258 L1168 258 L1168 258 L1171 258 L1171 257 L1174 257 L1174 235 L1177 235 L1177 256 L1180 256 L1180 249 L1183 249 L1183 250 L1186 250 L1186 254 L1189 254 L1189 254 L1192 254 L1192 254 L1195 254 L1195 220 L1198 220 L1198 240 L1200 240 L1200 246 L1203 246 L1203 251 L1206 251 L1206 253 L1209 253 L1209 254 L1212 254 L1212 254 L1215 254 L1215 250 L1218 250 L1218 219 L1221 219 L1221 237 L1224 237 L1224 248 L1226 248 L1226 251 L1229 251 L1229 252 L1232 252 L1232 253 L1235 253 L1235 253 L1238 253 L1238 220 L1241 220 L1241 240 L1244 240 L1244 246 L1247 246 L1247 249 L1250 249 L1250 252 L1253 252 L1253 252 L1256 252 L1256 252 L1258 252 L1258 250 L1261 250 L1261 227 L1264 227 L1264 221 L1267 221 L1267 226 L1270 226 L1270 234 L1273 234 L1273 239 L1276 239 L1276 239 L1279 239 L1279 243 L1282 243 L1282 240 L1284 240 L1284 230 L1287 230 L1287 221 L1290 221 L1290 228 L1293 228 L1293 239 L1296 239 L1296 241 L1299 241 L1299 243 L1302 243 L1302 246 L1305 246 L1305 226 L1308 226 L1308 219 L1311 219 L1311 226 L1314 226 L1314 237 L1316 237 L1316 240 L1319 240 L1319 242 L1322 242 L1322 244 L1325 244 L1325 240 L1328 240 L1328 228 L1331 228 L1331 220 L1334 220 L1334 225 L1337 225 L1337 238 L1340 238 L1340 241 L1342 241 L1342 243 L1345 243 L1345 246 L1348 246 L1348 241 L1351 241 L1351 228 L1354 228 L1354 222 L1357 222 L1357 227 L1360 227 L1360 238 L1363 238 L1363 240 L1366 240 L1366 242 L1369 242 L1369 245 L1372 245 L1372 227 L1374 227 L1374 220 L1377 220 L1377 225 L1380 225 L1380 238 L1383 238 L1383 241 L1386 241 L1386 242 L1389 242 L1389 245 L1392 245 L1392 242 L1395 242 L1395 230 L1398 230 L1398 221 L1400 221 L1400 228 L1403 228 L1403 237 L1406 237 L1406 240 L1409 240 L1409 241 L1412 241 L1412 245 L1415 245 L1415 231 L1418 231 L1418 222 L1421 222 L1421 228 L1424 228 L1424 237 L1427 237 L1427 240 L1430 240 L1430 243 L1432 243 L1432 246 L1435 246 L1435 242 L1438 242 L1438 230 L1441 230 L1441 221 L1444 221 L1444 221 L1447 221 L1447 238 L1450 238 L1450 241 L1453 241 L1453 244 L1456 244 L1456 246 L1458 246 L1458 229 L1461 229 L1461 222 L1464 222 L1464 228 L1467 228 L1467 236 L1470 236 L1470 239 L1473 239 L1473 241 L1476 241 L1476 244 L1479 244 L1479 242 L1482 242 L1482 230 L1485 230 L1485 221 L1488 221 L1488 224 L1490 224 L1490 238 L1493 238 L1493 241 L1496 241 L1496 244 L1499 244 L1499 246 L1502 246 L1502 243 L1505 243 L1505 229 L1508 229 L1508 222 L1511 222 L1511 227 L1514 227 L1514 236 L1516 236 L1516 238 L1519 238 L1519 240 L1522 240 L1522 244 L1525 244 L1525 230 L1528 230 L1528 220 L1531 220 L1531 224 L1534 224 L1534 235 L1537 235 L1537 239 L1540 239 L1540 241 L1543 241 L1543 243 L1546 243 L1546 241 L1548 241 L1548 229 L1551 229 L1551 220 L1554 220 L1554 225 L1557 225 L1557 238 L1560 238 L1560 242 L1563 242 L1563 242 L1566 242 L1566 246 L1569 246 L1569 243 L1572 243 L1572 231 L1574 231 L1574 220 L1577 220 L1577 228 L1580 228 L1580 239 L1583 239 L1583 242 L1586 242 L1586 244 L1589 244 L1589 247 L1592 247 L1592 232 L1595 232 L1595 221 L1598 221 L1598 224 L1601 224 L1601 237 L1604 237 L1604 240 L1606 240 L1606 242 L1609 242 L1609 245 L1612 245 L1612 241 L1615 241 L1615 226 L1618 226 L1618 219 L1621 219 L1621 225 L1624 225 L1624 239 L1627 239 L1627 242 L1630 242 L1630 244 L1632 244 L1632 247 L1635 247 L1635 231 L1638 231 L1638 221 L1641 221 L1641 225 L1644 225 L1644 238 L1647 238 L1647 241 L1650 241 L1650 243 L1653 243 L1653 246 L1656 246 L1656 243 L1659 243 L1659 228 L1662 228 L1662 226 L1664 226 L1664 231 L1667 231 L1667 237 L1670 237 L1670 240 L1673 240 L1673 242 L1676 242 L1676 245 L1679 245 L1679 229 L1682 229 L1682 220 L1685 220 L1685 224 L1688 224 L1688 239 L1690 239 L1690 241 L1693 241 L1693 243 L1696 243 L1696 247 L1699 247 L1699 242 L1702 242 L1702 230 L1705 230 L1705 225 L1708 225 L1708 229 L1711 229 L1711 238 L1714 238 L1714 242 L1717 242 L1717 243 L1720 243 L1720 247 L1722 247 L1722 243 L1725 243 L1725 229 L1728 229 L1728 223 L1731 223 L1731 227 L1734 227 L1734 236 L1737 236 L1737 238 L1738 238 L1738 351 Z" fill="#ff9999"/><path d="M1040.5 212V351M1060.5 212V351M1080.5 212V351M1100.5 212V351M1120.5 212V351M1140.5 212V351M1160.5 212V351M1180.5 212V351M1200.5 212V351M1220.5 212V351M1240.5 212V351M1260.5 212V351M1280.5 212V351M1300.5 212V351M1320.5 212V351M1340.5 212V351M1360.5 212V351M1380.5 212V351M1400.5 212V351M1420.5 212V351M1440.5 212V351M1460.5 212V351M1480.5 212V351M1500.5 212V351M1520.5 212V351M1540.5 212V351M1560.5 212V351M1580.5 212V351M1600.5 212V351M1620.5 212V351M1640.5 212V351M1660.5 212V351M1680.5 212V351M1700.5 212V351M1720.5 212V351M1030 350.5H1738M1030 330.5H1738M1030 310.5H1738M1030 290.5H1738M1030 270.5H1738M1030 250.5H1738M1030 230.5H1738" stroke="#a9c6ee" stroke-width="1" fill="none"/><path d="M1030 296 L1032 296 L1032 283 L1035 283 L1035 297 L1038 297 L1038 299 L1041 299 L1041 299 L1044 299 L1044 299 L1047 299 L1047 298 L1050 298 L1050 299 L1052 299 L1052 299 L1055 299 L1055 299 L1058 299 L1058 299 L1061 299 L1061 299 L1064 299 L1064 299 L1067 299 L1067 299 L1070 299 L1070 299 L1073 299 L1073 299 L1076 299 L1076 299 L1079 299 L1079 297 L1082 297 L1082 299 L1084 299 L1084 220 L1087 220 L1087 221 L1090 221 L1090 254 L1093 254 L1093 263 L1096 263 L1096 265 L1099 265 L1099 267 L1102 267 L1102 269 L1105 269 L1105 267 L1108 267 L1108 223 L1110 223 L1110 240 L1113 240 L1113 259 L1116 259 L1116 263 L1119 263 L1119 263 L1122 263 L1122 265 L1125 265 L1125 265 L1128 265 L1128 263 L1131 263 L1131 221 L1134 221 L1134 242 L1137 242 L1137 252 L1140 252 L1140 257 L1142 257 L1142 260 L1145 260 L1145 260 L1148 260 L1148 260 L1151 260 L1151 222 L1154 222 L1154 239 L1157 239 L1157 253 L1160 253 L1160 254 L1163 254 L1163 257 L1166 257 L1166 258 L1168 258 L1168 258 L1171 258 L1171 257 L1174 257 L1174 235 L1177 235 L1177 256 L1180 256 L1180 249 L1183 249 L1183 250 L1186 250 L1186 254 L1189 254 L1189 254 L1192 254 L1192 254 L1195 254 L1195 220 L1198 220 L1198 240 L1200 240 L1200 246 L1203 246 L1203 251 L1206 251 L1206 253 L1209 253 L1209 254 L1212 254 L1212 254 L1215 254 L1215 250 L1218 250 L1218 219 L1221 219 L1221 237 L1224 237 L1224 248 L1226 248 L1226 251 L1229 251 L1229 252 L1232 252 L1232 253 L1235 253 L1235 253 L1238 253 L1238 220 L1241 220 L1241 240 L1244 240 L1244 246 L1247 246 L1247 249 L1250 249 L1250 252 L1253 252 L1253 252 L1256 252 L1256 252 L1258 252 L1258 250 L1261 250 L1261 227 L1264 227 L1264 221 L1267 221 L1267 226 L1270 226 L1270 234 L1273 234 L1273 239 L1276 239 L1276 239 L1279 239 L1279 243 L1282 243 L1282 240 L1284 240 L1284 230 L1287 230 L1287 221 L1290 221 L1290 228 L1293 228 L1293 239 L1296 239 L1296 241 L1299 241 L1299 243 L1302 243 L1302 246 L1305 246 L1305 226 L1308 226 L1308 219 L1311 219 L1311 226 L1314 226 L1314 237 L1316 237 L1316 240 L1319 240 L1319 242 L1322 242 L1322 244 L1325 244 L1325 240 L1328 240 L1328 228 L1331 228 L1331 220 L1334 220 L1334 225 L1337 225 L1337 238 L1340 238 L1340 241 L1342 241 L1342 243 L1345 243 L1345 246 L1348 246 L1348 241 L1351 241 L1351 228 L1354 228 L1354 222 L1357 222 L1357 227 L1360 227 L1360 238 L1363 238 L1363 240 L1366 240 L1366 242 L1369 242 L1369 245 L1372 245 L1372 227 L1374 227 L1374 220 L1377 220 L1377 225 L1380 225 L1380 238 L1383 238 L1383 241 L1386 241 L1386 242 L1389 242 L1389 245 L1392 245 L1392 242 L1395 242 L1395 230 L1398 230 L1398 221 L1400 221 L1400 228 L1403 228 L1403 237 L1406 237 L1406 240 L1409 240 L1409 241 L1412 241 L1412 245 L1415 245 L1415 231 L1418 231 L1418 222 L1421 222 L1421 228 L1424 228 L1424 237 L1427 237 L1427 240 L1430 240 L1430 243 L1432 243 L1432 246 L1435 246 L1435 242 L1438 242 L1438 230 L1441 230 L1441 221 L1444 221 L1444 221 L1447 221 L1447 238 L1450 238 L1450 241 L1453 241 L1453 244 L1456 244 L1456 246 L1458 246 L1458 229 L1461 229 L1461 222 L1464 222 L1464 228 L1467 228 L1467 236 L1470 236 L1470 239 L1473 239 L1473 241 L1476 241 L1476 244 L1479 244 L1479 242 L1482 242 L1482 230 L1485 230 L1485 221 L1488 221 L1488 224 L1490 224 L1490 238 L1493 238 L1493 241 L1496 241 L1496 244 L1499 244 L1499 246 L1502 246 L1502 243 L1505 243 L1505 229 L1508 229 L1508 222 L1511 222 L1511 227 L1514 227 L1514 236 L1516 236 L1516 238 L1519 238 L1519 240 L1522 240 L1522 244 L1525 244 L1525 230 L1528 230 L1528 220 L1531 220 L1531 224 L1534 224 L1534 235 L1537 235 L1537 239 L1540 239 L1540 241 L1543 241 L1543 243 L1546 243 L1546 241 L1548 241 L1548 229 L1551 229 L1551 220 L1554 220 L1554 225 L1557 225 L1557 238 L1560 238 L1560 242 L1563 242 L1563 242 L1566 242 L1566 246 L1569 246 L1569 243 L1572 243 L1572 231 L1574 231 L1574 220 L1577 220 L1577 228 L1580 228 L1580 239 L1583 239 L1583 242 L1586 242 L1586 244 L1589 244 L1589 247 L1592 247 L1592 232 L1595 232 L1595 221 L1598 221 L1598 224 L1601 224 L1601 237 L1604 237 L1604 240 L1606 240 L1606 242 L1609 242 L1609 245 L1612 245 L1612 241 L1615 241 L1615 226 L1618 226 L1618 219 L1621 219 L1621 225 L1624 225 L1624 239 L1627 239 L1627 242 L1630 242 L1630 244 L1632 244 L1632 247 L1635 247 L1635 231 L1638 231 L1638 221 L1641 221 L1641 225 L1644 225 L1644 238 L1647 238 L1647 241 L1650 241 L1650 243 L1653 243 L1653 246 L1656 246 L1656 243 L1659 243 L1659 228 L1662 228 L1662 226 L1664 226 L1664 231 L1667 231 L1667 237 L1670 237 L1670 240 L1673 240 L1673 242 L1676 242 L1676 245 L1679 245 L1679 229 L1682 229 L1682 220 L1685 220 L1685 224 L1688 224 L1688 239 L1690 239 L1690 241 L1693 241 L1693 243 L1696 243 L1696 247 L1699 247 L1699 242 L1702 242 L1702 230 L1705 230 L1705 225 L1708 225 L1708 229 L1711 229 L1711 238 L1714 238 L1714 242 L1717 242 L1717 243 L1720 243 L1720 247 L1722 247 L1722 243 L1725 243 L1725 229 L1728 229 L1728 223 L1731 223 L1731 227 L1734 227 L1734 236 L1737 236 L1737 238 L1738 238" stroke="#ff0000" stroke-width="2" fill="none" stroke-linejoin="miter" stroke-linecap="square"/></svg>
<div class="box" style="top:211px"></div><div class="bt" style="top:211px">100</div>
<div class="box" style="top:270px"></div><div class="bt" style="top:270px">95 °C</div>
<div class="box" style="top:335px"></div><div class="bt" style="top:335px">0</div>
<div class="sq" style="left:1747px;top:254px;background:#302a28;border-color:#f4f4f4"></div>
<div class="sq" style="left:1765px;top:254px;background:#808080"></div>
<div class="sq" style="left:1783px;top:254px;background:#a9c6ee"></div>
<div class="btn" style="left:1742px;top:304px;width:27px">Fit y</div>
<div class="btn" style="left:1771px;top:304px;width:28px">Reset</div>
<div style="position:absolute;left:1029px;top:361px;width:780px;height:166px;background:#393939"></div>
<div style="position:absolute;left:1029px;top:361px;width:780px;height:31px;background:#2b2b2b"></div>
<div style="position:absolute;left:1029px;top:361px;width:780px;height:1px;background:#3c4046"></div>
<div class="gt" style="left:1037px;top:368px">CPU Package Power</div>
<div style="position:absolute;left:1789px;top:368px;width:19px;height:19px;background:#282828"></div>
<div class="gx" style="left:1796px;top:369px">x</div>
<svg style="position:absolute;left:1029px;top:392px" width="710" height="134" viewBox="1029 392 710 134"><rect x="1029" y="392" width="710" height="134" fill="#c8c8c8"/><rect x="1029" y="392" width="710" height="133" fill="#a8a8a8"/><rect x="1030" y="393" width="709" height="132" fill="#808080"/><path d="M1030 525 L1030 517 L1031 517 L1031 517 L1034 517 L1034 516 L1037 516 L1037 516 L1040 516 L1040 517 L1043 517 L1043 517 L1046 517 L1046 517 L1049 517 L1049 517 L1052 517 L1052 517 L1055 517 L1055 515 L1058 515 L1058 514 L1060 514 L1060 515 L1063 515 L1063 516 L1066 516 L1066 517 L1069 517 L1069 517 L1072 517 L1072 517 L1075 517 L1075 517 L1078 517 L1078 517 L1081 517 L1081 517 L1084 517 L1084 456 L1086 456 L1086 412 L1089 412 L1089 449 L1092 449 L1092 479 L1095 479 L1095 483 L1098 483 L1098 487 L1101 487 L1101 489 L1104 489 L1104 487 L1107 487 L1107 466 L1110 466 L1110 448 L1113 448 L1113 471 L1116 471 L1116 478 L1118 478 L1118 483 L1121 483 L1121 486 L1124 486 L1124 487 L1127 487 L1127 488 L1130 488 L1130 486 L1133 486 L1133 443 L1136 443 L1136 471 L1139 471 L1139 477 L1142 477 L1142 481 L1144 481 L1144 484 L1147 484 L1147 487 L1150 487 L1150 461 L1153 461 L1153 446 L1156 446 L1156 468 L1159 468 L1159 476 L1162 476 L1162 481 L1165 481 L1165 486 L1168 486 L1168 486 L1171 486 L1171 487 L1174 487 L1174 487 L1176 487 L1176 448 L1179 448 L1179 471 L1182 471 L1182 476 L1185 476 L1185 481 L1188 481 L1188 485 L1191 485 L1191 489 L1194 489 L1194 466 L1197 466 L1197 448 L1200 448 L1200 467 L1202 467 L1202 475 L1205 475 L1205 483 L1208 483 L1208 487 L1211 487 L1211 487 L1214 487 L1214 486 L1217 486 L1217 468 L1220 468 L1220 442 L1223 442 L1223 470 L1226 470 L1226 478 L1229 478 L1229 482 L1232 482 L1232 485 L1234 485 L1234 489 L1237 489 L1237 463 L1240 463 L1240 449 L1243 449 L1243 466 L1246 466 L1246 479 L1249 479 L1249 482 L1252 482 L1252 485 L1255 485 L1255 487 L1258 487 L1258 487 L1260 487 L1260 488 L1263 488 L1263 442 L1266 442 L1266 467 L1269 467 L1269 475 L1272 475 L1272 484 L1275 484 L1275 484 L1278 484 L1278 486 L1281 486 L1281 486 L1284 486 L1284 487 L1287 487 L1287 451 L1290 451 L1290 470 L1292 470 L1292 479 L1295 479 L1295 484 L1298 484 L1298 485 L1301 485 L1301 487 L1304 487 L1304 468 L1307 468 L1307 445 L1310 445 L1310 466 L1313 466 L1313 476 L1316 476 L1316 481 L1318 481 L1318 484 L1321 484 L1321 487 L1324 487 L1324 487 L1327 487 L1327 472 L1330 472 L1330 442 L1333 442 L1333 466 L1336 466 L1336 478 L1339 478 L1339 483 L1342 483 L1342 485 L1345 485 L1345 486 L1348 486 L1348 487 L1350 487 L1350 487 L1353 487 L1353 442 L1356 442 L1356 466 L1359 466 L1359 478 L1362 478 L1362 480 L1365 480 L1365 485 L1368 485 L1368 488 L1371 488 L1371 461 L1374 461 L1374 451 L1376 451 L1376 465 L1379 465 L1379 478 L1382 478 L1382 484 L1385 484 L1385 485 L1388 485 L1388 487 L1391 487 L1391 489 L1394 489 L1394 469 L1397 469 L1397 444 L1400 444 L1400 465 L1403 465 L1403 474 L1406 474 L1406 483 L1408 483 L1408 487 L1411 487 L1411 488 L1414 488 L1414 466 L1417 466 L1417 451 L1420 451 L1420 472 L1423 472 L1423 476 L1426 476 L1426 481 L1429 481 L1429 485 L1432 485 L1432 487 L1434 487 L1434 489 L1437 489 L1437 487 L1440 487 L1440 449 L1443 449 L1443 470 L1446 470 L1446 478 L1449 478 L1449 482 L1452 482 L1452 485 L1455 485 L1455 487 L1458 487 L1458 462 L1461 462 L1461 449 L1464 449 L1464 465 L1466 465 L1466 474 L1469 474 L1469 480 L1472 480 L1472 486 L1475 486 L1475 487 L1478 487 L1478 489 L1481 489 L1481 489 L1484 489 L1484 443 L1487 443 L1487 464 L1490 464 L1490 474 L1492 474 L1492 482 L1495 482 L1495 486 L1498 486 L1498 487 L1501 487 L1501 487 L1504 487 L1504 468 L1507 468 L1507 449 L1510 449 L1510 471 L1513 471 L1513 477 L1516 477 L1516 480 L1519 480 L1519 487 L1522 487 L1522 487 L1524 487 L1524 488 L1527 488 L1527 442 L1530 442 L1530 465 L1533 465 L1533 475 L1536 475 L1536 481 L1539 481 L1539 487 L1542 487 L1542 488 L1545 488 L1545 487 L1548 487 L1548 487 L1550 487 L1550 446 L1553 446 L1553 465 L1556 465 L1556 478 L1559 478 L1559 483 L1562 483 L1562 487 L1565 487 L1565 486 L1568 486 L1568 487 L1571 487 L1571 488 L1574 488 L1574 451 L1577 451 L1577 463 L1580 463 L1580 475 L1582 475 L1582 480 L1585 480 L1585 485 L1588 485 L1588 489 L1591 489 L1591 470 L1594 470 L1594 445 L1597 445 L1597 465 L1600 465 L1600 478 L1603 478 L1603 484 L1606 484 L1606 484 L1608 484 L1608 488 L1611 488 L1611 488 L1614 488 L1614 462 L1617 462 L1617 442 L1620 442 L1620 465 L1623 465 L1623 477 L1626 477 L1626 483 L1629 483 L1629 485 L1632 485 L1632 486 L1635 486 L1635 464 L1638 464 L1638 442 L1640 442 L1640 470 L1643 470 L1643 477 L1646 477 L1646 480 L1649 480 L1649 484 L1652 484 L1652 487 L1655 487 L1655 488 L1658 488 L1658 462 L1661 462 L1661 448 L1664 448 L1664 467 L1666 467 L1666 475 L1669 475 L1669 481 L1672 481 L1672 487 L1675 487 L1675 487 L1678 487 L1678 470 L1681 470 L1681 452 L1684 452 L1684 466 L1687 466 L1687 475 L1690 475 L1690 483 L1693 483 L1693 485 L1696 485 L1696 486 L1698 486 L1698 489 L1701 489 L1701 487 L1704 487 L1704 445 L1707 445 L1707 471 L1710 471 L1710 476 L1713 476 L1713 481 L1716 481 L1716 484 L1719 484 L1719 488 L1722 488 L1722 488 L1724 488 L1724 467 L1727 467 L1727 444 L1730 444 L1730 468 L1733 468 L1733 475 L1736 475 L1736 481 L1738 481 L1738 525 Z" fill="#9999ff"/><path d="M1048.5 393V525M1068.5 393V525M1088.5 393V525M1108.5 393V525M1128.5 393V525M1148.5 393V525M1168.5 393V525M1188.5 393V525M1208.5 393V525M1228.5 393V525M1248.5 393V525M1268.5 393V525M1288.5 393V525M1308.5 393V525M1328.5 393V525M1348.5 393V525M1368.5 393V525M1388.5 393V525M1408.5 393V525M1428.5 393V525M1448.5 393V525M1468.5 393V525M1488.5 393V525M1508.5 393V525M1528.5 393V525M1548.5 393V525M1568.5 393V525M1588.5 393V525M1608.5 393V525M1628.5 393V525M1648.5 393V525M1668.5 393V525M1688.5 393V525M1708.5 393V525M1728.5 393V525M1030 524.5H1738M1030 504.5H1738M1030 484.5H1738M1030 464.5H1738M1030 444.5H1738M1030 424.5H1738M1030 404.5H1738" stroke="#a9c6ee" stroke-width="1" fill="none"/><path d="M1030 517 L1031 517 L1031 517 L1034 517 L1034 516 L1037 516 L1037 516 L1040 516 L1040 517 L1043 517 L1043 517 L1046 517 L1046 517 L1049 517 L1049 517 L1052 517 L1052 517 L1055 517 L1055 515 L1058 515 L1058 514 L1060 514 L1060 515 L1063 515 L1063 516 L1066 516 L1066 517 L1069 517 L1069 517 L1072 517 L1072 517 L1075 517 L1075 517 L1078 517 L1078 517 L1081 517 L1081 517 L1084 517 L1084 456 L1086 456 L1086 412 L1089 412 L1089 449 L1092 449 L1092 479 L1095 479 L1095 483 L1098 483 L1098 487 L1101 487 L1101 489 L1104 489 L1104 487 L1107 487 L1107 466 L1110 466 L1110 448 L1113 448 L1113 471 L1116 471 L1116 478 L1118 478 L1118 483 L1121 483 L1121 486 L1124 486 L1124 487 L1127 487 L1127 488 L1130 488 L1130 486 L1133 486 L1133 443 L1136 443 L1136 471 L1139 471 L1139 477 L1142 477 L1142 481 L1144 481 L1144 484 L1147 484 L1147 487 L1150 487 L1150 461 L1153 461 L1153 446 L1156 446 L1156 468 L1159 468 L1159 476 L1162 476 L1162 481 L1165 481 L1165 486 L1168 486 L1168 486 L1171 486 L1171 487 L1174 487 L1174 487 L1176 487 L1176 448 L1179 448 L1179 471 L1182 471 L1182 476 L1185 476 L1185 481 L1188 481 L1188 485 L1191 485 L1191 489 L1194 489 L1194 466 L1197 466 L1197 448 L1200 448 L1200 467 L1202 467 L1202 475 L1205 475 L1205 483 L1208 483 L1208 487 L1211 487 L1211 487 L1214 487 L1214 486 L1217 486 L1217 468 L1220 468 L1220 442 L1223 442 L1223 470 L1226 470 L1226 478 L1229 478 L1229 482 L1232 482 L1232 485 L1234 485 L1234 489 L1237 489 L1237 463 L1240 463 L1240 449 L1243 449 L1243 466 L1246 466 L1246 479 L1249 479 L1249 482 L1252 482 L1252 485 L1255 485 L1255 487 L1258 487 L1258 487 L1260 487 L1260 488 L1263 488 L1263 442 L1266 442 L1266 467 L1269 467 L1269 475 L1272 475 L1272 484 L1275 484 L1275 484 L1278 484 L1278 486 L1281 486 L1281 486 L1284 486 L1284 487 L1287 487 L1287 451 L1290 451 L1290 470 L1292 470 L1292 479 L1295 479 L1295 484 L1298 484 L1298 485 L1301 485 L1301 487 L1304 487 L1304 468 L1307 468 L1307 445 L1310 445 L1310 466 L1313 466 L1313 476 L1316 476 L1316 481 L1318 481 L1318 484 L1321 484 L1321 487 L1324 487 L1324 487 L1327 487 L1327 472 L1330 472 L1330 442 L1333 442 L1333 466 L1336 466 L1336 478 L1339 478 L1339 483 L1342 483 L1342 485 L1345 485 L1345 486 L1348 486 L1348 487 L1350 487 L1350 487 L1353 487 L1353 442 L1356 442 L1356 466 L1359 466 L1359 478 L1362 478 L1362 480 L1365 480 L1365 485 L1368 485 L1368 488 L1371 488 L1371 461 L1374 461 L1374 451 L1376 451 L1376 465 L1379 465 L1379 478 L1382 478 L1382 484 L1385 484 L1385 485 L1388 485 L1388 487 L1391 487 L1391 489 L1394 489 L1394 469 L1397 469 L1397 444 L1400 444 L1400 465 L1403 465 L1403 474 L1406 474 L1406 483 L1408 483 L1408 487 L1411 487 L1411 488 L1414 488 L1414 466 L1417 466 L1417 451 L1420 451 L1420 472 L1423 472 L1423 476 L1426 476 L1426 481 L1429 481 L1429 485 L1432 485 L1432 487 L1434 487 L1434 489 L1437 489 L1437 487 L1440 487 L1440 449 L1443 449 L1443 470 L1446 470 L1446 478 L1449 478 L1449 482 L1452 482 L1452 485 L1455 485 L1455 487 L1458 487 L1458 462 L1461 462 L1461 449 L1464 449 L1464 465 L1466 465 L1466 474 L1469 474 L1469 480 L1472 480 L1472 486 L1475 486 L1475 487 L1478 487 L1478 489 L1481 489 L1481 489 L1484 489 L1484 443 L1487 443 L1487 464 L1490 464 L1490 474 L1492 474 L1492 482 L1495 482 L1495 486 L1498 486 L1498 487 L1501 487 L1501 487 L1504 487 L1504 468 L1507 468 L1507 449 L1510 449 L1510 471 L1513 471 L1513 477 L1516 477 L1516 480 L1519 480 L1519 487 L1522 487 L1522 487 L1524 487 L1524 488 L1527 488 L1527 442 L1530 442 L1530 465 L1533 465 L1533 475 L1536 475 L1536 481 L1539 481 L1539 487 L1542 487 L1542 488 L1545 488 L1545 487 L1548 487 L1548 487 L1550 487 L1550 446 L1553 446 L1553 465 L1556 465 L1556 478 L1559 478 L1559 483 L1562 483 L1562 487 L1565 487 L1565 486 L1568 486 L1568 487 L1571 487 L1571 488 L1574 488 L1574 451 L1577 451 L1577 463 L1580 463 L1580 475 L1582 475 L1582 480 L1585 480 L1585 485 L1588 485 L1588 489 L1591 489 L1591 470 L1594 470 L1594 445 L1597 445 L1597 465 L1600 465 L1600 478 L1603 478 L1603 484 L1606 484 L1606 484 L1608 484 L1608 488 L1611 488 L1611 488 L1614 488 L1614 462 L1617 462 L1617 442 L1620 442 L1620 465 L1623 465 L1623 477 L1626 477 L1626 483 L1629 483 L1629 485 L1632 485 L1632 486 L1635 486 L1635 464 L1638 464 L1638 442 L1640 442 L1640 470 L1643 470 L1643 477 L1646 477 L1646 480 L1649 480 L1649 484 L1652 484 L1652 487 L1655 487 L1655 488 L1658 488 L1658 462 L1661 462 L1661 448 L1664 448 L1664 467 L1666 467 L1666 475 L1669 475 L1669 481 L1672 481 L1672 487 L1675 487 L1675 487 L1678 487 L1678 470 L1681 470 L1681 452 L1684 452 L1684 466 L1687 466 L1687 475 L1690 475 L1690 483 L1693 483 L1693 485 L1696 485 L1696 486 L1698 486 L1698 489 L1701 489 L1701 487 L1704 487 L1704 445 L1707 445 L1707 471 L1710 471 L1710 476 L1713 476 L1713 481 L1716 481 L1716 484 L1719 484 L1719 488 L1722 488 L1722 488 L1724 488 L1724 467 L1727 467 L1727 444 L1730 444 L1730 468 L1733 468 L1733 475 L1736 475 L1736 481 L1738 481" stroke="#0000ff" stroke-width="2" fill="none" stroke-linejoin="miter" stroke-linecap="square"/></svg>
<div class="box" style="top:392px"></div><div class="bt" style="top:392px">100</div>
<div class="box" style="top:444px"></div><div class="bt" style="top:444px">56.119 W</div>
<div class="box" style="top:509px"></div><div class="bt" style="top:509px">0.000</div>
<div class="sq" style="left:1747px;top:428px;background:#32323c;border-color:#b0b0b0"></div>
<div class="sq" style="left:1765px;top:428px;background:#808080"></div>
<div class="sq" style="left:1783px;top:428px;background:#a9c6ee"></div>
<div class="btn" style="left:1742px;top:478px;width:27px">Fit y</div>
<div class="btn" style="left:1771px;top:478px;width:28px">Reset</div>
<div style="position:absolute;left:1029px;top:534px;width:780px;height:162px;background:#393939"></div>
<div style="position:absolute;left:1029px;top:534px;width:780px;height:31px;background:#2b2b2b"></div>
<div style="position:absolute;left:1029px;top:534px;width:780px;height:1px;background:#3c4046"></div>
<div class="gt" style="left:1037px;top:541px">GPU Clock</div>
<div style="position:absolute;left:1789px;top:541px;width:19px;height:19px;background:#282828"></div>
<div class="gx" style="left:1796px;top:542px">x</div>
<svg style="position:absolute;left:1029px;top:565px" width="710" height="130" viewBox="1029 565 710 130"><rect x="1029" y="565" width="710" height="130" fill="#c8c8c8"/><rect x="1029" y="565" width="710" height="129" fill="#a8a8a8"/><rect x="1030" y="566" width="709" height="128" fill="#808080"/><path d="M1030 694 L1030 680 L1032 680 L1032 680 L1035 680 L1035 680 L1038 680 L1038 680 L1041 680 L1041 680 L1044 680 L1044 680 L1047 680 L1047 680 L1050 680 L1050 680 L1052 680 L1052 680 L1055 680 L1055 680 L1058 680 L1058 680 L1061 680 L1061 680 L1064 680 L1064 680 L1067 680 L1067 680 L1070 680 L1070 680 L1073 680 L1073 680 L1076 680 L1076 680 L1079 680 L1079 680 L1082 680 L1082 680 L1084 680 L1084 680 L1087 680 L1087 602 L1090 602 L1090 598 L1093 598 L1093 594 L1096 594 L1096 591 L1099 591 L1099 593 L1102 593 L1102 583 L1105 583 L1105 592 L1108 592 L1108 594 L1110 594 L1110 598 L1113 598 L1113 598 L1116 598 L1116 590 L1119 590 L1119 583 L1122 583 L1122 590 L1125 590 L1125 594 L1128 594 L1128 590 L1131 590 L1131 592 L1134 592 L1134 591 L1137 591 L1137 595 L1140 595 L1140 594 L1142 594 L1142 595 L1145 595 L1145 595 L1148 595 L1148 591 L1151 591 L1151 581 L1154 581 L1154 600 L1157 600 L1157 591 L1160 591 L1160 591 L1163 591 L1163 595 L1166 595 L1166 591 L1168 591 L1168 579 L1171 579 L1171 591 L1174 591 L1174 567 L1177 567 L1177 591 L1180 591 L1180 591 L1183 591 L1183 593 L1186 593 L1186 594 L1189 594 L1189 593 L1192 593 L1192 591 L1195 591 L1195 593 L1198 593 L1198 594 L1200 594 L1200 595 L1203 595 L1203 592 L1206 592 L1206 600 L1209 600 L1209 590 L1212 590 L1212 591 L1215 591 L1215 595 L1218 595 L1218 593 L1221 593 L1221 579 L1224 579 L1224 593 L1226 593 L1226 593 L1229 593 L1229 591 L1232 591 L1232 578 L1235 578 L1235 598 L1238 598 L1238 591 L1241 591 L1241 593 L1244 593 L1244 593 L1247 593 L1247 591 L1250 591 L1250 596 L1253 596 L1253 593 L1256 593 L1256 594 L1258 594 L1258 583 L1261 583 L1261 593 L1264 593 L1264 593 L1267 593 L1267 595 L1270 595 L1270 591 L1273 591 L1273 590 L1276 590 L1276 592 L1279 592 L1279 590 L1282 590 L1282 590 L1284 590 L1284 597 L1287 597 L1287 593 L1290 593 L1290 593 L1293 593 L1293 591 L1296 591 L1296 585 L1299 585 L1299 594 L1302 594 L1302 590 L1305 590 L1305 594 L1308 594 L1308 594 L1311 594 L1311 597 L1314 597 L1314 590 L1316 590 L1316 594 L1319 594 L1319 594 L1322 594 L1322 591 L1325 591 L1325 592 L1328 592 L1328 593 L1331 593 L1331 593 L1334 593 L1334 591 L1337 591 L1337 590 L1340 590 L1340 591 L1342 591 L1342 595 L1345 595 L1345 592 L1348 592 L1348 592 L1351 592 L1351 595 L1354 595 L1354 593 L1357 593 L1357 595 L1360 595 L1360 594 L1363 594 L1363 594 L1366 594 L1366 594 L1369 594 L1369 592 L1372 592 L1372 585 L1374 585 L1374 579 L1377 579 L1377 595 L1380 595 L1380 578 L1383 578 L1383 593 L1386 593 L1386 593 L1389 593 L1389 590 L1392 590 L1392 592 L1395 592 L1395 594 L1398 594 L1398 590 L1400 590 L1400 595 L1403 595 L1403 591 L1406 591 L1406 585 L1409 585 L1409 594 L1412 594 L1412 594 L1415 594 L1415 596 L1418 596 L1418 594 L1421 594 L1421 592 L1424 592 L1424 590 L1427 590 L1427 591 L1430 591 L1430 592 L1432 592 L1432 595 L1435 595 L1435 594 L1438 594 L1438 590 L1441 590 L1441 592 L1444 592 L1444 592 L1447 592 L1447 593 L1450 593 L1450 600 L1453 600 L1453 580 L1456 580 L1456 594 L1458 594 L1458 590 L1461 590 L1461 592 L1464 592 L1464 591 L1467 591 L1467 592 L1470 592 L1470 591 L1473 591 L1473 591 L1476 591 L1476 593 L1479 593 L1479 591 L1482 591 L1482 590 L1485 590 L1485 593 L1488 593 L1488 593 L1490 593 L1490 592 L1493 592 L1493 600 L1496 600 L1496 590 L1499 590 L1499 591 L1502 591 L1502 593 L1505 593 L1505 594 L1508 594 L1508 592 L1511 592 L1511 594 L1514 594 L1514 593 L1516 593 L1516 600 L1519 600 L1519 593 L1522 593 L1522 591 L1525 591 L1525 594 L1528 594 L1528 591 L1531 591 L1531 594 L1534 594 L1534 591 L1537 591 L1537 594 L1540 594 L1540 597 L1543 597 L1543 592 L1546 592 L1546 591 L1548 591 L1548 591 L1551 591 L1551 601 L1554 601 L1554 591 L1557 591 L1557 595 L1560 595 L1560 594 L1563 594 L1563 591 L1566 591 L1566 591 L1569 591 L1569 581 L1572 581 L1572 594 L1574 594 L1574 593 L1577 593 L1577 599 L1580 599 L1580 592 L1583 592 L1583 595 L1586 595 L1586 593 L1589 593 L1589 592 L1592 592 L1592 594 L1595 594 L1595 594 L1598 594 L1598 594 L1601 594 L1601 593 L1604 593 L1604 592 L1606 592 L1606 590 L1609 590 L1609 594 L1612 594 L1612 593 L1615 593 L1615 592 L1618 592 L1618 593 L1621 593 L1621 593 L1624 593 L1624 591 L1627 591 L1627 594 L1630 594 L1630 592 L1632 592 L1632 590 L1635 590 L1635 591 L1638 591 L1638 595 L1641 595 L1641 591 L1644 591 L1644 593 L1647 593 L1647 593 L1650 593 L1650 594 L1653 594 L1653 592 L1656 592 L1656 591 L1659 591 L1659 592 L1662 592 L1662 591 L1664 591 L1664 580 L1667 580 L1667 581 L1670 581 L1670 592 L1673 592 L1673 592 L1676 592 L1676 591 L1679 591 L1679 595 L1682 595 L1682 591 L1685 591 L1685 592 L1688 592 L1688 591 L1690 591 L1690 594 L1693 594 L1693 592 L1696 592 L1696 591 L1699 591 L1699 592 L1702 592 L1702 594 L1705 594 L1705 592 L1708 592 L1708 600 L1711 600 L1711 592 L1714 592 L1714 591 L1717 591 L1717 591 L1720 591 L1720 584 L1722 584 L1722 591 L1725 591 L1725 592 L1728 592 L1728 592 L1731 592 L1731 593 L1734 593 L1734 595 L1737 595 L1737 590 L1738 590 L1738 694 Z" fill="#96b2a3"/><path d="M1042.5 566V694M1062.5 566V694M1082.5 566V694M1102.5 566V694M1122.5 566V694M1142.5 566V694M1162.5 566V694M1182.5 566V694M1202.5 566V694M1222.5 566V694M1242.5 566V694M1262.5 566V694M1282.5 566V694M1302.5 566V694M1322.5 566V694M1342.5 566V694M1362.5 566V694M1382.5 566V694M1402.5 566V694M1422.5 566V694M1442.5 566V694M1462.5 566V694M1482.5 566V694M1502.5 566V694M1522.5 566V694M1542.5 566V694M1562.5 566V694M1582.5 566V694M1602.5 566V694M1622.5 566V694M1642.5 566V694M1662.5 566V694M1682.5 566V694M1702.5 566V694M1722.5 566V694M1030 693.5H1738M1030 673.5H1738M1030 653.5H1738M1030 633.5H1738M1030 613.5H1738M1030 593.5H1738M1030 573.5H1738" stroke="#a9c6ee" stroke-width="1" fill="none"/><path d="M1030 680 L1032 680 L1032 680 L1035 680 L1035 680 L1038 680 L1038 680 L1041 680 L1041 680 L1044 680 L1044 680 L1047 680 L1047 680 L1050 680 L1050 680 L1052 680 L1052 680 L1055 680 L1055 680 L1058 680 L1058 680 L1061 680 L1061 680 L1064 680 L1064 680 L1067 680 L1067 680 L1070 680 L1070 680 L1073 680 L1073 680 L1076 680 L1076 680 L1079 680 L1079 680 L1082 680 L1082 680 L1084 680 L1084 680 L1087 680 L1087 602 L1090 602 L1090 598 L1093 598 L1093 594 L1096 594 L1096 591 L1099 591 L1099 593 L1102 593 L1102 583 L1105 583 L1105 592 L1108 592 L1108 594 L1110 594 L1110 598 L1113 598 L1113 598 L1116 598 L1116 590 L1119 590 L1119 583 L1122 583 L1122 590 L1125 590 L1125 594 L1128 594 L1128 590 L1131 590 L1131 592 L1134 592 L1134 591 L1137 591 L1137 595 L1140 595 L1140 594 L1142 594 L1142 595 L1145 595 L1145 595 L1148 595 L1148 591 L1151 591 L1151 581 L1154 581 L1154 600 L1157 600 L1157 591 L1160 591 L1160 591 L1163 591 L1163 595 L1166 595 L1166 591 L1168 591 L1168 579 L1171 579 L1171 591 L1174 591 L1174 567 L1177 567 L1177 591 L1180 591 L1180 591 L1183 591 L1183 593 L1186 593 L1186 594 L1189 594 L1189 593 L1192 593 L1192 591 L1195 591 L1195 593 L1198 593 L1198 594 L1200 594 L1200 595 L1203 595 L1203 592 L1206 592 L1206 600 L1209 600 L1209 590 L1212 590 L1212 591 L1215 591 L1215 595 L1218 595 L1218 593 L1221 593 L1221 579 L1224 579 L1224 593 L1226 593 L1226 593 L1229 593 L1229 591 L1232 591 L1232 578 L1235 578 L1235 598 L1238 598 L1238 591 L1241 591 L1241 593 L1244 593 L1244 593 L1247 593 L1247 591 L1250 591 L1250 596 L1253 596 L1253 593 L1256 593 L1256 594 L1258 594 L1258 583 L1261 583 L1261 593 L1264 593 L1264 593 L1267 593 L1267 595 L1270 595 L1270 591 L1273 591 L1273 590 L1276 590 L1276 592 L1279 592 L1279 590 L1282 590 L1282 590 L1284 590 L1284 597 L1287 597 L1287 593 L1290 593 L1290 593 L1293 593 L1293 591 L1296 591 L1296 585 L1299 585 L1299 594 L1302 594 L1302 590 L1305 590 L1305 594 L1308 594 L1308 594 L1311 594 L1311 597 L1314 597 L1314 590 L1316 590 L1316 594 L1319 594 L1319 594 L1322 594 L1322 591 L1325 591 L1325 592 L1328 592 L1328 593 L1331 593 L1331 593 L1334 593 L1334 591 L1337 591 L1337 590 L1340 590 L1340 591 L1342 591 L1342 595 L1345 595 L1345 592 L1348 592 L1348 592 L1351 592 L1351 595 L1354 595 L1354 593 L1357 593 L1357 595 L1360 595 L1360 594 L1363 594 L1363 594 L1366 594 L1366 594 L1369 594 L1369 592 L1372 592 L1372 585 L1374 585 L1374 579 L1377 579 L1377 595 L1380 595 L1380 578 L1383 578 L1383 593 L1386 593 L1386 593 L1389 593 L1389 590 L1392 590 L1392 592 L1395 592 L1395 594 L1398 594 L1398 590 L1400 590 L1400 595 L1403 595 L1403 591 L1406 591 L1406 585 L1409 585 L1409 594 L1412 594 L1412 594 L1415 594 L1415 596 L1418 596 L1418 594 L1421 594 L1421 592 L1424 592 L1424 590 L1427 590 L1427 591 L1430 591 L1430 592 L1432 592 L1432 595 L1435 595 L1435 594 L1438 594 L1438 590 L1441 590 L1441 592 L1444 592 L1444 592 L1447 592 L1447 593 L1450 593 L1450 600 L1453 600 L1453 580 L1456 580 L1456 594 L1458 594 L1458 590 L1461 590 L1461 592 L1464 592 L1464 591 L1467 591 L1467 592 L1470 592 L1470 591 L1473 591 L1473 591 L1476 591 L1476 593 L1479 593 L1479 591 L1482 591 L1482 590 L1485 590 L1485 593 L1488 593 L1488 593 L1490 593 L1490 592 L1493 592 L1493 600 L1496 600 L1496 590 L1499 590 L1499 591 L1502 591 L1502 593 L1505 593 L1505 594 L1508 594 L1508 592 L1511 592 L1511 594 L1514 594 L1514 593 L1516 593 L1516 600 L1519 600 L1519 593 L1522 593 L1522 591 L1525 591 L1525 594 L1528 594 L1528 591 L1531 591 L1531 594 L1534 594 L1534 591 L1537 591 L1537 594 L1540 594 L1540 597 L1543 597 L1543 592 L1546 592 L1546 591 L1548 591 L1548 591 L1551 591 L1551 601 L1554 601 L1554 591 L1557 591 L1557 595 L1560 595 L1560 594 L1563 594 L1563 591 L1566 591 L1566 591 L1569 591 L1569 581 L1572 581 L1572 594 L1574 594 L1574 593 L1577 593 L1577 599 L1580 599 L1580 592 L1583 592 L1583 595 L1586 595 L1586 593 L1589 593 L1589 592 L1592 592 L1592 594 L1595 594 L1595 594 L1598 594 L1598 594 L1601 594 L1601 593 L1604 593 L1604 592 L1606 592 L1606 590 L1609 590 L1609 594 L1612 594 L1612 593 L1615 593 L1615 592 L1618 592 L1618 593 L1621 593 L1621 593 L1624 593 L1624 591 L1627 591 L1627 594 L1630 594 L1630 592 L1632 592 L1632 590 L1635 590 L1635 591 L1638 591 L1638 595 L1641 595 L1641 591 L1644 591 L1644 593 L1647 593 L1647 593 L1650 593 L1650 594 L1653 594 L1653 592 L1656 592 L1656 591 L1659 591 L1659 592 L1662 592 L1662 591 L1664 591 L1664 580 L1667 580 L1667 581 L1670 581 L1670 592 L1673 592 L1673 592 L1676 592 L1676 591 L1679 591 L1679 595 L1682 595 L1682 591 L1685 591 L1685 592 L1688 592 L1688 591 L1690 591 L1690 594 L1693 594 L1693 592 L1696 592 L1696 591 L1699 591 L1699 592 L1702 592 L1702 594 L1705 594 L1705 592 L1708 592 L1708 600 L1711 600 L1711 592 L1714 592 L1714 591 L1717 591 L1717 591 L1720 591 L1720 584 L1722 584 L1722 591 L1725 591 L1725 592 L1728 592 L1728 592 L1731 592 L1731 593 L1734 593 L1734 595 L1737 595 L1737 590 L1738 590" stroke="#0c8a46" stroke-width="2" fill="none" stroke-linejoin="miter" stroke-linecap="square"/></svg>
<div class="box" style="top:565px"></div><div class="bt" style="top:565px">1800</div>
<div class="box" style="top:613px"></div><div class="bt" style="top:613px">1,290.0 MH:</div>
<div class="box" style="top:678px"></div><div class="bt" style="top:678px">0.0</div>
<div class="sq" style="left:1747px;top:597px;background:#323632;border-color:#b0b0b0"></div>
<div class="sq" style="left:1765px;top:597px;background:#808080"></div>
<div class="sq" style="left:1783px;top:597px;background:#a9c6ee"></div>
<div class="btn" style="left:1742px;top:647px;width:27px">Fit y</div>
<div class="btn" style="left:1771px;top:647px;width:28px">Reset</div>
<div style="position:absolute;left:1029px;top:704px;width:780px;height:165px;background:#393939"></div>
<div style="position:absolute;left:1029px;top:704px;width:780px;height:31px;background:#2b2b2b"></div>
<div style="position:absolute;left:1029px;top:704px;width:780px;height:1px;background:#3c4046"></div>
<div class="gt" style="left:1037px;top:711px">GPU Temperature</div>
<div style="position:absolute;left:1789px;top:711px;width:19px;height:19px;background:#282828"></div>
<div class="gx" style="left:1796px;top:712px">x</div>
<svg style="position:absolute;left:1029px;top:735px" width="710" height="133" viewBox="1029 735 710 133"><rect x="1029" y="735" width="710" height="133" fill="#c8c8c8"/><rect x="1029" y="735" width="710" height="132" fill="#a8a8a8"/><rect x="1030" y="736" width="709" height="131" fill="#808080"/><path d="M1030 867 L1030 826 L1032 826 L1032 826 L1035 826 L1035 826 L1038 826 L1038 825 L1041 825 L1041 824 L1044 824 L1044 824 L1046 824 L1046 824 L1049 824 L1049 824 L1052 824 L1052 824 L1055 824 L1055 824 L1058 824 L1058 824 L1061 824 L1061 824 L1064 824 L1064 824 L1067 824 L1067 824 L1070 824 L1070 824 L1072 824 L1072 824 L1075 824 L1075 824 L1078 824 L1078 824 L1081 824 L1081 824 L1084 824 L1084 824 L1087 824 L1087 813 L1090 813 L1090 811 L1093 811 L1093 807 L1096 807 L1096 803 L1099 803 L1099 801 L1102 801 L1102 799 L1104 799 L1104 797 L1107 797 L1107 795 L1110 795 L1110 795 L1113 795 L1113 794 L1116 794 L1116 793 L1119 793 L1119 791 L1122 791 L1122 791 L1125 791 L1125 790 L1128 790 L1128 788 L1130 788 L1130 788 L1133 788 L1133 787 L1136 787 L1136 787 L1139 787 L1139 787 L1142 787 L1142 786 L1145 786 L1145 785 L1148 785 L1148 784 L1151 784 L1151 784 L1154 784 L1154 784 L1157 784 L1157 784 L1160 784 L1160 783 L1162 783 L1162 783 L1165 783 L1165 781 L1168 781 L1168 783 L1171 783 L1171 782 L1174 782 L1174 782 L1177 782 L1177 781 L1180 781 L1180 782 L1183 782 L1183 781 L1186 781 L1186 779 L1188 779 L1188 781 L1191 781 L1191 779 L1194 779 L1194 778 L1197 778 L1197 779 L1200 779 L1200 780 L1203 780 L1203 779 L1206 779 L1206 778 L1209 778 L1209 778 L1212 778 L1212 778 L1215 778 L1215 778 L1218 778 L1218 778 L1220 778 L1220 779 L1223 779 L1223 776 L1226 776 L1226 777 L1229 777 L1229 777 L1232 777 L1232 777 L1235 777 L1235 777 L1238 777 L1238 776 L1241 776 L1241 776 L1244 776 L1244 775 L1246 775 L1246 777 L1249 777 L1249 775 L1252 775 L1252 776 L1255 776 L1255 776 L1258 776 L1258 776 L1261 776 L1261 776 L1264 776 L1264 776 L1267 776 L1267 775 L1270 775 L1270 776 L1273 776 L1273 776 L1276 776 L1276 776 L1278 776 L1278 775 L1281 775 L1281 776 L1284 776 L1284 776 L1287 776 L1287 776 L1290 776 L1290 776 L1293 776 L1293 775 L1296 775 L1296 775 L1299 775 L1299 775 L1302 775 L1302 775 L1304 775 L1304 775 L1307 775 L1307 775 L1310 775 L1310 775 L1313 775 L1313 776 L1316 776 L1316 775 L1319 775 L1319 775 L1322 775 L1322 775 L1325 775 L1325 774 L1328 774 L1328 774 L1331 774 L1331 774 L1334 774 L1334 774 L1336 774 L1336 774 L1339 774 L1339 774 L1342 774 L1342 774 L1345 774 L1345 773 L1348 773 L1348 774 L1351 774 L1351 774 L1354 774 L1354 774 L1357 774 L1357 774 L1360 774 L1360 774 L1362 774 L1362 774 L1365 774 L1365 773 L1368 773 L1368 773 L1371 773 L1371 773 L1374 773 L1374 774 L1377 774 L1377 772 L1380 772 L1380 774 L1383 774 L1383 772 L1386 772 L1386 773 L1389 773 L1389 774 L1392 774 L1392 772 L1394 772 L1394 772 L1397 772 L1397 773 L1400 773 L1400 773 L1403 773 L1403 773 L1406 773 L1406 773 L1409 773 L1409 773 L1412 773 L1412 774 L1415 774 L1415 772 L1418 772 L1418 774 L1420 774 L1420 774 L1423 774 L1423 774 L1426 774 L1426 773 L1429 773 L1429 773 L1432 773 L1432 774 L1435 774 L1435 774 L1438 774 L1438 772 L1441 772 L1441 772 L1444 772 L1444 774 L1447 774 L1447 773 L1450 773 L1450 774 L1452 774 L1452 773 L1455 773 L1455 774 L1458 774 L1458 772 L1461 772 L1461 773 L1464 773 L1464 773 L1467 773 L1467 774 L1470 774 L1470 774 L1473 774 L1473 773 L1476 773 L1476 773 L1478 773 L1478 774 L1481 774 L1481 773 L1484 773 L1484 774 L1487 774 L1487 773 L1490 773 L1490 773 L1493 773 L1493 774 L1496 774 L1496 774 L1499 774 L1499 773 L1502 773 L1502 773 L1505 773 L1505 773 L1508 773 L1508 773 L1510 773 L1510 773 L1513 773 L1513 773 L1516 773 L1516 773 L1519 773 L1519 774 L1522 774 L1522 773 L1525 773 L1525 773 L1528 773 L1528 773 L1531 773 L1531 772 L1534 772 L1534 773 L1536 773 L1536 774 L1539 774 L1539 773 L1542 773 L1542 773 L1545 773 L1545 773 L1548 773 L1548 773 L1551 773 L1551 772 L1554 772 L1554 772 L1557 772 L1557 773 L1560 773 L1560 773 L1563 773 L1563 773 L1566 773 L1566 772 L1568 772 L1568 772 L1571 772 L1571 773 L1574 773 L1574 772 L1577 772 L1577 772 L1580 772 L1580 772 L1583 772 L1583 773 L1586 773 L1586 771 L1589 771 L1589 773 L1592 773 L1592 773 L1594 773 L1594 773 L1597 773 L1597 773 L1600 773 L1600 772 L1603 772 L1603 772 L1606 772 L1606 772 L1609 772 L1609 772 L1612 772 L1612 772 L1615 772 L1615 772 L1618 772 L1618 772 L1621 772 L1621 772 L1624 772 L1624 772 L1626 772 L1626 772 L1629 772 L1629 771 L1632 771 L1632 772 L1635 772 L1635 773 L1638 773 L1638 772 L1641 772 L1641 772 L1644 772 L1644 772 L1647 772 L1647 771 L1650 771 L1650 772 L1652 772 L1652 772 L1655 772 L1655 772 L1658 772 L1658 773 L1661 773 L1661 771 L1664 771 L1664 772 L1667 772 L1667 772 L1670 772 L1670 772 L1673 772 L1673 770 L1676 770 L1676 772 L1679 772 L1679 772 L1682 772 L1682 772 L1684 772 L1684 772 L1687 772 L1687 771 L1690 771 L1690 771 L1693 771 L1693 771 L1696 771 L1696 771 L1699 771 L1699 771 L1702 771 L1702 772 L1705 772 L1705 771 L1708 771 L1708 772 L1710 772 L1710 771 L1713 771 L1713 772 L1716 772 L1716 772 L1719 772 L1719 772 L1722 772 L1722 771 L1725 771 L1725 771 L1728 771 L1728 772 L1731 772 L1731 771 L1734 771 L1734 771 L1737 771 L1737 771 L1738 771 L1738 867 Z" fill="#ffb296"/><path d="M1049.5 736V867M1069.5 736V867M1089.5 736V867M1109.5 736V867M1129.5 736V867M1149.5 736V867M1169.5 736V867M1189.5 736V867M1209.5 736V867M1229.5 736V867M1249.5 736V867M1269.5 736V867M1289.5 736V867M1309.5 736V867M1329.5 736V867M1349.5 736V867M1369.5 736V867M1389.5 736V867M1409.5 736V867M1429.5 736V867M1449.5 736V867M1469.5 736V867M1489.5 736V867M1509.5 736V867M1529.5 736V867M1549.5 736V867M1569.5 736V867M1589.5 736V867M1609.5 736V867M1629.5 736V867M1649.5 736V867M1669.5 736V867M1689.5 736V867M1709.5 736V867M1729.5 736V867M1030 866.5H1738M1030 846.5H1738M1030 826.5H1738M1030 806.5H1738M1030 786.5H1738M1030 766.5H1738M1030 746.5H1738" stroke="#a9c6ee" stroke-width="1" fill="none"/><path d="M1030 826 L1032 826 L1032 826 L1035 826 L1035 826 L1038 826 L1038 825 L1041 825 L1041 824 L1044 824 L1044 824 L1046 824 L1046 824 L1049 824 L1049 824 L1052 824 L1052 824 L1055 824 L1055 824 L1058 824 L1058 824 L1061 824 L1061 824 L1064 824 L1064 824 L1067 824 L1067 824 L1070 824 L1070 824 L1072 824 L1072 824 L1075 824 L1075 824 L1078 824 L1078 824 L1081 824 L1081 824 L1084 824 L1084 824 L1087 824 L1087 813 L1090 813 L1090 811 L1093 811 L1093 807 L1096 807 L1096 803 L1099 803 L1099 801 L1102 801 L1102 799 L1104 799 L1104 797 L1107 797 L1107 795 L1110 795 L1110 795 L1113 795 L1113 794 L1116 794 L1116 793 L1119 793 L1119 791 L1122 791 L1122 791 L1125 791 L1125 790 L1128 790 L1128 788 L1130 788 L1130 788 L1133 788 L1133 787 L1136 787 L1136 787 L1139 787 L1139 787 L1142 787 L1142 786 L1145 786 L1145 785 L1148 785 L1148 784 L1151 784 L1151 784 L1154 784 L1154 784 L1157 784 L1157 784 L1160 784 L1160 783 L1162 783 L1162 783 L1165 783 L1165 781 L1168 781 L1168 783 L1171 783 L1171 782 L1174 782 L1174 782 L1177 782 L1177 781 L1180 781 L1180 782 L1183 782 L1183 781 L1186 781 L1186 779 L1188 779 L1188 781 L1191 781 L1191 779 L1194 779 L1194 778 L1197 778 L1197 779 L1200 779 L1200 780 L1203 780 L1203 779 L1206 779 L1206 778 L1209 778 L1209 778 L1212 778 L1212 778 L1215 778 L1215 778 L1218 778 L1218 778 L1220 778 L1220 779 L1223 779 L1223 776 L1226 776 L1226 777 L1229 777 L1229 777 L1232 777 L1232 777 L1235 777 L1235 777 L1238 777 L1238 776 L1241 776 L1241 776 L1244 776 L1244 775 L1246 775 L1246 777 L1249 777 L1249 775 L1252 775 L1252 776 L1255 776 L1255 776 L1258 776 L1258 776 L1261 776 L1261 776 L1264 776 L1264 776 L1267 776 L1267 775 L1270 775 L1270 776 L1273 776 L1273 776 L1276 776 L1276 776 L1278 776 L1278 775 L1281 775 L1281 776 L1284 776 L1284 776 L1287 776 L1287 776 L1290 776 L1290 776 L1293 776 L1293 775 L1296 775 L1296 775 L1299 775 L1299 775 L1302 775 L1302 775 L1304 775 L1304 775 L1307 775 L1307 775 L1310 775 L1310 775 L1313 775 L1313 776 L1316 776 L1316 775 L1319 775 L1319 775 L1322 775 L1322 775 L1325 775 L1325 774 L1328 774 L1328 774 L1331 774 L1331 774 L1334 774 L1334 774 L1336 774 L1336 774 L1339 774 L1339 774 L1342 774 L1342 774 L1345 774 L1345 773 L1348 773 L1348 774 L1351 774 L1351 774 L1354 774 L1354 774 L1357 774 L1357 774 L1360 774 L1360 774 L1362 774 L1362 774 L1365 774 L1365 773 L1368 773 L1368 773 L1371 773 L1371 773 L1374 773 L1374 774 L1377 774 L1377 772 L1380 772 L1380 774 L1383 774 L1383 772 L1386 772 L1386 773 L1389 773 L1389 774 L1392 774 L1392 772 L1394 772 L1394 772 L1397 772 L1397 773 L1400 773 L1400 773 L1403 773 L1403 773 L1406 773 L1406 773 L1409 773 L1409 773 L1412 773 L1412 774 L1415 774 L1415 772 L1418 772 L1418 774 L1420 774 L1420 774 L1423 774 L1423 774 L1426 774 L1426 773 L1429 773 L1429 773 L1432 773 L1432 774 L1435 774 L1435 774 L1438 774 L1438 772 L1441 772 L1441 772 L1444 772 L1444 774 L1447 774 L1447 773 L1450 773 L1450 774 L1452 774 L1452 773 L1455 773 L1455 774 L1458 774 L1458 772 L1461 772 L1461 773 L1464 773 L1464 773 L1467 773 L1467 774 L1470 774 L1470 774 L1473 774 L1473 773 L1476 773 L1476 773 L1478 773 L1478 774 L1481 774 L1481 773 L1484 773 L1484 774 L1487 774 L1487 773 L1490 773 L1490 773 L1493 773 L1493 774 L1496 774 L1496 774 L1499 774 L1499 773 L1502 773 L1502 773 L1505 773 L1505 773 L1508 773 L1508 773 L1510 773 L1510 773 L1513 773 L1513 773 L1516 773 L1516 773 L1519 773 L1519 774 L1522 774 L1522 773 L1525 773 L1525 773 L1528 773 L1528 773 L1531 773 L1531 772 L1534 772 L1534 773 L1536 773 L1536 774 L1539 774 L1539 773 L1542 773 L1542 773 L1545 773 L1545 773 L1548 773 L1548 773 L1551 773 L1551 772 L1554 772 L1554 772 L1557 772 L1557 773 L1560 773 L1560 773 L1563 773 L1563 773 L1566 773 L1566 772 L1568 772 L1568 772 L1571 772 L1571 773 L1574 773 L1574 772 L1577 772 L1577 772 L1580 772 L1580 772 L1583 772 L1583 773 L1586 773 L1586 771 L1589 771 L1589 773 L1592 773 L1592 773 L1594 773 L1594 773 L1597 773 L1597 773 L1600 773 L1600 772 L1603 772 L1603 772 L1606 772 L1606 772 L1609 772 L1609 772 L1612 772 L1612 772 L1615 772 L1615 772 L1618 772 L1618 772 L1621 772 L1621 772 L1624 772 L1624 772 L1626 772 L1626 772 L1629 772 L1629 771 L1632 771 L1632 772 L1635 772 L1635 773 L1638 773 L1638 772 L1641 772 L1641 772 L1644 772 L1644 772 L1647 772 L1647 771 L1650 771 L1650 772 L1652 772 L1652 772 L1655 772 L1655 772 L1658 772 L1658 773 L1661 773 L1661 771 L1664 771 L1664 772 L1667 772 L1667 772 L1670 772 L1670 772 L1673 772 L1673 770 L1676 770 L1676 772 L1679 772 L1679 772 L1682 772 L1682 772 L1684 772 L1684 772 L1687 772 L1687 771 L1690 771 L1690 771 L1693 771 L1693 771 L1696 771 L1696 771 L1699 771 L1699 771 L1702 771 L1702 772 L1705 772 L1705 771 L1708 771 L1708 772 L1710 772 L1710 771 L1713 771 L1713 772 L1716 772 L1716 772 L1719 772 L1719 772 L1722 772 L1722 771 L1725 771 L1725 771 L1728 771 L1728 772 L1731 772 L1731 771 L1734 771 L1734 771 L1737 771 L1737 771 L1738 771" stroke="#ff8000" stroke-width="2" fill="none" stroke-linejoin="miter" stroke-linecap="square"/></svg>
<div class="box" style="top:735px"></div><div class="bt" style="top:735px">100.0</div>
<div class="box" style="top:786px"></div><div class="bt" style="top:786px">73.3 °C</div>
<div class="box" style="top:851px"></div><div class="bt" style="top:851px">0.0</div>
<div class="sq" style="left:1747px;top:770px;background:#3a3430;border-color:#b0b0b0"></div>
<div class="sq" style="left:1765px;top:770px;background:#808080"></div>
<div class="sq" style="left:1783px;top:770px;background:#a9c6ee"></div>
<div class="btn" style="left:1742px;top:820px;width:27px">Fit y</div>
<div class="btn" style="left:1771px;top:820px;width:28px">Reset</div>
<div style="position:absolute;left:1029px;top:876px;width:780px;height:165px;background:#393939"></div>
<div style="position:absolute;left:1029px;top:876px;width:780px;height:31px;background:#2b2b2b"></div>
<div style="position:absolute;left:1029px;top:876px;width:780px;height:1px;background:#3c4046"></div>
<div class="gt" style="left:1037px;top:883px">GPU Power</div>
<div style="position:absolute;left:1789px;top:883px;width:19px;height:19px;background:#282828"></div>
<div class="gx" style="left:1796px;top:884px">x</div>
<svg style="position:absolute;left:1029px;top:907px" width="710" height="133" viewBox="1029 907 710 133"><rect x="1029" y="907" width="710" height="133" fill="#c8c8c8"/><rect x="1029" y="907" width="710" height="132" fill="#a8a8a8"/><rect x="1030" y="908" width="709" height="131" fill="#808080"/><path d="M1030 1039 L1030 1029 L1031 1029 L1031 1029 L1034 1029 L1034 1029 L1037 1029 L1037 1029 L1040 1029 L1040 1029 L1043 1029 L1043 1029 L1046 1029 L1046 1029 L1049 1029 L1049 1029 L1052 1029 L1052 1029 L1054 1029 L1054 1029 L1057 1029 L1057 1029 L1060 1029 L1060 1029 L1063 1029 L1063 1029 L1066 1029 L1066 1029 L1069 1029 L1069 1029 L1072 1029 L1072 1029 L1075 1029 L1075 1029 L1078 1029 L1078 1029 L1081 1029 L1081 1029 L1084 1029 L1084 1029 L1086 1029 L1086 938 L1089 938 L1089 943 L1092 943 L1092 930 L1095 930 L1095 926 L1098 926 L1098 927 L1101 927 L1101 928 L1104 928 L1104 928 L1107 928 L1107 938 L1110 938 L1110 940 L1112 940 L1112 930 L1115 930 L1115 925 L1118 925 L1118 926 L1121 926 L1121 927 L1124 927 L1124 928 L1127 928 L1127 929 L1130 929 L1130 940 L1133 940 L1133 938 L1136 938 L1136 932 L1139 932 L1139 912 L1142 912 L1142 927 L1144 927 L1144 927 L1147 927 L1147 928 L1150 928 L1150 929 L1153 929 L1153 940 L1156 940 L1156 941 L1159 941 L1159 933 L1162 933 L1162 926 L1165 926 L1165 927 L1168 927 L1168 929 L1170 929 L1170 927 L1173 927 L1173 940 L1176 940 L1176 943 L1179 943 L1179 930 L1182 930 L1182 926 L1185 926 L1185 927 L1188 927 L1188 927 L1191 927 L1191 927 L1194 927 L1194 928 L1197 928 L1197 940 L1200 940 L1200 942 L1202 942 L1202 931 L1205 931 L1205 927 L1208 927 L1208 928 L1211 928 L1211 927 L1214 927 L1214 928 L1217 928 L1217 940 L1220 940 L1220 942 L1223 942 L1223 931 L1226 931 L1226 926 L1228 926 L1228 927 L1231 927 L1231 927 L1234 927 L1234 927 L1237 927 L1237 927 L1240 927 L1240 940 L1243 940 L1243 940 L1246 940 L1246 931 L1249 931 L1249 927 L1252 927 L1252 927 L1255 927 L1255 927 L1258 927 L1258 929 L1260 929 L1260 938 L1263 938 L1263 939 L1266 939 L1266 932 L1269 932 L1269 927 L1272 927 L1272 926 L1275 926 L1275 927 L1278 927 L1278 928 L1281 928 L1281 928 L1284 928 L1284 936 L1286 936 L1286 938 L1289 938 L1289 933 L1292 933 L1292 927 L1295 927 L1295 926 L1298 926 L1298 927 L1301 927 L1301 928 L1304 928 L1304 929 L1307 929 L1307 938 L1310 938 L1310 943 L1313 943 L1313 932 L1316 932 L1316 927 L1318 927 L1318 927 L1321 927 L1321 927 L1324 927 L1324 927 L1327 927 L1327 937 L1330 937 L1330 938 L1333 938 L1333 929 L1336 929 L1336 926 L1339 926 L1339 927 L1342 927 L1342 927 L1344 927 L1344 929 L1347 929 L1347 929 L1350 929 L1350 936 L1353 936 L1353 941 L1356 941 L1356 931 L1359 931 L1359 925 L1362 925 L1362 927 L1365 927 L1365 927 L1368 927 L1368 928 L1371 928 L1371 928 L1374 928 L1374 941 L1376 941 L1376 941 L1379 941 L1379 931 L1382 931 L1382 926 L1385 926 L1385 948 L1388 948 L1388 938 L1391 938 L1391 927 L1394 927 L1394 936 L1397 936 L1397 939 L1400 939 L1400 930 L1402 930 L1402 927 L1405 927 L1405 927 L1408 927 L1408 928 L1411 928 L1411 927 L1414 927 L1414 929 L1417 929 L1417 940 L1420 940 L1420 941 L1423 941 L1423 933 L1426 933 L1426 961 L1429 961 L1429 938 L1432 938 L1432 929 L1434 929 L1434 928 L1437 928 L1437 937 L1440 937 L1440 941 L1443 941 L1443 932 L1446 932 L1446 925 L1449 925 L1449 926 L1452 926 L1452 927 L1455 927 L1455 927 L1458 927 L1458 928 L1460 928 L1460 937 L1463 937 L1463 939 L1466 939 L1466 930 L1469 930 L1469 926 L1472 926 L1472 928 L1475 928 L1475 927 L1478 927 L1478 927 L1481 927 L1481 941 L1484 941 L1484 939 L1487 939 L1487 933 L1490 933 L1490 927 L1492 927 L1492 927 L1495 927 L1495 927 L1498 927 L1498 928 L1501 928 L1501 927 L1504 927 L1504 941 L1507 941 L1507 942 L1510 942 L1510 932 L1513 932 L1513 926 L1516 926 L1516 926 L1518 926 L1518 928 L1521 928 L1521 928 L1524 928 L1524 928 L1527 928 L1527 937 L1530 937 L1530 939 L1533 939 L1533 929 L1536 929 L1536 927 L1539 927 L1539 927 L1542 927 L1542 929 L1545 929 L1545 928 L1548 928 L1548 938 L1550 938 L1550 939 L1553 939 L1553 930 L1556 930 L1556 927 L1559 927 L1559 926 L1562 926 L1562 927 L1565 927 L1565 928 L1568 928 L1568 928 L1571 928 L1571 941 L1574 941 L1574 939 L1576 939 L1576 933 L1579 933 L1579 925 L1582 925 L1582 927 L1585 927 L1585 928 L1588 928 L1588 927 L1591 927 L1591 928 L1594 928 L1594 937 L1597 937 L1597 939 L1600 939 L1600 930 L1603 930 L1603 927 L1606 927 L1606 928 L1608 928 L1608 929 L1611 929 L1611 927 L1614 927 L1614 937 L1617 937 L1617 942 L1620 942 L1620 929 L1623 929 L1623 926 L1626 926 L1626 926 L1629 926 L1629 928 L1632 928 L1632 927 L1634 927 L1634 929 L1637 929 L1637 938 L1640 938 L1640 939 L1643 939 L1643 929 L1646 929 L1646 927 L1649 927 L1649 927 L1652 927 L1652 958 L1655 958 L1655 938 L1658 938 L1658 937 L1661 937 L1661 941 L1664 941 L1664 930 L1666 930 L1666 925 L1669 925 L1669 927 L1672 927 L1672 928 L1675 928 L1675 927 L1678 927 L1678 927 L1681 927 L1681 936 L1684 936 L1684 941 L1687 941 L1687 931 L1690 931 L1690 926 L1692 926 L1692 927 L1695 927 L1695 928 L1698 928 L1698 956 L1701 956 L1701 939 L1704 939 L1704 939 L1707 939 L1707 929 L1710 929 L1710 926 L1713 926 L1713 926 L1716 926 L1716 928 L1719 928 L1719 927 L1722 927 L1722 929 L1724 929 L1724 938 L1727 938 L1727 942 L1730 942 L1730 932 L1733 932 L1733 926 L1736 926 L1736 926 L1738 926 L1738 1039 Z" fill="#96b1fd"/><path d="M1038.5 908V1039M1058.5 908V1039M1078.5 908V1039M1098.5 908V1039M1118.5 908V1039M1138.5 908V1039M1158.5 908V1039M1178.5 908V1039M1198.5 908V1039M1218.5 908V1039M1238.5 908V1039M1258.5 908V1039M1278.5 908V1039M1298.5 908V1039M1318.5 908V1039M1338.5 908V1039M1358.5 908V1039M1378.5 908V1039M1398.5 908V1039M1418.5 908V1039M1438.5 908V1039M1458.5 908V1039M1478.5 908V1039M1498.5 908V1039M1518.5 908V1039M1538.5 908V1039M1558.5 908V1039M1578.5 908V1039M1598.5 908V1039M1618.5 908V1039M1638.5 908V1039M1658.5 908V1039M1678.5 908V1039M1698.5 908V1039M1718.5 908V1039M1030 1038.5H1738M1030 1018.5H1738M1030 998.5H1738M1030 978.5H1738M1030 958.5H1738M1030 938.5H1738M1030 918.5H1738" stroke="#a9c6ee" stroke-width="1" fill="none"/><path d="M1030 1029 L1031 1029 L1031 1029 L1034 1029 L1034 1029 L1037 1029 L1037 1029 L1040 1029 L1040 1029 L1043 1029 L1043 1029 L1046 1029 L1046 1029 L1049 1029 L1049 1029 L1052 1029 L1052 1029 L1054 1029 L1054 1029 L1057 1029 L1057 1029 L1060 1029 L1060 1029 L1063 1029 L1063 1029 L1066 1029 L1066 1029 L1069 1029 L1069 1029 L1072 1029 L1072 1029 L1075 1029 L1075 1029 L1078 1029 L1078 1029 L1081 1029 L1081 1029 L1084 1029 L1084 1029 L1086 1029 L1086 938 L1089 938 L1089 943 L1092 943 L1092 930 L1095 930 L1095 926 L1098 926 L1098 927 L1101 927 L1101 928 L1104 928 L1104 928 L1107 928 L1107 938 L1110 938 L1110 940 L1112 940 L1112 930 L1115 930 L1115 925 L1118 925 L1118 926 L1121 926 L1121 927 L1124 927 L1124 928 L1127 928 L1127 929 L1130 929 L1130 940 L1133 940 L1133 938 L1136 938 L1136 932 L1139 932 L1139 912 L1142 912 L1142 927 L1144 927 L1144 927 L1147 927 L1147 928 L1150 928 L1150 929 L1153 929 L1153 940 L1156 940 L1156 941 L1159 941 L1159 933 L1162 933 L1162 926 L1165 926 L1165 927 L1168 927 L1168 929 L1170 929 L1170 927 L1173 927 L1173 940 L1176 940 L1176 943 L1179 943 L1179 930 L1182 930 L1182 926 L1185 926 L1185 927 L1188 927 L1188 927 L1191 927 L1191 927 L1194 927 L1194 928 L1197 928 L1197 940 L1200 940 L1200 942 L1202 942 L1202 931 L1205 931 L1205 927 L1208 927 L1208 928 L1211 928 L1211 927 L1214 927 L1214 928 L1217 928 L1217 940 L1220 940 L1220 942 L1223 942 L1223 931 L1226 931 L1226 926 L1228 926 L1228 927 L1231 927 L1231 927 L1234 927 L1234 927 L1237 927 L1237 927 L1240 927 L1240 940 L1243 940 L1243 940 L1246 940 L1246 931 L1249 931 L1249 927 L1252 927 L1252 927 L1255 927 L1255 927 L1258 927 L1258 929 L1260 929 L1260 938 L1263 938 L1263 939 L1266 939 L1266 932 L1269 932 L1269 927 L1272 927 L1272 926 L1275 926 L1275 927 L1278 927 L1278 928 L1281 928 L1281 928 L1284 928 L1284 936 L1286 936 L1286 938 L1289 938 L1289 933 L1292 933 L1292 927 L1295 927 L1295 926 L1298 926 L1298 927 L1301 927 L1301 928 L1304 928 L1304 929 L1307 929 L1307 938 L1310 938 L1310 943 L1313 943 L1313 932 L1316 932 L1316 927 L1318 927 L1318 927 L1321 927 L1321 927 L1324 927 L1324 927 L1327 927 L1327 937 L1330 937 L1330 938 L1333 938 L1333 929 L1336 929 L1336 926 L1339 926 L1339 927 L1342 927 L1342 927 L1344 927 L1344 929 L1347 929 L1347 929 L1350 929 L1350 936 L1353 936 L1353 941 L1356 941 L1356 931 L1359 931 L1359 925 L1362 925 L1362 927 L1365 927 L1365 927 L1368 927 L1368 928 L1371 928 L1371 928 L1374 928 L1374 941 L1376 941 L1376 941 L1379 941 L1379 931 L1382 931 L1382 926 L1385 926 L1385 948 L1388 948 L1388 938 L1391 938 L1391 927 L1394 927 L1394 936 L1397 936 L1397 939 L1400 939 L1400 930 L1402 930 L1402 927 L1405 927 L1405 927 L1408 927 L1408 928 L1411 928 L1411 927 L1414 927 L1414 929 L1417 929 L1417 940 L1420 940 L1420 941 L1423 941 L1423 933 L1426 933 L1426 961 L1429 961 L1429 938 L1432 938 L1432 929 L1434 929 L1434 928 L1437 928 L1437 937 L1440 937 L1440 941 L1443 941 L1443 932 L1446 932 L1446 925 L1449 925 L1449 926 L1452 926 L1452 927 L1455 927 L1455 927 L1458 927 L1458 928 L1460 928 L1460 937 L1463 937 L1463 939 L1466 939 L1466 930 L1469 930 L1469 926 L1472 926 L1472 928 L1475 928 L1475 927 L1478 927 L1478 927 L1481 927 L1481 941 L1484 941 L1484 939 L1487 939 L1487 933 L1490 933 L1490 927 L1492 927 L1492 927 L1495 927 L1495 927 L1498 927 L1498 928 L1501 928 L1501 927 L1504 927 L1504 941 L1507 941 L1507 942 L1510 942 L1510 932 L1513 932 L1513 926 L1516 926 L1516 926 L1518 926 L1518 928 L1521 928 L1521 928 L1524 928 L1524 928 L1527 928 L1527 937 L1530 937 L1530 939 L1533 939 L1533 929 L1536 929 L1536 927 L1539 927 L1539 927 L1542 927 L1542 929 L1545 929 L1545 928 L1548 928 L1548 938 L1550 938 L1550 939 L1553 939 L1553 930 L1556 930 L1556 927 L1559 927 L1559 926 L1562 926 L1562 927 L1565 927 L1565 928 L1568 928 L1568 928 L1571 928 L1571 941 L1574 941 L1574 939 L1576 939 L1576 933 L1579 933 L1579 925 L1582 925 L1582 927 L1585 927 L1585 928 L1588 928 L1588 927 L1591 927 L1591 928 L1594 928 L1594 937 L1597 937 L1597 939 L1600 939 L1600 930 L1603 930 L1603 927 L1606 927 L1606 928 L1608 928 L1608 929 L1611 929 L1611 927 L1614 927 L1614 937 L1617 937 L1617 942 L1620 942 L1620 929 L1623 929 L1623 926 L1626 926 L1626 926 L1629 926 L1629 928 L1632 928 L1632 927 L1634 927 L1634 929 L1637 929 L1637 938 L1640 938 L1640 939 L1643 939 L1643 929 L1646 929 L1646 927 L1649 927 L1649 927 L1652 927 L1652 958 L1655 958 L1655 938 L1658 938 L1658 937 L1661 937 L1661 941 L1664 941 L1664 930 L1666 930 L1666 925 L1669 925 L1669 927 L1672 927 L1672 928 L1675 928 L1675 927 L1678 927 L1678 927 L1681 927 L1681 936 L1684 936 L1684 941 L1687 941 L1687 931 L1690 931 L1690 926 L1692 926 L1692 927 L1695 927 L1695 928 L1698 928 L1698 956 L1701 956 L1701 939 L1704 939 L1704 939 L1707 939 L1707 929 L1710 929 L1710 926 L1713 926 L1713 926 L1716 926 L1716 928 L1719 928 L1719 927 L1722 927 L1722 929 L1724 929 L1724 938 L1727 938 L1727 942 L1730 942 L1730 932 L1733 932 L1733 926 L1736 926 L1736 926 L1738 926" stroke="#0a84ff" stroke-width="2" fill="none" stroke-linejoin="miter" stroke-linecap="square"/></svg>
<div class="box" style="top:907px"></div><div class="bt" style="top:907px">150</div>
<div class="box" style="top:958px"></div><div class="bt" style="top:958px">111.777 W</div>
<div class="box" style="top:1023px"></div><div class="bt" style="top:1023px">0.000</div>
<div class="sq" style="left:1747px;top:942px;background:#30363a;border-color:#f8f8f8"></div>
<div class="sq" style="left:1765px;top:942px;background:#808080"></div>
<div class="sq" style="left:1783px;top:942px;background:#a9c6ee"></div>
<div class="btn" style="left:1742px;top:992px;width:27px">Fit y</div>
<div class="btn" style="left:1771px;top:992px;width:28px">Reset</div>
</body></html>
